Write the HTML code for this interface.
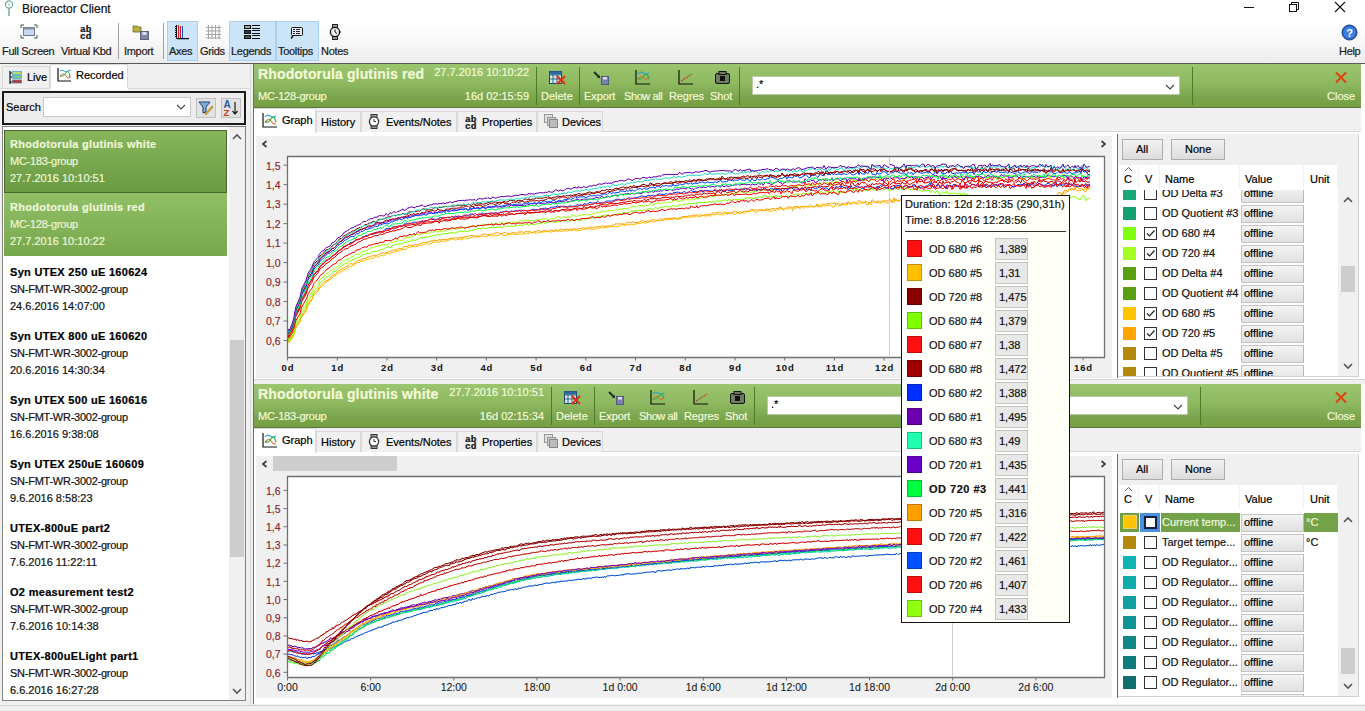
<!DOCTYPE html><html><head><meta charset="utf-8"><style>
*{box-sizing:border-box;margin:0;padding:0}
html,body{width:1365px;height:711px;overflow:hidden;background:#f0f0f0;font-family:"Liberation Sans",sans-serif;font-size:11px;color:#000}
.a{position:absolute}
.t{position:absolute;white-space:nowrap;line-height:1;-webkit-text-stroke:0.2px currentColor}
.ht{-webkit-text-stroke:0.2px currentColor}
.sep{position:absolute;width:1px;background:#a0a0a0}
.gsep{position:absolute;width:1px;background:#4f7a2c}
.hdr{position:absolute;background:linear-gradient(#9bc56f,#8eb95f 45%,#7ca650 75%,#75a142 96%);border-bottom:1px solid #5e7448}
.ht{position:absolute;white-space:nowrap;line-height:1;color:#f3f9d8}
.tab{position:absolute;background:#f0f0f0;border:1px solid #d9d9d9;border-bottom:none}
.tabs{position:absolute;background:#fff;border:1px solid #d9d9d9;border-bottom:none}
.btn{position:absolute;background:linear-gradient(#f2f2f2,#dcdcdc);border:1px solid #adadad}
.vbox{position:absolute;background:linear-gradient(#f4f4f4,#e0e0e0);border:1px solid #c4c4c4;border-right-color:#b8b8b8}
.sw{position:absolute;width:14px;height:14px}
.cb{position:absolute;width:13px;height:13px;border:1px solid #333;background:#fff}
</style></head><body>
<div class="a" style="left:0;top:0;width:1365px;height:63px;background:linear-gradient(#fff 0px,#fff 22px,#f6f6f6 45px,#ececec 62px)"></div>
<div class="a" style="left:0;top:63px;width:1365px;height:1px;background:#585858"></div>
<svg class="a" style="left:3px;top:0px" width="14" height="17"><circle cx="6" cy="4.5" r="3.6" fill="none" stroke="#6fae90" stroke-width="1.2"/><line x1="6" y1="8" x2="6" y2="16" stroke="#7ab59a" stroke-width="1.6"/><line x1="6" y1="3" x2="6" y2="6" stroke="#6fae90" stroke-width="0.8"/></svg>
<div class="t" style="left:22px;top:3px;font-size:12px;color:#111">Bioreactor Client</div>
<div class="a" style="left:1244px;top:7px;width:10px;height:1px;background:#111"></div>
<svg class="a" style="left:1288px;top:1px" width="12" height="12"><rect x="1.5" y="3.5" width="7" height="7" fill="none" stroke="#111"/><path d="M3.5 3.5V1.5H10.5V8.5H8.5" fill="none" stroke="#111"/></svg>
<svg class="a" style="left:1334px;top:1px" width="12" height="12"><path d="M1 1L11 11M11 1L1 11" stroke="#111" stroke-width="1.1"/></svg>
<div class="a" style="left:167px;top:21px;width:31px;height:40px;background:#cce4f7;border:1px solid #a8d0f0"></div>
<div class="a" style="left:229px;top:21px;width:47px;height:40px;background:#cce4f7;border:1px solid #a8d0f0"></div>
<div class="a" style="left:276px;top:21px;width:43px;height:40px;background:#cce4f7;border:1px solid #a8d0f0"></div>
<div class="sep" style="left:118px;top:23px;height:36px"></div>
<div class="sep" style="left:163px;top:23px;height:36px"></div>
<div class="t" style="left:2px;top:46px;font-size:11px;letter-spacing:-0.3px;color:#1a1a1a">Full Screen</div>
<div class="t" style="left:61px;top:46px;font-size:11px;letter-spacing:-0.3px;color:#1a1a1a">Virtual Kbd</div>
<div class="t" style="left:124px;top:46px;font-size:11px;letter-spacing:-0.3px;color:#1a1a1a">Import</div>
<div class="t" style="left:169px;top:46px;font-size:11px;letter-spacing:-0.3px;color:#1a1a1a">Axes</div>
<div class="t" style="left:200px;top:46px;font-size:11px;letter-spacing:-0.3px;color:#1a1a1a">Grids</div>
<div class="t" style="left:231px;top:46px;font-size:11px;letter-spacing:-0.3px;color:#1a1a1a">Legends</div>
<div class="t" style="left:278px;top:46px;font-size:11px;letter-spacing:-0.3px;color:#1a1a1a">Tooltips</div>
<div class="t" style="left:321px;top:46px;font-size:11px;letter-spacing:-0.3px;color:#1a1a1a">Notes</div>
<div class="t" style="left:1339px;top:46px;font-size:11px;letter-spacing:-0.3px;color:#1a1a1a">Help</div>
<svg class="a" style="left:20px;top:24px" width="18" height="15"><path d="M1 4V1H4M14 1H17V4M17 11V14H14M4 14H1V11" fill="none" stroke="#3a5a3a" stroke-width="1"/><rect x="3.5" y="3.5" width="11" height="8" fill="#c8d8f0" stroke="#6a7a90"/><rect x="3.5" y="3.5" width="11" height="2" fill="#8090a8"/></svg>
<div class="t" style="left:80px;top:26px;font-family:'Liberation Mono',monospace;font-size:9.5px;line-height:7px;font-weight:bold;color:#111">ab<br>cd</div>
<svg class="a" style="left:132px;top:24px" width="18" height="16"><path d="M1 2H5L6 3H9V8H1Z" fill="#b8b040" stroke="#706820" stroke-width="0.8"/><rect x="8.5" y="7.5" width="8" height="8" fill="#8088a8" stroke="#606080"/><rect x="10.5" y="8" width="4" height="3" fill="#dde"/></svg>
<svg class="a" style="left:172px;top:24px" width="20" height="17"><path d="M4.5 1V14.5H17" fill="none" stroke="#111" stroke-width="1"/><path d="M3 2.5H4M3 4.5H4M3 6.5H4M3 8.5H4M3 10.5H4M3 12.5H4M6 15.5V16M8 15.5V16M10 15.5V16M12 15.5V16M14 15.5V16M16 15.5V16" stroke="#111"/><path d="M6.5 1V14M8.5 2V14" stroke="#d01828" stroke-width="1"/><path d="M7.5 3H8M7.5 6H8M7.5 9H8M7.5 12H8" stroke="#f0a0a0"/><path d="M10.5 2V14" stroke="#1a60c8" stroke-width="1"/></svg>
<svg class="a" style="left:206px;top:25px" width="15" height="15"><path d="M2.5 0V14M6 0V14M9.5 0V14M13 0V14M0 2.5H15M0 6H15M0 9.5H15M0 13H15" stroke="#a4a4a4" stroke-width="1"/></svg>
<svg class="a" style="left:244px;top:24px" width="17" height="15"><rect x="0.5" y="1.5" width="6" height="3" fill="#9a9" stroke="#111"/><rect x="0.5" y="6.5" width="6" height="3" fill="#335" stroke="#111"/><rect x="0.5" y="11.5" width="6" height="3" fill="#555" stroke="#111"/><path d="M8 1.5H16M8 4.5H16M8 6.5H16M8 9.5H16M8 11.5H16M8 14.5H16" stroke="#111" stroke-width="1"/></svg>
<svg class="a" style="left:290px;top:26px" width="14" height="14"><rect x="1.5" y="1.5" width="11" height="8" rx="1" fill="#e8eef8" stroke="#111"/><path d="M3 10L1 12.5" stroke="#111" stroke-width="1.5"/><path d="M3 3.5H5M6 3.5H10M3 5.5H5M6 5.5H10M3 7.5H5M6 7.5H10" stroke="#223"/></svg>
<svg class="a" style="left:329px;top:24px" width="13" height="16"><rect x="3.5" y="0.5" width="5" height="3" fill="#999" stroke="#222"/><rect x="3.5" y="12.5" width="5" height="3" fill="#999" stroke="#222"/><circle cx="6" cy="8" r="4.6" fill="#e8ece8" stroke="#111" stroke-width="1.3"/><path d="M6 5.5V8L8 9.5" stroke="#111" fill="none"/><path d="M11 7V9" stroke="#111"/></svg>
<svg class="a" style="left:1341px;top:24px" width="17" height="17"><circle cx="8.5" cy="8.5" r="7.5" fill="#2a64c8" stroke="#1a3a80"/><circle cx="8.5" cy="8.5" r="6" fill="#3f7ee0"/><text x="8.5" y="13" font-family="Liberation Sans" font-weight="bold" font-size="11" fill="#fff" text-anchor="middle">?</text></svg>
<div class="a" style="left:2px;top:66px;width:48px;height:22px;background:#f0f0f0;border:1px solid #d9d9d9;border-bottom:none"></div>
<div class="a" style="left:50px;top:64px;width:78px;height:25px;background:#fff;border:1px solid #d9d9d9;border-bottom:none"></div>
<div class="a" style="left:0px;top:88px;width:250px;height:1px;background:#d9d9d9"></div>
<div class="a" style="left:50px;top:88px;width:78px;height:2px;background:#fff"></div>
<svg class="a" style="left:9px;top:70px" width="14" height="15"><path d="M1 1V14M1 3H3M1 7H3M1 12H3" stroke="#111" stroke-width="1.2"/><rect x="3.5" y="1.5" width="9" height="3" fill="#b8e060" stroke="#60a0d0" stroke-width="0.8"/><rect x="3.5" y="5.5" width="9" height="3" fill="#70d080" stroke="#60a0d0" stroke-width="0.8"/><rect x="3.5" y="10" width="9" height="3" fill="#c03030" stroke="#6080a0" stroke-width="0.8"/></svg>
<div class="t" style="left:27px;top:72px">Live</div>
<svg class="a" style="left:57px;top:68px" width="14" height="15"><path d="M1 0V13H14" fill="none" stroke="#111" stroke-width="1.2"/><path d="M3 3Q5 1 7 3T11 3T14 3" fill="none" stroke="#30a0c0"/><path d="M3 9Q6 3 9 8T13 7" fill="none" stroke="#e06030"/><path d="M3 7Q6 10 9 5T13 10" fill="none" stroke="#30b050"/></svg>
<div class="t" style="left:76px;top:70px">Recorded</div>
<div class="a" style="left:2px;top:91px;width:244px;height:34px;background:#ececec;border:2px solid #1a1a1a"></div>
<div class="t" style="left:6px;top:102px">Search</div>
<div class="a" style="left:43px;top:97px;width:148px;height:20px;background:#fff;border:1px solid #c8c8c8"></div>
<svg class="a" style="left:176px;top:104px" width="10" height="6"><path d="M1 1L5 5L9 1" fill="none" stroke="#444" stroke-width="1.1"/></svg>
<div class="a" style="left:196px;top:98px;width:20px;height:20px;background:#e2e2e2;border:1px solid #c0c0c0"></div>
<div class="a" style="left:221px;top:98px;width:20px;height:20px;background:#e2e2e2;border:1px solid #c0c0c0"></div>
<svg class="a" style="left:198px;top:100px" width="16" height="16"><path d="M1 2H12L8 7V12L5 13V7Z" fill="#7ab0e0" stroke="#204070" stroke-width="1"/><path d="M7 14L14 6L15 7L8 15Z" fill="#f0c020" stroke="#806010" stroke-width="0.6"/></svg>
<svg class="a" style="left:223px;top:100px" width="16" height="16"><text x="0.5" y="8" font-family="Liberation Sans" font-weight="bold" font-size="10" fill="#2a5aa8">A</text><text x="0.5" y="16" font-family="Liberation Sans" font-weight="bold" font-size="9.5" fill="#c83c10">Z</text><path d="M12 2V14M9.5 11L12 14L14.5 11" fill="none" stroke="#222" stroke-width="1.2"/></svg>
<div class="a" style="left:2px;top:126px;width:244px;height:575px;background:#fff;border:1px solid #828282"></div>
<div class="a" style="left:229px;top:127px;width:16px;height:573px;background:#f0f0f0"></div>
<div class="a" style="left:230px;top:340px;width:14px;height:217px;background:#cdcdcd"></div>
<svg class="a" style="left:232px;top:133px" width="10" height="7"><path d="M1 6L5 2L9 6" fill="none" stroke="#555" stroke-width="1.6"/></svg>
<svg class="a" style="left:232px;top:688px" width="10" height="7"><path d="M1 1L5 5L9 1" fill="none" stroke="#555" stroke-width="1.6"/></svg>
<div class="a" style="left:4px;top:130px;width:223px;height:63px;background:linear-gradient(#87b55c,#6a9a42);border:1px solid #46682e"></div>
<div class="t" style="left:10px;top:139px;font-weight:bold;font-size:11px;letter-spacing:0.3px;color:#eef6da">Rhodotorula glutinis white</div>
<div class="t" style="left:10px;top:156px;color:#eef6da;letter-spacing:-0.25px">MC-183-group</div>
<div class="t" style="left:10px;top:173px;color:#eef6da">27.7.2016 10:10:51</div>
<div class="a" style="left:4px;top:193px;width:223px;height:63px;background:linear-gradient(#91bf66,#77a74c)"></div>
<div class="t" style="left:10px;top:202px;font-weight:bold;font-size:11px;letter-spacing:0.3px;color:#eef6da">Rhodotorula glutinis red</div>
<div class="t" style="left:10px;top:219px;color:#eef6da;letter-spacing:-0.25px">MC-128-group</div>
<div class="t" style="left:10px;top:236px;color:#eef6da">27.7.2016 10:10:22</div>
<div class="t" style="left:10px;top:267px;font-weight:bold;font-size:11px;letter-spacing:0.3px;color:#000">Syn UTEX 250 uE 160624</div>
<div class="t" style="left:10px;top:284px;color:#111;letter-spacing:-0.25px">SN-FMT-WR-3002-group</div>
<div class="t" style="left:10px;top:301px;color:#111">24.6.2016 14:07:00</div>
<div class="t" style="left:10px;top:331px;font-weight:bold;font-size:11px;letter-spacing:0.3px;color:#000">Syn UTEX 800 uE 160620</div>
<div class="t" style="left:10px;top:348px;color:#111;letter-spacing:-0.25px">SN-FMT-WR-3002-group</div>
<div class="t" style="left:10px;top:365px;color:#111">20.6.2016 14:30:34</div>
<div class="t" style="left:10px;top:395px;font-weight:bold;font-size:11px;letter-spacing:0.3px;color:#000">Syn UTEX 500 uE 160616</div>
<div class="t" style="left:10px;top:412px;color:#111;letter-spacing:-0.25px">SN-FMT-WR-3002-group</div>
<div class="t" style="left:10px;top:429px;color:#111">16.6.2016 9:38:08</div>
<div class="t" style="left:10px;top:459px;font-weight:bold;font-size:11px;letter-spacing:0.3px;color:#000">Syn UTEX 250uE 160609</div>
<div class="t" style="left:10px;top:476px;color:#111;letter-spacing:-0.25px">SN-FMT-WR-3002-group</div>
<div class="t" style="left:10px;top:493px;color:#111">9.6.2016 8:58:23</div>
<div class="t" style="left:10px;top:523px;font-weight:bold;font-size:11px;letter-spacing:0.3px;color:#000">UTEX-800uE part2</div>
<div class="t" style="left:10px;top:540px;color:#111;letter-spacing:-0.25px">SN-FMT-WR-3002-group</div>
<div class="t" style="left:10px;top:557px;color:#111">7.6.2016 11:22:11</div>
<div class="t" style="left:10px;top:587px;font-weight:bold;font-size:11px;letter-spacing:0.3px;color:#000">O2 measurement test2</div>
<div class="t" style="left:10px;top:604px;color:#111;letter-spacing:-0.25px">SN-FMT-WR-3002-group</div>
<div class="t" style="left:10px;top:621px;color:#111">7.6.2016 10:14:38</div>
<div class="t" style="left:10px;top:651px;font-weight:bold;font-size:11px;letter-spacing:0.3px;color:#000">UTEX-800uELight part1</div>
<div class="t" style="left:10px;top:668px;color:#111;letter-spacing:-0.25px">SN-FMT-WR-3002-group</div>
<div class="t" style="left:10px;top:685px;color:#111">6.6.2016 16:27:28</div>
<div class="a" style="left:250px;top:64px;width:1px;height:641px;background:#d8d8d8"></div>
<div class="a" style="left:0px;top:705px;width:1365px;height:1px;background:#d0d0d0"></div>
<div class="a" style="left:253px;top:64px;width:1112px;height:316px;background:#fff;border-left:1px solid #6e6e6e"></div>
<div class="hdr" style="left:254px;top:64px;width:1107px;height:44px"></div>
<div class="a" style="left:254px;top:108px;width:1107px;height:1px;background:#e4eedc"></div>
<div class="ht" style="left:258px;top:67px;font-weight:bold;font-size:14px;letter-spacing:0.15px">Rhodotorula glutinis red</div>
<div class="ht" style="left:258px;top:91px;font-size:11px;letter-spacing:-0.2px">MC-128-group</div>
<div class="ht" style="left:433px;width:96px;text-align:right;top:67px;font-size:11px">27.7.2016 10:10:22</div>
<div class="ht" style="left:433px;width:96px;text-align:right;top:91px;font-size:11px">16d 02:15:59</div>
<div class="gsep" style="left:536px;top:67px;height:38px"></div>
<div class="ht" style="left:541px;top:91px">Delete</div>
<svg class="a" style="left:549px;top:71px" width="18" height="14"><rect x="0.5" y="0.5" width="12" height="12" fill="#d8e8f0" stroke="#1a4a6a"/><path d="M0.5 4H12M4 1V12M8 1V12M0.5 8H12" stroke="#1a4a6a" stroke-width="0.8"/><rect x="0.5" y="0.5" width="12" height="3" fill="#2a6aa0"/><path d="M8 5L16 13M16 5L8 13" stroke="#e03010" stroke-width="2"/></svg>
<div class="gsep" style="left:579px;top:67px;height:38px"></div>
<div class="ht" style="left:584px;top:91px;letter-spacing:-0.1px">Export</div>
<div class="ht" style="left:624px;top:91px;letter-spacing:-0.4px">Show all</div>
<div class="ht" style="left:669px;top:91px;letter-spacing:-0.1px">Regres</div>
<div class="ht" style="left:710px;top:91px;letter-spacing:-0.1px">Shot</div>
<svg class="a" style="left:592px;top:70px" width="18" height="15"><path d="M2 2L7 7" stroke="#203020" stroke-width="2"/><path d="M5 8H8V5Z" fill="#203020"/><rect x="9.5" y="6.5" width="7" height="8" fill="#7880b0" stroke="#505880"/><rect x="11" y="7" width="4" height="2.5" fill="#dde"/></svg>
<svg class="a" style="left:635px;top:70px" width="16" height="15"><path d="M1 0V14H15" fill="none" stroke="#111" stroke-width="1.2"/><path d="M3 4Q5 1 8 3T14 3" fill="none" stroke="#30a0d0" stroke-width="1.2"/><path d="M3 10Q6 4 9 8T14 6" fill="none" stroke="#e07030" stroke-width="1.2"/><path d="M3 8Q6 11 9 6T14 9" fill="none" stroke="#30b050" stroke-width="1.2"/></svg>
<svg class="a" style="left:678px;top:70px" width="16" height="15"><path d="M1 0V14H15" fill="none" stroke="#111" stroke-width="1.2"/><path d="M3 11L14 4" stroke="#c04020" stroke-width="1.2" stroke-dasharray="2 1"/></svg>
<svg class="a" style="left:715px;top:71px" width="15" height="13"><rect x="0.5" y="2.5" width="14" height="10" rx="1.5" fill="#707c60" stroke="#111"/><rect x="4" y="0.5" width="7" height="3" fill="#707c60" stroke="#111"/><rect x="5" y="5" width="5" height="5" fill="#111"/></svg>
<div class="gsep" style="left:739px;top:67px;height:38px"></div>
<div class="a" style="left:752px;top:76px;width:428px;height:19px;background:#fff;border:1px solid #b8c8a8"></div>
<div class="t" style="left:756px;top:79px;font-size:11px">.*</div>
<svg class="a" style="left:1165px;top:84px" width="10" height="6"><path d="M1 1L5 5L9 1" fill="none" stroke="#444" stroke-width="1.1"/></svg>
<div class="gsep" style="left:1192px;top:67px;height:38px"></div>
<svg class="a" style="left:1334px;top:71px" width="14" height="13"><path d="M2 1.5L12 11.5M12 1.5L2 11.5" stroke="#e04010" stroke-width="2"/></svg>
<div class="ht" style="left:1327px;top:91px">Close</div>
<div class="a" style="left:254px;top:108px;width:1107px;height:24px;background:#f0f0f0"></div>
<div class="a" style="left:254px;top:131px;width:1107px;height:1px;background:#d9d9d9"></div>
<div class="tab" style="left:316px;top:111px;width:45px;height:21px"></div>
<div class="tab" style="left:361px;top:111px;width:96px;height:21px"></div>
<div class="tab" style="left:457px;top:111px;width:80px;height:21px"></div>
<div class="tab" style="left:537px;top:111px;width:66px;height:21px"></div>
<div class="tabs" style="left:254px;top:108px;width:62px;height:25px;border-left:none"></div>
<div class="a" style="left:254px;top:131px;width:61px;height:2px;background:#fff"></div>
<svg class="a" style="left:262px;top:113px" width="16" height="15"><path d="M1 0V14H15" fill="none" stroke="#111" stroke-width="1.2"/><path d="M3 4Q5 1 8 3T14 3" fill="none" stroke="#30a0d0" stroke-width="1.2"/><path d="M3 10Q6 4 9 8T14 11" fill="none" stroke="#e07030" stroke-width="1.2"/><path d="M3 8Q6 11 9 6T14 9" fill="none" stroke="#30b050" stroke-width="1.2"/></svg>
<div class="t" style="left:282px;top:115px;font-size:11px">Graph</div>
<div class="t" style="left:321px;top:117px;font-size:11px">History</div>
<svg class="a" style="left:368px;top:114px" width="12" height="15"><rect x="3" y="0.5" width="6" height="3" fill="#999" stroke="#333"/><rect x="3" y="11.5" width="6" height="3" fill="#999" stroke="#333"/><circle cx="6" cy="7.5" r="4.6" fill="#fff" stroke="#333" stroke-width="1.3"/><path d="M6 5V7.5H8" stroke="#333" fill="none"/></svg>
<div class="t" style="left:386px;top:117px;font-size:11px">Events/Notes</div>
<div class="t" style="left:465px;top:116px;font-family:'Liberation Mono',monospace;font-size:9.5px;line-height:7px;font-weight:bold;color:#111">ab<br>cd</div>
<div class="t" style="left:482px;top:117px;font-size:11px">Properties</div>
<svg class="a" style="left:544px;top:114px" width="14" height="14"><rect x="0.5" y="0.5" width="8" height="8" fill="#ddd" stroke="#999"/><rect x="3.5" y="3.5" width="8" height="8" fill="#ccc" stroke="#999"/><rect x="5.5" y="5.5" width="8" height="8" fill="#bbb" stroke="#888"/></svg>
<div class="t" style="left:562px;top:117px;font-size:11px">Devices</div>
<div class="a" style="left:256px;top:136px;width:856px;height:242px;background:#f0f0f0"></div>
<svg class="a" style="left:261px;top:140px" width="7" height="8"><path d="M5.5 1L2 4L5.5 7" fill="none" stroke="#444" stroke-width="1.8"/></svg>
<svg class="a" style="left:1100px;top:140px" width="7" height="8"><path d="M1.5 1L5 4L1.5 7" fill="none" stroke="#444" stroke-width="1.8"/></svg>
<div class="a" style="left:1117px;top:134px;width:1px;height:244px;background:#6e6e6e"></div>
<div class="a" style="left:1118px;top:134px;width:241px;height:243px;background:#f0f0f0;border-right:1px solid #d0d0d0;border-bottom:1px solid #d0d0d0"></div>
<div class="btn" style="left:1122px;top:139px;width:41px;height:21px"></div>
<div class="t" style="left:1136px;top:144px">All</div>
<div class="btn" style="left:1171px;top:139px;width:54px;height:21px"></div>
<div class="t" style="left:1185px;top:144px">None</div>
<div class="a" style="left:1119px;top:165px;width:219px;height:211px;background:#fff"></div>
<div class="a" style="left:0;top:165px;width:1338px;height:211px;overflow:hidden">
<div class="sw" style="left:1123px;top:22px;width:13px;height:13px;background:#1aa878"></div>
<div class="cb" style="left:1144px;top:22px;"></div>
<div class="t" style="left:1162px;top:23px;color:#111;font-size:11px">OD Delta #3</div>
<div class="vbox" style="left:1241px;top:20px;width:63px;height:18px"></div>
<div class="t" style="left:1244px;top:23px;font-size:11px">offline</div>
<div class="sw" style="left:1123px;top:42px;width:13px;height:13px;background:#12a070"></div>
<div class="cb" style="left:1144px;top:42px;"></div>
<div class="t" style="left:1162px;top:43px;color:#111;font-size:11px">OD Quotient #3</div>
<div class="vbox" style="left:1241px;top:40px;width:63px;height:18px"></div>
<div class="t" style="left:1244px;top:43px;font-size:11px">offline</div>
<div class="sw" style="left:1123px;top:62px;width:13px;height:13px;background:#80ff10"></div>
<div class="cb" style="left:1144px;top:62px;"></div>
<svg class="a" style="left:1145px;top:63px" width="11" height="11"><path d="M2 5.5L4.5 8L9.5 2.5" fill="none" stroke="#222" stroke-width="1.2"/></svg>
<div class="t" style="left:1162px;top:63px;color:#111;font-size:11px">OD 680 #4</div>
<div class="vbox" style="left:1241px;top:60px;width:63px;height:18px"></div>
<div class="t" style="left:1244px;top:63px;font-size:11px">offline</div>
<div class="sw" style="left:1123px;top:82px;width:13px;height:13px;background:#a4ff20"></div>
<div class="cb" style="left:1144px;top:82px;"></div>
<svg class="a" style="left:1145px;top:83px" width="11" height="11"><path d="M2 5.5L4.5 8L9.5 2.5" fill="none" stroke="#222" stroke-width="1.2"/></svg>
<div class="t" style="left:1162px;top:83px;color:#111;font-size:11px">OD 720 #4</div>
<div class="vbox" style="left:1241px;top:80px;width:63px;height:18px"></div>
<div class="t" style="left:1244px;top:83px;font-size:11px">offline</div>
<div class="sw" style="left:1123px;top:102px;width:13px;height:13px;background:#5aa010"></div>
<div class="cb" style="left:1144px;top:102px;"></div>
<div class="t" style="left:1162px;top:103px;color:#111;font-size:11px">OD Delta #4</div>
<div class="vbox" style="left:1241px;top:100px;width:63px;height:18px"></div>
<div class="t" style="left:1244px;top:103px;font-size:11px">offline</div>
<div class="sw" style="left:1123px;top:122px;width:13px;height:13px;background:#5a9e12"></div>
<div class="cb" style="left:1144px;top:122px;"></div>
<div class="t" style="left:1162px;top:123px;color:#111;font-size:11px">OD Quotient #4</div>
<div class="vbox" style="left:1241px;top:120px;width:63px;height:18px"></div>
<div class="t" style="left:1244px;top:123px;font-size:11px">offline</div>
<div class="sw" style="left:1123px;top:142px;width:13px;height:13px;background:#ffc400"></div>
<div class="cb" style="left:1144px;top:142px;"></div>
<svg class="a" style="left:1145px;top:143px" width="11" height="11"><path d="M2 5.5L4.5 8L9.5 2.5" fill="none" stroke="#222" stroke-width="1.2"/></svg>
<div class="t" style="left:1162px;top:143px;color:#111;font-size:11px">OD 680 #5</div>
<div class="vbox" style="left:1241px;top:140px;width:63px;height:18px"></div>
<div class="t" style="left:1244px;top:143px;font-size:11px">offline</div>
<div class="sw" style="left:1123px;top:162px;width:13px;height:13px;background:#ffa400"></div>
<div class="cb" style="left:1144px;top:162px;"></div>
<svg class="a" style="left:1145px;top:163px" width="11" height="11"><path d="M2 5.5L4.5 8L9.5 2.5" fill="none" stroke="#222" stroke-width="1.2"/></svg>
<div class="t" style="left:1162px;top:163px;color:#111;font-size:11px">OD 720 #5</div>
<div class="vbox" style="left:1241px;top:160px;width:63px;height:18px"></div>
<div class="t" style="left:1244px;top:163px;font-size:11px">offline</div>
<div class="sw" style="left:1123px;top:182px;width:13px;height:13px;background:#b08a08"></div>
<div class="cb" style="left:1144px;top:182px;"></div>
<div class="t" style="left:1162px;top:183px;color:#111;font-size:11px">OD Delta #5</div>
<div class="vbox" style="left:1241px;top:180px;width:63px;height:18px"></div>
<div class="t" style="left:1244px;top:183px;font-size:11px">offline</div>
<div class="sw" style="left:1123px;top:202px;width:13px;height:13px;background:#b08a08"></div>
<div class="cb" style="left:1144px;top:202px;"></div>
<div class="t" style="left:1162px;top:203px;color:#111;font-size:11px">OD Quotient #5</div>
<div class="vbox" style="left:1241px;top:200px;width:63px;height:18px"></div>
<div class="t" style="left:1244px;top:203px;font-size:11px">offline</div>
</div>
<div class="a" style="left:1119px;top:165px;width:219px;height:25px;background:#fff"></div>
<div class="a" style="left:1138px;top:166px;width:1px;height:23px;background:#f0f0f0"></div>
<div class="a" style="left:1159px;top:166px;width:1px;height:23px;background:#f0f0f0"></div>
<div class="a" style="left:1239px;top:166px;width:1px;height:23px;background:#f0f0f0"></div>
<div class="a" style="left:1303px;top:166px;width:1px;height:23px;background:#f0f0f0"></div>
<div class="a" style="left:1337px;top:166px;width:1px;height:23px;background:#f0f0f0"></div>
<svg class="a" style="left:1124px;top:166px" width="9" height="6"><path d="M1 5L4.5 1.5L8 5" fill="none" stroke="#555" stroke-width="0.9"/></svg>
<div class="t" style="left:1124px;top:174px;font-size:11px">C</div>
<div class="t" style="left:1145px;top:174px;font-size:11px">V</div>
<div class="t" style="left:1165px;top:174px;font-size:11px">Name</div>
<div class="t" style="left:1245px;top:174px;font-size:11px">Value</div>
<div class="t" style="left:1310px;top:174px;font-size:11px">Unit</div>
<div class="a" style="left:1340px;top:190px;width:18px;height:186px;background:#f0f0f0"></div>
<div class="a" style="left:1341px;top:266px;width:14px;height:26px;background:#cdcdcd"></div>
<svg class="a" style="left:1343px;top:196px" width="10" height="7"><path d="M1 6L5 2L9 6" fill="none" stroke="#555" stroke-width="1.6"/></svg>
<svg class="a" style="left:1343px;top:363px" width="10" height="7"><path d="M1 1L5 5L9 1" fill="none" stroke="#555" stroke-width="1.6"/></svg>
<div class="a" style="left:253px;top:384px;width:1112px;height:320px;background:#fff;border-left:1px solid #6e6e6e"></div>
<div class="a" style="left:254px;top:379px;width:1111px;height:5px;background:#f0f0f0;border-top:1px solid #d4d4d4"></div>
<div class="hdr" style="left:254px;top:384px;width:1107px;height:44px"></div>
<div class="a" style="left:254px;top:428px;width:1107px;height:1px;background:#e4eedc"></div>
<div class="ht" style="left:258px;top:387px;font-weight:bold;font-size:14px;letter-spacing:0.15px">Rhodotorula glutinis white</div>
<div class="ht" style="left:258px;top:411px;font-size:11px;letter-spacing:-0.2px">MC-183-group</div>
<div class="ht" style="left:448px;width:96px;text-align:right;top:387px;font-size:11px">27.7.2016 10:10:51</div>
<div class="ht" style="left:448px;width:96px;text-align:right;top:411px;font-size:11px">16d 02:15:34</div>
<div class="gsep" style="left:551px;top:387px;height:38px"></div>
<div class="ht" style="left:556px;top:411px">Delete</div>
<svg class="a" style="left:564px;top:391px" width="18" height="14"><rect x="0.5" y="0.5" width="12" height="12" fill="#d8e8f0" stroke="#1a4a6a"/><path d="M0.5 4H12M4 1V12M8 1V12M0.5 8H12" stroke="#1a4a6a" stroke-width="0.8"/><rect x="0.5" y="0.5" width="12" height="3" fill="#2a6aa0"/><path d="M8 5L16 13M16 5L8 13" stroke="#e03010" stroke-width="2"/></svg>
<div class="gsep" style="left:594px;top:387px;height:38px"></div>
<div class="ht" style="left:599px;top:411px;letter-spacing:-0.1px">Export</div>
<div class="ht" style="left:639px;top:411px;letter-spacing:-0.4px">Show all</div>
<div class="ht" style="left:684px;top:411px;letter-spacing:-0.1px">Regres</div>
<div class="ht" style="left:725px;top:411px;letter-spacing:-0.1px">Shot</div>
<svg class="a" style="left:607px;top:390px" width="18" height="15"><path d="M2 2L7 7" stroke="#203020" stroke-width="2"/><path d="M5 8H8V5Z" fill="#203020"/><rect x="9.5" y="6.5" width="7" height="8" fill="#7880b0" stroke="#505880"/><rect x="11" y="7" width="4" height="2.5" fill="#dde"/></svg>
<svg class="a" style="left:650px;top:390px" width="16" height="15"><path d="M1 0V14H15" fill="none" stroke="#111" stroke-width="1.2"/><path d="M3 4Q5 1 8 3T14 3" fill="none" stroke="#30a0d0" stroke-width="1.2"/><path d="M3 10Q6 4 9 8T14 6" fill="none" stroke="#e07030" stroke-width="1.2"/><path d="M3 8Q6 11 9 6T14 9" fill="none" stroke="#30b050" stroke-width="1.2"/></svg>
<svg class="a" style="left:693px;top:390px" width="16" height="15"><path d="M1 0V14H15" fill="none" stroke="#111" stroke-width="1.2"/><path d="M3 11L14 4" stroke="#c04020" stroke-width="1.2" stroke-dasharray="2 1"/></svg>
<svg class="a" style="left:730px;top:391px" width="15" height="13"><rect x="0.5" y="2.5" width="14" height="10" rx="1.5" fill="#707c60" stroke="#111"/><rect x="4" y="0.5" width="7" height="3" fill="#707c60" stroke="#111"/><rect x="5" y="5" width="5" height="5" fill="#111"/></svg>
<div class="gsep" style="left:754px;top:387px;height:38px"></div>
<div class="a" style="left:767px;top:396px;width:421px;height:19px;background:#fff;border:1px solid #b8c8a8"></div>
<div class="t" style="left:771px;top:399px;font-size:11px">.*</div>
<svg class="a" style="left:1173px;top:404px" width="10" height="6"><path d="M1 1L5 5L9 1" fill="none" stroke="#444" stroke-width="1.1"/></svg>
<div class="gsep" style="left:1200px;top:387px;height:38px"></div>
<svg class="a" style="left:1334px;top:391px" width="14" height="13"><path d="M2 1.5L12 11.5M12 1.5L2 11.5" stroke="#e04010" stroke-width="2"/></svg>
<div class="ht" style="left:1327px;top:411px">Close</div>
<div class="a" style="left:254px;top:428px;width:1107px;height:24px;background:#f0f0f0"></div>
<div class="a" style="left:254px;top:451px;width:1107px;height:1px;background:#d9d9d9"></div>
<div class="tab" style="left:316px;top:431px;width:45px;height:21px"></div>
<div class="tab" style="left:361px;top:431px;width:96px;height:21px"></div>
<div class="tab" style="left:457px;top:431px;width:80px;height:21px"></div>
<div class="tab" style="left:537px;top:431px;width:66px;height:21px"></div>
<div class="tabs" style="left:254px;top:428px;width:62px;height:25px;border-left:none"></div>
<div class="a" style="left:254px;top:451px;width:61px;height:2px;background:#fff"></div>
<svg class="a" style="left:262px;top:433px" width="16" height="15"><path d="M1 0V14H15" fill="none" stroke="#111" stroke-width="1.2"/><path d="M3 4Q5 1 8 3T14 3" fill="none" stroke="#30a0d0" stroke-width="1.2"/><path d="M3 10Q6 4 9 8T14 11" fill="none" stroke="#e07030" stroke-width="1.2"/><path d="M3 8Q6 11 9 6T14 9" fill="none" stroke="#30b050" stroke-width="1.2"/></svg>
<div class="t" style="left:282px;top:435px;font-size:11px">Graph</div>
<div class="t" style="left:321px;top:437px;font-size:11px">History</div>
<svg class="a" style="left:368px;top:434px" width="12" height="15"><rect x="3" y="0.5" width="6" height="3" fill="#999" stroke="#333"/><rect x="3" y="11.5" width="6" height="3" fill="#999" stroke="#333"/><circle cx="6" cy="7.5" r="4.6" fill="#fff" stroke="#333" stroke-width="1.3"/><path d="M6 5V7.5H8" stroke="#333" fill="none"/></svg>
<div class="t" style="left:386px;top:437px;font-size:11px">Events/Notes</div>
<div class="t" style="left:465px;top:436px;font-family:'Liberation Mono',monospace;font-size:9.5px;line-height:7px;font-weight:bold;color:#111">ab<br>cd</div>
<div class="t" style="left:482px;top:437px;font-size:11px">Properties</div>
<svg class="a" style="left:544px;top:434px" width="14" height="14"><rect x="0.5" y="0.5" width="8" height="8" fill="#ddd" stroke="#999"/><rect x="3.5" y="3.5" width="8" height="8" fill="#ccc" stroke="#999"/><rect x="5.5" y="5.5" width="8" height="8" fill="#bbb" stroke="#888"/></svg>
<div class="t" style="left:562px;top:437px;font-size:11px">Devices</div>
<div class="a" style="left:256px;top:456px;width:856px;height:242px;background:#f0f0f0"></div>
<svg class="a" style="left:261px;top:460px" width="7" height="8"><path d="M5.5 1L2 4L5.5 7" fill="none" stroke="#444" stroke-width="1.8"/></svg>
<svg class="a" style="left:1100px;top:460px" width="7" height="8"><path d="M1.5 1L5 4L1.5 7" fill="none" stroke="#444" stroke-width="1.8"/></svg>
<div class="a" style="left:1117px;top:454px;width:1px;height:244px;background:#6e6e6e"></div>
<div class="a" style="left:1118px;top:454px;width:241px;height:243px;background:#f0f0f0;border-right:1px solid #d0d0d0;border-bottom:1px solid #d0d0d0"></div>
<div class="btn" style="left:1122px;top:459px;width:41px;height:21px"></div>
<div class="t" style="left:1136px;top:464px">All</div>
<div class="btn" style="left:1171px;top:459px;width:54px;height:21px"></div>
<div class="t" style="left:1185px;top:464px">None</div>
<div class="a" style="left:1119px;top:485px;width:219px;height:211px;background:#fff"></div>
<div class="a" style="left:0;top:485px;width:1338px;height:211px;overflow:hidden">
<div class="sw" style="left:1123px;top:31px;width:13px;height:13px;background:#ffc400"></div>
<div class="a" style="left:1120px;top:28px;width:19px;height:19px;background:#6f9e44"></div>
<div class="a" style="left:1123px;top:30px;width:14px;height:14px;background:#ffc400;border:1px solid #e8d080"></div>
<div class="a" style="left:1140px;top:28px;width:20px;height:19px;background:#4a8fdc"></div>
<div class="a" style="left:1161px;top:28px;width:79px;height:19px;background:#74a248"></div>
<div class="a" style="left:1304px;top:28px;width:34px;height:19px;background:#74a248"></div>
<div class="cb" style="left:1144px;top:31px;border-color:#10204a;border-width:2px"></div>
<div class="t" style="left:1162px;top:32px;color:#f0f8d8;font-size:11px">Current temp...</div>
<div class="vbox" style="left:1241px;top:29px;width:63px;height:18px"></div>
<div class="t" style="left:1244px;top:32px;font-size:11px">offline</div>
<div class="t" style="left:1306px;top:32px;font-size:11px;color:#f0f8d8">°C</div>
<div class="sw" style="left:1123px;top:51px;width:13px;height:13px;background:#b08a08"></div>
<div class="cb" style="left:1144px;top:51px;"></div>
<div class="t" style="left:1162px;top:52px;color:#111;font-size:11px">Target tempe...</div>
<div class="vbox" style="left:1241px;top:49px;width:63px;height:18px"></div>
<div class="t" style="left:1244px;top:52px;font-size:11px">offline</div>
<div class="t" style="left:1306px;top:52px;font-size:11px;color:#111">°C</div>
<div class="sw" style="left:1123px;top:71px;width:13px;height:13px;background:#10b4b4"></div>
<div class="cb" style="left:1144px;top:71px;"></div>
<div class="t" style="left:1162px;top:72px;color:#111;font-size:11px">OD Regulator...</div>
<div class="vbox" style="left:1241px;top:69px;width:63px;height:18px"></div>
<div class="t" style="left:1244px;top:72px;font-size:11px">offline</div>
<div class="sw" style="left:1123px;top:91px;width:13px;height:13px;background:#10acac"></div>
<div class="cb" style="left:1144px;top:91px;"></div>
<div class="t" style="left:1162px;top:92px;color:#111;font-size:11px">OD Regulator...</div>
<div class="vbox" style="left:1241px;top:89px;width:63px;height:18px"></div>
<div class="t" style="left:1244px;top:92px;font-size:11px">offline</div>
<div class="sw" style="left:1123px;top:111px;width:13px;height:13px;background:#10a0a0"></div>
<div class="cb" style="left:1144px;top:111px;"></div>
<div class="t" style="left:1162px;top:112px;color:#111;font-size:11px">OD Regulator...</div>
<div class="vbox" style="left:1241px;top:109px;width:63px;height:18px"></div>
<div class="t" style="left:1244px;top:112px;font-size:11px">offline</div>
<div class="sw" style="left:1123px;top:131px;width:13px;height:13px;background:#109494"></div>
<div class="cb" style="left:1144px;top:131px;"></div>
<div class="t" style="left:1162px;top:132px;color:#111;font-size:11px">OD Regulator...</div>
<div class="vbox" style="left:1241px;top:129px;width:63px;height:18px"></div>
<div class="t" style="left:1244px;top:132px;font-size:11px">offline</div>
<div class="sw" style="left:1123px;top:151px;width:13px;height:13px;background:#108888"></div>
<div class="cb" style="left:1144px;top:151px;"></div>
<div class="t" style="left:1162px;top:152px;color:#111;font-size:11px">OD Regulator...</div>
<div class="vbox" style="left:1241px;top:149px;width:63px;height:18px"></div>
<div class="t" style="left:1244px;top:152px;font-size:11px">offline</div>
<div class="sw" style="left:1123px;top:171px;width:13px;height:13px;background:#107c7c"></div>
<div class="cb" style="left:1144px;top:171px;"></div>
<div class="t" style="left:1162px;top:172px;color:#111;font-size:11px">OD Regulator...</div>
<div class="vbox" style="left:1241px;top:169px;width:63px;height:18px"></div>
<div class="t" style="left:1244px;top:172px;font-size:11px">offline</div>
<div class="sw" style="left:1123px;top:191px;width:13px;height:13px;background:#106e6e"></div>
<div class="cb" style="left:1144px;top:191px;"></div>
<div class="t" style="left:1162px;top:192px;color:#111;font-size:11px">OD Regulator...</div>
<div class="vbox" style="left:1241px;top:189px;width:63px;height:18px"></div>
<div class="t" style="left:1244px;top:192px;font-size:11px">offline</div>
<div class="sw" style="left:1123px;top:211px;width:13px;height:13px;background:#106666"></div>
<div class="cb" style="left:1144px;top:211px;"></div>
<div class="t" style="left:1162px;top:212px;color:#111;font-size:11px">OD Regulator...</div>
<div class="vbox" style="left:1241px;top:209px;width:63px;height:18px"></div>
<div class="t" style="left:1244px;top:212px;font-size:11px">offline</div>
</div>
<div class="a" style="left:1119px;top:485px;width:219px;height:25px;background:#fff"></div>
<div class="a" style="left:1138px;top:486px;width:1px;height:23px;background:#f0f0f0"></div>
<div class="a" style="left:1159px;top:486px;width:1px;height:23px;background:#f0f0f0"></div>
<div class="a" style="left:1239px;top:486px;width:1px;height:23px;background:#f0f0f0"></div>
<div class="a" style="left:1303px;top:486px;width:1px;height:23px;background:#f0f0f0"></div>
<div class="a" style="left:1337px;top:486px;width:1px;height:23px;background:#f0f0f0"></div>
<svg class="a" style="left:1124px;top:486px" width="9" height="6"><path d="M1 5L4.5 1.5L8 5" fill="none" stroke="#555" stroke-width="0.9"/></svg>
<div class="t" style="left:1124px;top:494px;font-size:11px">C</div>
<div class="t" style="left:1145px;top:494px;font-size:11px">V</div>
<div class="t" style="left:1165px;top:494px;font-size:11px">Name</div>
<div class="t" style="left:1245px;top:494px;font-size:11px">Value</div>
<div class="t" style="left:1310px;top:494px;font-size:11px">Unit</div>
<div class="a" style="left:1340px;top:510px;width:18px;height:186px;background:#f0f0f0"></div>
<div class="a" style="left:1341px;top:648px;width:14px;height:26px;background:#cdcdcd"></div>
<svg class="a" style="left:1343px;top:516px" width="10" height="7"><path d="M1 6L5 2L9 6" fill="none" stroke="#555" stroke-width="1.6"/></svg>
<svg class="a" style="left:1343px;top:683px" width="10" height="7"><path d="M1 1L5 5L9 1" fill="none" stroke="#555" stroke-width="1.6"/></svg>
<svg class="a" style="left:0;top:0" width="1365" height="711">
<defs><clipPath id="c1"><rect x="287.5" y="156.5" width="817.0" height="201.0"/></clipPath></defs>
<rect x="287.5" y="156.5" width="817.0" height="201.0" fill="#fff"/>
<g clip-path="url(#c1)"><path d="M288 338.2 289 342.9 290 341.2 292 338.4 294 334.5 295 330.6 296 327.9 298 324.8 300 322.2 301 318.5 302 316.5 304 314.0 306 311.2 307 308.4 308 305.7 310 302.7 312 299.9 313 297.7 314 295.1 316 293.4 318 291.3 319 289.0 320 287.6 322 286.3 324 284.7 325 283.1 326 281.4 328 280.9 330 279.8 331 278.3 332 277.9 334 276.6 336 275.0 337 274.0 338 273.1 340 271.8 342 272.1 343 269.7 344 269.6 346 269.2 348 267.6 349 266.7 350 266.5 352 266.1 354 265.0 355 264.3 356 263.0 358 262.6 360 262.2 361 261.1 362 261.2 364 261.0 366 259.8 367 259.3 368 259.2 370 259.0 372 258.1 373 259.0 374 257.0 376 256.7 378 257.4 379 256.1 380 256.3 382 254.9 384 256.1 385 255.1 386 253.7 388 253.1 390 254.6 391 253.2 392 252.3 394 252.4 396 250.7 397 252.0 398 250.6 400 251.0 402 249.2 403 249.6 404 249.4 406 249.8 408 247.4 409 247.5 410 247.1 412 246.5 414 246.6 415 246.8 416 246.5 418 246.2 420 244.6 421 245.9 422 245.0 424 244.6 426 243.9 427 243.4 428 244.2 430 244.2 432 243.0 433 242.0 434 242.1 436 242.1 438 242.2 439 241.6 440 241.7 442 240.9 444 241.6 445 240.8 446 240.8 448 240.2 450 240.2 451 238.6 452 239.0 454 238.8 456 240.7 457 239.5 458 239.5 460 238.7 462 240.1 463 238.0 464 237.8 466 239.1 468 238.7 469 238.4 470 237.8 472 237.3 474 236.3 475 237.5 476 236.8 478 237.0 480 235.9 481 236.4 482 235.8 484 237.1 486 236.5 487 236.7 488 235.2 490 235.6 492 236.0 493 236.0 494 235.3 496 235.9 498 235.9 499 235.0 500 233.7 502 235.2 504 235.3 505 235.6 506 235.5 508 234.4 510 234.1 511 234.5 512 234.2 514 234.2 516 234.1 517 235.0 518 234.3 520 233.8 522 234.3 523 234.0 524 234.1 526 233.7 528 232.9 529 233.6 530 233.4 532 232.7 534 232.7 535 232.0 536 234.1 538 232.3 540 233.0 541 232.5 542 232.0 544 231.8 546 231.7 547 232.1 548 231.2 550 232.2 552 232.0 553 231.3 554 232.0 556 230.4 558 230.9 559 230.1 560 231.3 562 231.4 564 231.0 565 230.6 566 231.3 568 230.6 570 230.7 571 229.7 572 230.9 574 229.8 576 230.7 577 230.8 578 230.5 580 230.7 582 229.8 583 229.1 584 229.5 586 229.1 588 228.4 589 229.0 590 228.9 592 229.1 594 229.7 595 228.1 596 229.5 598 227.9 600 228.1 601 227.3 602 227.8 604 228.0 606 227.2 607 227.5 608 227.1 610 226.8 612 226.7 613 226.6 614 226.7 616 226.2 618 227.1 619 225.8 620 226.2 622 224.6 624 224.4 625 226.1 626 224.6 628 224.6 630 225.0 631 223.9 632 224.3 634 224.9 636 223.8 637 223.6 638 223.2 640 223.8 642 222.6 643 222.3 644 223.3 646 222.8 648 222.3 649 222.4 650 220.9 652 221.6 654 222.1 655 221.8 656 221.2 658 219.7 660 221.0 661 220.6 662 220.2 664 220.4 666 218.8 667 220.3 668 219.4 670 219.5 672 219.1 673 220.0 674 218.1 676 219.0 678 218.8 679 219.2 680 218.9 682 218.0 684 217.6 685 217.5 686 217.1 688 217.2 690 217.5 691 216.8 692 216.8 694 217.1 696 216.4 697 215.9 698 216.4 700 216.6 702 215.8 703 214.9 704 216.1 706 215.9 708 215.8 709 214.7 710 216.6 712 215.0 714 214.3 715 215.5 716 213.8 718 214.3 720 214.9 721 214.3 722 215.3 724 214.5 726 212.7 727 214.5 728 212.4 730 213.6 732 212.7 733 213.3 734 214.8 736 213.5 738 212.8 739 213.6 740 213.7 742 212.2 744 212.9 745 213.5 746 212.6 748 211.3 750 212.2 751 211.0 752 210.4 754 211.5 756 212.3 757 212.3 758 211.1 760 210.3 762 210.7 763 210.3 764 211.0 766 210.3 768 210.8 769 210.5 770 211.2 772 211.3 774 210.3 775 210.7 776 210.5 778 209.0 780 209.5 781 206.8 782 208.4 784 209.6 786 208.3 787 208.5 788 209.3 790 207.6 792 209.2 793 211.1 794 207.5 796 208.7 798 206.7 799 208.5 800 208.9 802 206.2 804 208.6 805 207.3 806 206.0 808 207.1 810 207.2 811 206.9 812 206.0 814 207.5 815 206.0 817 205.9 818 204.1 820 206.6 822 207.1 823 205.3 824 206.3 826 205.5 828 205.6 829 204.4 830 206.1 832 205.4 833 207.8 835 206.0 836 203.4 838 205.6 840 205.5 841 206.0 842 204.0 844 204.3 846 205.6 847 203.6 848 203.9 850 203.3 851 204.7 853 202.0 854 203.3 856 203.8 858 204.2 859 203.8 860 202.5 862 203.6 864 202.0 865 202.5 866 201.6 868 202.1 869 203.0 871 205.0 872 202.4 874 201.8 876 202.4 877 201.9 878 203.0 880 202.8 881 203.4 883 200.7 884 202.0 886 202.7 888 203.6 889 202.2 890 200.3 892 201.4 894 202.7 895 200.1 896 200.1 898 200.5 899 200.7 901 200.2 902 200.9 904 200.6 906 202.3 907 199.6 908 201.0 910 198.9 912 203.6 913 200.3 914 200.0 916 201.5 917 200.5 919 200.1 920 200.2 922 201.5 924 201.0 925 199.6 926 199.2 928 200.6 930 200.6 931 200.4 932 199.3 934 201.7 935 202.0 937 200.3 938 201.7 940 201.0 942 200.2 943 199.7 944 201.5 946 199.2 947 202.2 949 199.5 950 201.9 952 201.5 953 199.2 955 200.4 956 200.9 958 200.4 960 199.3 961 199.9 962 199.8 964 198.5 965 200.5 967 200.2 968 200.2 970 198.2 972 198.4 973 198.0 974 199.5 976 199.6 978 198.4 979 199.9 980 198.4 982 198.5 983 200.1 985 199.4 986 199.4 988 197.2 990 196.1 991 199.2 992 199.1 994 201.7 996 198.8 997 199.0 998 200.2 1000 198.0 1001 200.7 1003 199.1 1004 198.7 1006 200.3 1008 197.8 1009 197.5 1010 200.4 1012 200.4 1014 198.0 1015 198.7 1016 200.0 1018 199.0 1019 198.7 1021 198.7 1022 197.6 1024 198.0 1026 196.4 1027 196.8 1028 197.6 1030 197.1 1032 196.8 1033 197.5 1034 199.8 1036 197.3 1038 198.2 1039 196.4 1040 198.1 1042 197.6 1044 197.8 1045 196.2 1046 197.9 1048 198.4 1050 197.7 1051 198.6 1052 197.8 1054 198.0 1056 197.7 1057 194.9 1058 196.7 1060 195.3 1062 194.7 1063 192.8 1064 194.0 1066 192.5 1068 190.9 1069 189.3 1070 189.1 1072 189.5 1074 189.9 1075 188.3 1076 187.2 1078 188.5 1080 188.6 1081 188.3 1082 189.9 1084 189.1 1086 189.0 1087 188.3 1088 188.7 1090 190.1" fill="none" stroke="#ffc000" stroke-width="1.0" stroke-linejoin="round"/><path d="M288 337.9 289 341.6 290 340.7 292 337.5 294 333.5 295 329.4 296 326.8 298 323.2 300 320.8 301 317.7 302 315.2 304 312.5 306 309.6 307 306.5 308 304.0 310 301.1 312 298.5 313 296.4 314 293.4 316 291.5 318 289.6 319 287.4 320 286.3 322 284.4 324 282.3 325 281.2 326 281.0 328 280.2 330 278.4 331 276.6 332 276.0 334 274.8 336 273.4 337 272.8 338 271.2 340 269.9 342 269.1 343 268.1 344 267.7 346 266.5 348 266.1 349 264.7 350 263.4 352 264.1 354 264.1 355 262.6 356 261.6 358 260.6 360 259.9 361 260.1 362 259.6 364 258.1 366 258.7 367 257.1 368 257.3 370 256.4 372 255.9 373 255.5 374 255.0 376 255.6 378 254.5 379 254.2 380 253.7 382 252.8 384 253.2 385 253.0 386 252.7 388 252.0 390 251.0 391 251.5 392 250.0 394 250.1 396 249.9 397 250.2 398 248.8 400 248.2 402 249.2 403 247.1 404 246.4 406 246.8 408 246.3 409 244.7 410 245.1 412 245.9 414 245.0 415 244.7 416 244.4 418 245.3 420 243.2 421 243.6 422 242.9 424 242.7 426 241.8 427 242.2 428 242.2 430 241.2 432 240.5 433 241.2 434 240.0 436 240.4 438 240.6 439 239.2 440 240.4 442 239.1 444 239.8 445 239.0 446 239.8 448 239.3 450 238.0 451 238.3 452 238.2 454 238.3 456 237.6 457 238.5 458 238.2 460 237.5 462 237.7 463 237.4 464 236.9 466 236.8 468 236.7 469 235.4 470 235.6 472 235.3 474 235.9 475 236.1 476 236.5 478 235.7 480 236.6 481 235.5 482 234.6 484 234.0 486 234.2 487 235.2 488 234.3 490 234.9 492 233.8 493 234.2 494 233.6 496 232.5 498 233.3 499 232.4 500 233.5 502 233.7 504 232.6 505 232.3 506 233.5 508 233.1 510 233.9 511 233.0 512 232.3 514 232.8 516 233.0 517 233.4 518 232.2 520 231.9 522 231.9 523 232.0 524 232.8 526 231.0 528 231.9 529 231.9 530 231.3 532 232.9 534 231.6 535 231.5 536 231.2 538 230.5 540 230.9 541 232.2 542 231.2 544 230.8 546 230.7 547 231.4 548 231.6 550 230.2 552 230.2 553 230.3 554 231.2 556 229.1 558 231.7 559 230.1 560 228.6 562 229.8 564 229.5 565 230.2 566 228.6 568 230.1 570 229.0 571 229.0 572 229.6 574 228.4 576 229.6 577 229.1 578 228.6 580 228.7 582 228.0 583 227.7 584 228.2 586 228.3 588 228.1 589 227.9 590 227.0 592 227.5 594 227.0 595 227.1 596 227.4 598 226.2 600 227.2 601 226.4 602 225.3 604 226.7 606 225.9 607 226.6 608 225.8 610 226.2 612 225.3 613 225.2 614 224.7 616 223.6 618 224.2 619 223.8 620 224.0 622 223.9 624 224.1 625 224.5 626 223.2 628 222.1 630 222.6 631 223.0 632 221.6 634 222.6 636 222.5 637 222.7 638 222.4 640 221.8 642 220.3 643 221.4 644 221.8 646 221.3 648 220.9 649 221.6 650 220.4 652 219.9 654 219.9 655 219.6 656 220.5 658 220.6 660 218.7 661 218.6 662 220.0 664 218.8 666 218.7 667 218.3 668 218.3 670 218.5 672 218.0 673 217.8 674 217.8 676 218.7 678 219.2 679 217.7 680 218.1 682 216.8 684 216.4 685 216.5 686 216.7 688 216.3 690 215.4 691 216.4 692 215.3 694 215.2 696 215.4 697 214.5 698 215.7 700 214.5 702 215.5 703 215.3 704 215.3 706 214.2 708 215.0 709 214.2 710 214.8 712 213.2 714 212.6 715 213.5 716 212.4 718 213.0 720 211.7 721 213.0 722 214.0 724 211.8 726 212.8 727 213.3 728 212.9 730 213.5 732 212.3 733 212.8 734 210.8 736 211.3 738 212.9 739 212.6 740 211.8 742 212.7 744 211.2 745 211.0 746 211.5 748 211.2 750 210.2 751 209.4 752 209.2 754 210.2 756 209.4 757 210.6 758 209.5 760 210.5 762 209.0 763 210.5 764 210.2 766 209.3 768 208.7 769 210.2 770 209.4 772 208.7 774 208.5 775 209.3 776 208.4 778 208.6 780 207.0 781 207.6 782 209.2 784 209.8 786 207.7 787 206.6 788 207.4 790 206.6 792 207.7 793 208.4 794 206.4 796 206.9 798 206.2 799 208.0 800 206.5 802 207.1 804 205.6 805 206.8 806 206.7 808 206.6 810 204.7 811 205.8 812 206.4 814 206.6 815 206.5 817 203.9 818 207.0 820 205.9 822 204.4 823 203.7 824 204.9 826 203.9 828 203.8 829 203.4 830 204.3 832 202.5 833 203.9 835 202.4 836 205.0 838 202.8 840 205.0 841 205.1 842 202.9 844 204.2 846 202.8 847 204.3 848 201.3 850 202.9 851 204.0 853 202.5 854 201.7 856 203.4 858 201.9 859 200.1 860 201.3 862 202.2 864 202.7 865 201.4 866 203.6 868 205.2 869 202.5 871 202.9 872 199.6 874 201.4 876 202.6 877 202.7 878 200.7 880 202.2 881 201.8 883 201.2 884 200.9 886 200.9 888 200.8 889 199.3 890 198.8 892 202.7 894 197.7 895 200.5 896 199.1 898 201.4 899 200.1 901 200.2 902 200.2 904 199.3 906 199.5 907 201.4 908 200.3 910 199.3 912 199.3 913 200.4 914 200.3 916 200.1 917 201.2 919 201.3 920 197.9 922 200.2 924 199.6 925 200.5 926 198.1 928 197.5 930 199.8 931 198.9 932 200.3 934 197.3 935 198.3 937 200.3 938 197.8 940 198.8 942 198.7 943 198.7 944 199.9 946 199.7 947 198.3 949 199.1 950 200.1 952 196.6 953 199.1 955 199.5 956 199.6 958 198.0 960 197.6 961 198.4 962 197.7 964 200.4 965 199.1 967 199.1 968 198.5 970 197.9 972 200.9 973 194.8 974 199.4 976 198.0 978 197.4 979 197.3 980 198.0 982 201.7 983 199.5 985 197.3 986 199.2 988 199.4 990 200.9 991 196.7 992 197.5 994 199.1 996 198.2 997 198.1 998 199.3 1000 198.2 1001 197.6 1003 197.2 1004 196.4 1006 197.8 1008 198.3 1009 197.3 1010 198.5 1012 199.2 1014 196.4 1015 198.1 1016 197.5 1018 196.9 1019 198.9 1021 196.8 1022 197.0 1024 197.6 1026 197.0 1027 198.3 1028 200.0 1030 197.7 1032 198.5 1033 196.4 1034 197.0 1036 197.9 1038 197.2 1039 195.7 1040 195.9 1042 196.8 1044 196.7 1045 197.5 1046 197.3 1048 196.4 1050 197.2 1051 196.7 1052 198.4 1054 198.6 1056 197.9 1057 195.8 1058 193.0 1060 192.4 1062 194.3 1063 194.2 1064 190.8 1066 190.5 1068 191.9 1069 188.8 1070 189.8 1072 188.4 1074 189.5 1075 188.9 1076 189.5 1078 191.0 1080 190.1 1081 190.6 1082 188.8 1084 190.9 1086 191.5 1087 188.9 1088 188.3 1090 188.0" fill="none" stroke="#ffa000" stroke-width="1.0" stroke-linejoin="round"/><path d="M288 337.1 289 341.2 290 339.7 292 336.4 294 332.1 295 328.4 296 324.7 298 321.5 300 318.8 301 315.6 302 312.5 304 309.9 306 306.7 307 303.8 308 301.0 310 298.1 312 295.7 313 292.7 314 291.0 316 288.9 318 286.5 319 285.1 320 283.0 322 281.1 324 279.9 325 278.6 326 277.1 328 275.9 330 275.6 331 274.5 332 272.4 334 271.6 336 271.4 337 269.9 338 268.3 340 267.5 342 265.9 343 265.1 344 264.0 346 263.8 348 262.3 349 261.0 350 261.4 352 259.8 354 259.2 355 258.6 356 258.2 358 257.9 360 257.1 361 255.7 362 255.0 364 254.3 366 253.8 367 253.3 368 253.5 370 253.3 372 252.1 373 251.5 374 251.3 376 251.6 378 250.7 379 250.7 380 249.4 382 249.6 384 248.7 385 248.0 386 247.7 388 246.6 390 247.5 391 247.7 392 245.5 394 244.8 396 244.3 397 244.6 398 244.0 400 243.8 402 244.2 403 243.3 404 242.3 406 242.5 408 240.6 409 242.2 410 241.1 412 239.8 414 240.4 415 240.4 416 240.1 418 239.4 420 237.7 421 238.0 422 237.6 424 237.9 426 236.7 427 236.9 428 237.2 430 236.6 432 236.0 433 235.1 434 235.6 436 235.0 438 233.8 439 235.2 440 235.3 442 233.7 444 233.8 445 233.9 446 233.4 448 233.5 450 232.8 451 233.1 452 232.2 454 233.2 456 232.7 457 232.0 458 232.1 460 231.2 462 231.5 463 231.6 464 230.9 466 231.2 468 231.6 469 231.1 470 230.8 472 230.4 474 229.9 475 229.2 476 229.3 478 228.4 480 228.5 481 229.2 482 227.9 484 228.0 486 228.8 487 228.2 488 227.6 490 227.9 492 227.3 493 227.5 494 227.2 496 227.6 498 227.1 499 227.4 500 226.6 502 227.9 504 226.5 505 225.9 506 226.1 508 226.3 510 225.9 511 226.5 512 226.4 514 226.0 516 225.7 517 224.9 518 225.9 520 224.7 522 226.0 523 225.4 524 224.9 526 224.0 528 224.9 529 225.7 530 224.1 532 224.2 534 224.7 535 224.5 536 224.2 538 223.6 540 223.1 541 224.2 542 221.9 544 223.1 546 223.1 547 222.4 548 222.6 550 221.1 552 221.7 553 222.4 554 222.3 556 222.2 558 221.9 559 221.2 560 221.8 562 220.3 564 221.2 565 221.0 566 220.2 568 221.8 570 221.0 571 220.0 572 220.2 574 220.0 576 219.6 577 220.0 578 219.6 580 220.1 582 220.2 583 218.2 584 219.3 586 219.0 588 217.6 589 217.6 590 218.3 592 218.1 594 217.7 595 218.0 596 216.9 598 216.9 600 216.7 601 216.1 602 215.9 604 215.0 606 215.0 607 216.6 608 214.8 610 215.8 612 215.7 613 214.3 614 214.8 616 214.4 618 213.3 619 214.1 620 214.0 622 213.1 624 212.3 625 212.5 626 213.5 628 212.7 630 212.2 631 210.8 632 211.1 634 211.0 636 210.5 637 211.2 638 210.5 640 210.3 642 211.0 643 210.2 644 209.6 646 210.4 648 209.1 649 208.9 650 208.5 652 209.4 654 208.6 655 207.6 656 207.8 658 208.5 660 207.7 661 206.8 662 207.5 664 207.0 666 205.5 667 206.8 668 206.7 670 207.0 672 206.6 673 205.1 674 205.9 676 206.3 678 206.0 679 205.2 680 204.6 682 205.3 684 204.2 685 204.8 686 204.1 688 203.8 690 203.6 691 204.0 692 203.7 694 203.1 696 204.1 697 203.0 698 202.6 700 202.1 702 202.7 703 202.6 704 202.3 706 202.7 708 202.2 709 201.7 710 201.6 712 202.3 714 201.7 715 202.8 716 200.7 718 201.4 720 200.8 721 201.6 722 200.7 724 200.2 726 199.7 727 201.2 728 199.5 730 200.1 732 200.4 733 199.4 734 199.8 736 199.7 738 199.9 739 199.1 740 199.1 742 199.1 744 199.6 745 199.1 746 198.3 748 197.5 750 198.4 751 197.1 752 198.1 754 198.9 756 197.4 757 198.5 758 197.3 760 196.7 762 197.6 763 197.4 764 195.1 766 196.9 768 196.7 769 196.2 770 196.8 772 196.7 774 196.1 775 198.4 776 195.0 778 197.0 780 196.9 781 195.4 782 195.8 784 196.8 786 195.4 787 196.4 788 195.9 790 196.5 792 195.8 793 194.6 794 194.7 796 194.5 798 193.8 799 194.5 800 195.0 802 194.5 804 192.6 805 194.0 806 193.6 808 193.9 810 193.4 811 193.1 812 193.4 814 193.5 815 193.9 817 193.9 818 192.6 820 192.1 822 191.8 823 192.6 824 193.3 826 191.7 828 191.6 829 193.7 830 191.2 832 191.3 833 190.1 835 192.8 836 192.9 838 190.7 840 193.2 841 192.0 842 192.3 844 192.1 846 193.0 847 191.1 848 189.7 850 190.2 851 190.1 853 190.8 854 188.8 856 189.7 858 189.0 859 191.8 860 189.6 862 191.1 864 189.4 865 189.5 866 190.9 868 189.3 869 188.2 871 188.8 872 188.6 874 190.2 876 189.9 877 190.4 878 188.9 880 187.6 881 188.4 883 188.8 884 190.1 886 188.2 888 189.0 889 190.9 890 190.6 892 189.0 894 189.6 895 186.6 896 188.4 898 189.6 899 189.0 901 186.7 902 189.8 904 188.0 906 188.5 907 187.5 908 188.7 910 189.9 912 189.0 913 189.7 914 188.8 916 190.1 917 187.9 919 190.4 920 190.0 922 191.4 924 190.6 925 190.9 926 190.9 928 190.2 930 192.0 931 192.5 932 190.4 934 192.1 935 192.7 937 190.8 938 191.3 940 195.5 942 193.0 943 191.8 944 191.9 946 193.6 947 191.3 949 194.2 950 193.7 952 193.5 953 193.8 955 193.0 956 192.9 958 194.3 960 192.7 961 195.3 962 194.9 964 192.8 965 194.9 967 193.9 968 195.8 970 195.7 972 195.7 973 195.5 974 196.3 976 196.0 978 195.4 979 195.0 980 196.4 982 195.9 983 195.8 985 198.2 986 199.0 988 195.4 990 195.9 991 197.5 992 197.4 994 199.0 996 199.7 997 197.9 998 200.1 1000 197.3 1001 199.2 1003 198.0 1004 196.1 1006 196.1 1008 198.6 1009 197.1 1010 199.5 1012 199.0 1014 197.8 1015 196.6 1016 198.9 1018 197.6 1019 198.1 1021 199.7 1022 198.3 1024 196.4 1026 198.3 1027 197.6 1028 197.2 1030 199.0 1032 196.7 1033 196.4 1034 196.2 1036 196.6 1038 198.6 1039 198.8 1040 199.0 1042 199.1 1044 199.0 1045 196.9 1046 196.3 1048 198.8 1050 197.1 1051 199.5 1052 198.4 1054 199.2 1056 199.9 1057 197.9 1058 197.9 1060 198.4 1062 198.6 1063 199.1 1064 198.1 1066 198.6 1068 197.6 1069 199.3 1070 197.6 1072 197.3 1074 196.4 1075 196.7 1076 197.6 1078 198.7 1080 200.0 1081 197.9 1082 196.2 1084 195.9 1086 200.8 1087 198.7 1088 198.2 1090 199.0" fill="none" stroke="#80ff00" stroke-width="1.0" stroke-linejoin="round"/><path d="M288 336.3 289 339.8 290 338.5 292 335.0 294 330.8 295 326.3 296 322.8 298 319.2 300 316.6 301 313.2 302 309.9 304 307.1 306 303.9 307 301.2 308 297.9 310 294.9 312 291.8 313 289.7 314 287.3 316 285.5 318 283.5 319 281.1 320 279.6 322 277.7 324 276.5 325 274.6 326 273.3 328 273.2 330 271.2 331 270.6 332 269.5 334 268.5 336 267.0 337 266.5 338 265.2 340 264.0 342 262.5 343 261.3 344 260.4 346 259.7 348 259.3 349 259.0 350 257.4 352 256.7 354 255.9 355 254.7 356 254.6 358 253.9 360 254.1 361 252.1 362 251.8 364 251.5 366 250.4 367 250.6 368 249.8 370 248.0 372 248.1 373 247.5 374 247.1 376 246.7 378 246.5 379 244.9 380 245.7 382 244.8 384 244.9 385 244.6 386 245.3 388 244.6 390 242.2 391 241.8 392 242.5 394 241.8 396 241.0 397 241.5 398 239.4 400 240.6 402 240.0 403 240.8 404 237.9 406 238.3 408 237.0 409 238.1 410 236.9 412 236.7 414 236.2 415 234.8 416 234.3 418 234.4 420 235.1 421 234.0 422 233.4 424 233.5 426 233.2 427 233.0 428 233.5 430 232.5 432 231.5 433 232.7 434 231.8 436 231.1 438 232.1 439 231.2 440 231.8 442 231.0 444 231.2 445 230.7 446 230.2 448 229.8 450 229.6 451 230.7 452 228.1 454 229.0 456 229.2 457 228.8 458 228.0 460 228.6 462 228.0 463 227.9 464 227.1 466 227.7 468 226.8 469 226.6 470 226.7 472 225.7 474 226.3 475 226.8 476 225.8 478 225.7 480 225.6 481 225.3 482 223.9 484 224.9 486 224.6 487 224.9 488 223.8 490 224.4 492 224.7 493 224.8 494 223.6 496 223.3 498 224.5 499 223.9 500 222.9 502 222.6 504 223.8 505 223.1 506 222.2 508 222.9 510 222.7 511 222.6 512 222.9 514 222.0 516 221.7 517 222.6 518 221.5 520 220.8 522 221.2 523 220.6 524 221.4 526 220.1 528 221.2 529 219.5 530 220.7 532 220.8 534 220.7 535 220.3 536 220.2 538 220.2 540 219.8 541 219.1 542 218.8 544 219.4 546 218.3 547 219.5 548 219.3 550 219.2 552 218.0 553 219.1 554 218.9 556 217.2 558 216.7 559 216.8 560 218.3 562 217.3 564 216.6 565 216.9 566 217.7 568 216.8 570 217.4 571 217.0 572 214.8 574 215.5 576 216.6 577 216.4 578 215.1 580 215.5 582 214.6 583 215.2 584 214.7 586 214.3 588 214.8 589 215.1 590 214.5 592 214.0 594 213.5 595 213.2 596 213.0 598 212.4 600 213.0 601 211.4 602 210.8 604 211.6 606 211.4 607 210.6 608 210.7 610 210.7 612 210.7 613 210.8 614 210.8 616 209.4 618 208.9 619 210.0 620 209.2 622 208.7 624 208.9 625 208.8 626 208.4 628 209.1 630 207.7 631 207.6 632 206.0 634 206.5 636 207.0 637 206.6 638 205.4 640 205.2 642 205.9 643 205.8 644 206.4 646 205.5 648 205.2 649 205.3 650 203.7 652 205.6 654 204.3 655 203.8 656 203.6 658 202.6 660 204.2 661 203.6 662 202.9 664 202.7 666 202.8 667 202.8 668 201.5 670 202.6 672 202.1 673 200.7 674 200.3 676 200.6 678 201.5 679 201.3 680 201.1 682 201.0 684 200.4 685 199.3 686 199.6 688 200.0 690 199.8 691 199.8 692 198.1 694 199.8 696 198.2 697 199.1 698 198.6 700 198.7 702 196.9 703 197.4 704 195.4 706 197.6 708 197.4 709 196.1 710 196.0 712 196.3 714 197.3 715 194.8 716 195.2 718 195.1 720 195.6 721 194.5 722 195.2 724 194.6 726 194.6 727 193.4 728 194.4 730 194.1 732 192.9 733 193.4 734 193.4 736 193.3 738 192.3 739 193.3 740 192.3 742 190.9 744 192.0 745 192.7 746 192.9 748 191.7 750 192.6 751 192.7 752 191.9 754 192.0 756 190.3 757 191.9 758 189.4 760 191.1 762 190.2 763 189.6 764 189.8 766 189.2 768 190.5 769 191.4 770 189.5 772 190.6 774 189.5 775 188.1 776 188.9 778 189.0 780 189.4 781 188.5 782 188.2 784 189.3 786 187.5 787 188.5 788 187.2 790 187.7 792 186.2 793 186.2 794 186.8 796 186.7 798 186.1 799 185.0 800 185.2 802 185.8 804 185.5 805 184.2 806 187.0 808 184.8 810 186.0 811 183.7 812 185.3 814 184.8 815 185.5 817 184.3 818 183.4 820 182.4 822 185.1 823 184.1 824 179.6 826 182.4 828 183.2 829 182.5 830 185.6 832 181.1 833 182.4 835 183.9 836 181.1 838 182.8 840 183.0 841 181.3 842 181.2 844 182.0 846 181.5 847 182.7 848 182.6 850 180.0 851 179.4 853 180.2 854 180.1 856 180.8 858 180.4 859 181.2 860 178.1 862 180.5 864 179.3 865 179.6 866 181.1 868 177.2 869 179.7 871 180.0 872 178.9 874 180.0 876 178.8 877 179.8 878 178.0 880 178.4 881 180.0 883 177.1 884 178.0 886 179.5 888 177.8 889 177.7 890 176.0 892 179.1 894 177.1 895 178.2 896 177.4 898 178.4 899 178.1 901 177.4 902 179.4 904 180.4 906 178.0 907 178.5 908 177.8 910 177.2 912 178.1 913 176.5 914 177.9 916 177.7 917 176.8 919 177.1 920 177.9 922 177.6 924 178.6 925 178.5 926 177.6 928 176.7 930 178.2 931 176.7 932 175.4 934 175.1 935 177.6 937 176.4 938 176.9 940 176.7 942 176.6 943 176.9 944 176.6 946 177.3 947 177.8 949 177.2 950 176.9 952 176.0 953 177.0 955 176.6 956 175.7 958 178.5 960 177.7 961 176.7 962 177.3 964 178.5 965 176.2 967 177.4 968 178.5 970 175.1 972 178.8 973 177.3 974 178.1 976 177.1 978 176.6 979 178.2 980 177.4 982 177.4 983 178.4 985 175.8 986 177.0 988 177.5 990 178.0 991 177.6 992 177.0 994 177.7 996 175.7 997 180.1 998 179.6 1000 177.4 1001 179.3 1003 177.2 1004 177.9 1006 176.4 1008 176.6 1009 175.6 1010 176.0 1012 175.6 1014 176.5 1015 175.8 1016 176.5 1018 177.8 1019 178.6 1021 178.5 1022 176.5 1024 179.9 1026 176.9 1027 178.0 1028 176.2 1030 176.9 1032 178.0 1033 177.1 1034 179.8 1036 176.8 1038 176.6 1039 179.3 1040 176.1 1042 177.3 1044 176.9 1045 178.8 1046 176.4 1048 176.4 1050 177.1 1051 178.3 1052 176.2 1054 175.7 1056 176.7 1057 176.0 1058 177.8 1060 177.0 1062 176.7 1063 177.0 1064 173.8 1066 176.7 1068 177.8 1069 176.2 1070 178.4 1072 176.7 1074 176.3 1075 177.7 1076 177.5 1078 178.3 1080 177.0 1081 177.9 1082 175.1 1084 176.4 1086 177.4 1087 178.8 1088 174.8 1090 175.6" fill="none" stroke="#a0ff10" stroke-width="1.0" stroke-linejoin="round"/><path d="M288 335.1 289 338.3 290 336.8 292 333.3 294 328.1 295 323.8 296 320.4 298 316.8 300 313.8 301 309.7 302 306.5 304 303.1 306 299.8 307 297.4 308 294.0 310 290.9 312 288.2 313 286.0 314 283.4 316 281.3 318 279.0 319 277.5 320 275.7 322 274.2 324 272.6 325 271.4 326 270.0 328 268.6 330 267.5 331 266.1 332 265.1 334 264.1 336 263.5 337 261.7 338 260.2 340 260.0 342 258.8 343 257.8 344 256.9 346 255.8 348 255.3 349 254.0 350 254.0 352 252.8 354 252.3 355 251.8 356 250.1 358 249.9 360 249.0 361 248.7 362 247.6 364 247.1 366 247.0 367 247.2 368 245.5 370 245.1 372 244.8 373 244.4 374 244.0 376 243.5 378 243.7 379 242.8 380 242.2 382 242.3 384 242.1 385 240.2 386 240.5 388 240.6 390 240.3 391 241.2 392 240.1 394 239.0 396 237.8 397 239.3 398 238.2 400 236.3 402 236.6 403 236.4 404 235.6 406 236.0 408 235.7 409 234.8 410 234.4 412 235.2 414 233.3 415 234.9 416 234.0 418 231.4 420 233.2 421 232.3 422 233.0 424 232.3 426 232.2 427 231.8 428 230.9 430 230.1 432 230.4 433 229.7 434 230.7 436 229.4 438 229.7 439 229.0 440 229.9 442 229.6 444 228.5 445 228.7 446 228.8 448 229.1 450 228.6 451 228.1 452 227.8 454 228.4 456 228.1 457 227.5 458 228.2 460 226.9 462 227.3 463 227.2 464 228.4 466 227.8 468 227.3 469 226.9 470 227.1 472 226.1 474 226.1 475 226.2 476 227.1 478 225.0 480 225.8 481 225.2 482 225.8 484 225.3 486 224.8 487 224.9 488 224.4 490 224.9 492 223.6 493 225.7 494 224.8 496 223.8 498 224.5 499 224.5 500 225.1 502 223.3 504 225.0 505 223.5 506 223.6 508 223.1 510 222.7 511 223.9 512 223.8 514 223.5 516 224.2 517 222.6 518 223.3 520 222.8 522 223.5 523 222.8 524 223.0 526 222.6 528 223.1 529 221.8 530 222.7 532 223.7 534 221.8 535 222.3 536 222.5 538 220.4 540 221.8 541 222.5 542 222.0 544 221.3 546 221.6 547 220.6 548 220.6 550 221.6 552 221.0 553 220.6 554 221.1 556 221.0 558 220.1 559 220.3 560 221.2 562 220.6 564 220.4 565 220.2 566 220.4 568 219.1 570 220.3 571 220.3 572 219.4 574 220.8 576 219.9 577 218.8 578 219.9 580 219.5 582 218.2 583 218.5 584 218.6 586 218.3 588 218.7 589 218.0 590 218.2 592 216.4 594 217.4 595 217.8 596 217.5 598 217.2 600 217.9 601 217.4 602 215.9 604 217.4 606 216.8 607 215.6 608 215.2 610 216.5 612 214.9 613 215.7 614 214.4 616 214.9 618 215.2 619 214.4 620 214.3 622 214.9 624 213.0 625 214.3 626 213.3 628 214.0 630 214.7 631 214.1 632 213.3 634 212.7 636 211.9 637 212.8 638 212.8 640 213.2 642 212.4 643 212.0 644 213.3 646 211.1 648 211.1 649 210.3 650 212.0 652 211.3 654 211.1 655 211.7 656 211.3 658 211.2 660 210.2 661 210.1 662 209.4 664 210.3 666 210.7 667 209.5 668 209.4 670 209.1 672 208.6 673 209.5 674 208.6 676 209.5 678 208.7 679 208.2 680 208.6 682 208.2 684 209.0 685 208.5 686 207.8 688 208.4 690 208.0 691 205.8 692 206.9 694 207.4 696 207.3 697 205.6 698 208.1 700 206.3 702 205.6 703 206.1 704 205.3 706 206.1 708 205.3 709 205.0 710 204.9 712 204.6 714 204.5 715 203.6 716 204.4 718 204.4 720 204.1 721 203.9 722 204.6 724 204.7 726 204.1 727 202.8 728 203.3 730 203.0 732 200.5 733 201.6 734 202.4 736 202.5 738 200.9 739 202.3 740 200.7 742 201.0 744 200.2 745 201.7 746 200.3 748 202.2 750 200.8 751 199.7 752 199.8 754 201.6 756 199.5 757 199.5 758 199.8 760 200.2 762 199.7 763 199.8 764 198.4 766 198.6 768 198.0 769 198.1 770 199.6 772 198.3 774 196.5 775 199.1 776 197.8 778 198.5 780 198.5 781 197.4 782 196.6 784 196.6 786 196.7 787 196.2 788 198.3 790 196.0 792 196.2 793 196.6 794 196.3 796 196.9 798 194.9 799 196.5 800 197.1 802 195.6 804 196.0 805 195.3 806 193.7 808 195.1 810 194.7 811 192.5 812 195.9 814 194.0 815 193.1 817 192.6 818 191.8 820 194.5 822 193.1 823 193.6 824 193.8 826 194.0 828 194.6 829 192.6 830 192.1 832 193.8 833 191.8 835 193.0 836 193.3 838 194.9 840 190.9 841 191.1 842 192.1 844 192.0 846 192.9 847 190.8 848 191.3 850 190.5 851 190.8 853 192.4 854 192.4 856 190.2 858 192.4 859 190.1 860 189.3 862 191.6 864 189.3 865 189.9 866 189.2 868 190.4 869 189.6 871 189.0 872 187.3 874 188.4 876 188.6 877 190.6 878 188.6 880 189.7 881 188.9 883 188.4 884 187.5 886 187.9 888 188.3 889 188.6 890 186.9 892 189.5 894 188.4 895 186.8 896 188.6 898 187.3 899 187.2 901 185.9 902 186.9 904 190.1 906 188.1 907 187.8 908 187.1 910 187.6 912 185.8 913 186.7 914 189.4 916 188.7 917 190.3 919 185.9 920 188.0 922 188.0 924 189.7 925 188.3 926 187.3 928 188.3 930 188.2 931 188.5 932 185.4 934 188.3 935 189.4 937 188.3 938 188.1 940 187.7 942 187.9 943 188.9 944 187.8 946 187.1 947 189.2 949 185.2 950 185.5 952 189.6 953 187.9 955 186.2 956 185.8 958 185.2 960 189.5 961 188.6 962 187.9 964 186.6 965 188.5 967 186.7 968 186.7 970 186.3 972 188.7 973 186.9 974 187.0 976 187.6 978 185.5 979 187.4 980 185.3 982 187.7 983 184.9 985 185.0 986 187.9 988 186.5 990 186.5 991 188.0 992 185.9 994 186.1 996 187.8 997 186.6 998 185.7 1000 186.9 1001 187.5 1003 184.7 1004 187.8 1006 186.2 1008 185.3 1009 185.6 1010 188.7 1012 186.9 1014 186.7 1015 186.8 1016 185.8 1018 185.8 1019 186.3 1021 186.1 1022 185.2 1024 184.9 1026 188.6 1027 183.8 1028 187.0 1030 185.4 1032 188.3 1033 186.9 1034 187.8 1036 185.0 1038 185.2 1039 186.3 1040 186.5 1042 185.8 1044 187.4 1045 187.0 1046 187.1 1048 185.3 1050 186.2 1051 187.7 1052 185.8 1054 185.6 1056 184.5 1057 186.8 1058 185.7 1060 183.7 1062 186.5 1063 186.6 1064 185.5 1066 186.7 1068 186.1 1069 186.7 1070 187.0 1072 185.0 1074 186.5 1075 187.3 1076 186.4 1078 186.2 1080 185.7 1081 184.9 1082 183.9 1084 187.5 1086 186.3 1087 188.2 1088 185.7 1090 185.4" fill="none" stroke="#f00000" stroke-width="1.0" stroke-linejoin="round"/><path d="M288 332.7 289 335.4 290 333.7 292 329.7 294 323.9 295 318.3 296 314.7 298 310.1 300 306.5 301 303.0 302 298.9 304 295.3 306 292.0 307 288.9 308 285.1 310 282.5 312 279.4 313 276.7 314 274.8 316 272.9 318 270.7 319 268.4 320 266.3 322 265.3 324 263.5 325 261.4 326 261.3 328 259.4 330 258.3 331 257.1 332 256.8 334 254.9 336 254.3 337 252.0 338 251.5 340 249.7 342 249.0 343 247.6 344 247.3 346 245.7 348 244.7 349 244.2 350 242.7 352 242.5 354 241.5 355 240.9 356 239.5 358 239.8 360 238.9 361 238.2 362 237.1 364 236.7 366 235.9 367 235.5 368 235.4 370 234.6 372 233.9 373 234.8 374 232.4 376 232.9 378 232.3 379 231.5 380 231.4 382 231.6 384 230.5 385 229.2 386 228.9 388 228.4 390 229.1 391 228.5 392 227.3 394 226.7 396 227.2 397 227.4 398 227.6 400 225.2 402 226.6 403 225.1 404 224.4 406 222.7 408 224.2 409 224.0 410 223.3 412 223.0 414 222.1 415 222.2 416 222.8 418 223.3 420 221.5 421 221.8 422 220.3 424 221.7 426 220.5 427 220.8 428 220.6 430 218.9 432 219.5 433 219.5 434 218.8 436 219.5 438 219.0 439 219.0 440 217.2 442 218.0 444 217.6 445 217.1 446 217.7 448 217.5 450 218.2 451 216.8 452 216.7 454 217.0 456 215.8 457 217.5 458 216.0 460 216.9 462 216.6 463 215.9 464 214.8 466 216.1 468 215.9 469 215.9 470 213.8 472 214.5 474 214.4 475 213.3 476 214.2 478 215.5 480 214.4 481 214.7 482 212.6 484 214.5 486 213.3 487 213.7 488 213.5 490 213.1 492 213.0 493 213.2 494 213.4 496 213.0 498 213.1 499 212.8 500 212.1 502 212.1 504 211.6 505 211.9 506 210.5 508 212.0 510 212.0 511 210.7 512 211.6 514 211.0 516 210.4 517 210.9 518 210.9 520 210.0 522 210.3 523 210.7 524 211.0 526 210.4 528 211.0 529 210.4 530 210.4 532 209.5 534 209.1 535 209.8 536 209.5 538 209.8 540 209.9 541 209.1 542 208.4 544 208.3 546 208.1 547 208.5 548 209.9 550 207.5 552 207.1 553 207.2 554 207.1 556 206.8 558 205.7 559 207.0 560 206.1 562 206.4 564 206.3 565 206.6 566 206.6 568 206.9 570 205.7 571 206.1 572 206.5 574 206.0 576 206.1 577 204.3 578 205.2 580 204.8 582 205.4 583 205.2 584 203.7 586 204.3 588 203.9 589 202.7 590 202.4 592 203.0 594 202.9 595 202.9 596 203.0 598 201.4 600 203.2 601 202.3 602 203.2 604 202.6 606 201.3 607 201.1 608 200.9 610 201.1 612 201.1 613 200.8 614 200.5 616 199.4 618 199.0 619 199.4 620 199.8 622 199.8 624 198.8 625 198.9 626 199.7 628 197.6 630 198.2 631 198.2 632 198.4 634 198.2 636 196.9 637 197.9 638 197.1 640 196.6 642 195.7 643 196.2 644 196.4 646 196.5 648 195.5 649 195.3 650 196.0 652 195.2 654 195.4 655 196.2 656 195.6 658 194.3 660 193.8 661 194.1 662 194.4 664 194.6 666 193.7 667 193.6 668 194.6 670 193.1 672 193.8 673 192.8 674 192.7 676 192.4 678 192.1 679 192.1 680 193.0 682 192.9 684 191.5 685 191.7 686 192.8 688 193.0 690 191.2 691 190.2 692 191.0 694 191.6 696 191.2 697 193.1 698 191.9 700 190.5 702 190.6 703 192.5 704 190.3 706 190.6 708 190.3 709 191.0 710 190.8 712 191.5 714 190.5 715 190.1 716 191.3 718 190.4 720 190.9 721 189.8 722 189.8 724 192.2 726 190.1 727 189.6 728 190.7 730 190.5 732 190.4 733 191.1 734 190.3 736 189.0 738 189.7 739 188.9 740 189.3 742 189.1 744 189.9 745 189.3 746 188.3 748 188.7 750 189.6 751 190.4 752 190.5 754 189.6 756 189.4 757 191.2 758 189.5 760 189.3 762 189.3 763 190.0 764 187.6 766 188.8 768 190.6 769 190.1 770 188.7 772 188.9 774 189.2 775 189.3 776 189.5 778 189.7 780 190.1 781 188.7 782 191.7 784 189.8 786 188.0 787 189.8 788 190.1 790 187.2 792 188.0 793 189.1 794 189.4 796 189.1 798 189.1 799 189.0 800 189.4 802 188.2 804 189.2 805 190.4 806 189.8 808 188.5 810 189.5 811 190.9 812 186.9 814 187.9 815 188.8 817 188.8 818 187.7 820 186.8 822 188.8 823 187.7 824 188.7 826 187.7 828 189.2 829 189.9 830 187.8 832 188.0 833 187.1 835 188.5 836 186.3 838 187.6 840 186.0 841 188.0 842 186.0 844 187.7 846 187.4 847 186.5 848 189.4 850 188.6 851 185.4 853 189.1 854 187.9 856 186.7 858 185.7 859 187.9 860 187.1 862 188.6 864 187.7 865 186.0 866 186.8 868 187.2 869 186.7 871 187.0 872 187.0 874 187.6 876 188.3 877 186.3 878 188.5 880 185.9 881 184.6 883 185.3 884 184.3 886 188.4 888 186.8 889 188.0 890 187.9 892 189.0 894 188.4 895 185.8 896 186.0 898 185.4 899 185.4 901 185.8 902 187.7 904 186.8 906 185.8 907 185.1 908 187.0 910 187.1 912 187.0 913 184.6 914 185.8 916 186.8 917 187.3 919 185.8 920 188.4 922 186.6 924 187.0 925 187.0 926 186.0 928 185.7 930 182.5 931 186.0 932 185.3 934 187.1 935 188.1 937 184.7 938 183.6 940 187.2 942 186.0 943 184.6 944 185.8 946 188.8 947 184.6 949 186.0 950 184.9 952 187.0 953 184.7 955 184.5 956 186.6 958 185.1 960 186.5 961 186.3 962 186.7 964 186.1 965 186.4 967 184.2 968 185.8 970 186.9 972 183.9 973 184.8 974 184.3 976 185.5 978 184.6 979 185.5 980 186.5 982 185.2 983 185.2 985 185.2 986 184.3 988 187.4 990 184.9 991 186.2 992 185.6 994 184.7 996 185.1 997 186.0 998 184.3 1000 185.2 1001 184.0 1003 183.6 1004 185.5 1006 186.4 1008 185.0 1009 184.1 1010 184.7 1012 186.4 1014 187.1 1015 186.1 1016 186.1 1018 184.2 1019 184.9 1021 183.9 1022 185.1 1024 182.9 1026 184.9 1027 184.3 1028 185.4 1030 184.4 1032 183.6 1033 184.0 1034 183.4 1036 185.6 1038 184.3 1039 182.8 1040 184.5 1042 185.0 1044 185.1 1045 185.4 1046 184.6 1048 183.1 1050 184.3 1051 184.8 1052 185.7 1054 186.1 1056 181.9 1057 185.3 1058 184.6 1060 185.3 1062 184.5 1063 185.3 1064 184.6 1066 183.0 1068 185.6 1069 184.1 1070 184.8 1072 183.9 1074 185.5 1075 184.2 1076 185.9 1078 186.9 1080 186.3 1081 185.8 1082 186.0 1084 185.1 1086 183.4 1087 186.0 1088 184.1 1090 184.5" fill="none" stroke="#0040ff" stroke-width="1.0" stroke-linejoin="round"/><path d="M288 332.7 289 335.4 290 333.5 292 329.3 294 324.1 295 318.7 296 314.4 298 310.7 300 306.5 301 302.6 302 298.6 304 295.8 306 292.3 307 288.8 308 285.7 310 282.5 312 279.5 313 277.0 314 274.5 316 272.2 318 270.7 319 268.1 320 267.1 322 264.2 324 262.9 325 262.1 326 260.3 328 259.6 330 258.3 331 257.1 332 256.1 334 255.0 336 253.5 337 252.5 338 251.3 340 250.2 342 249.4 343 247.0 344 246.4 346 246.4 348 244.9 349 244.2 350 244.5 352 243.2 354 242.1 355 240.5 356 240.0 358 239.2 360 238.9 361 237.9 362 238.3 364 236.9 366 236.3 367 236.7 368 235.4 370 234.3 372 233.6 373 233.3 374 234.0 376 233.2 378 233.0 379 231.6 380 232.3 382 232.0 384 231.9 385 230.5 386 230.0 388 230.2 390 230.0 391 229.3 392 228.0 394 229.2 396 228.1 397 227.6 398 227.1 400 226.3 402 226.2 403 226.2 404 225.1 406 225.0 408 225.2 409 224.9 410 225.4 412 224.3 414 224.5 415 224.5 416 223.7 418 224.2 420 223.5 421 223.0 422 222.2 424 222.4 426 221.7 427 220.8 428 221.0 430 221.9 432 222.1 433 221.4 434 221.2 436 221.6 438 221.3 439 221.1 440 220.3 442 218.9 444 218.6 445 220.0 446 219.5 448 219.9 450 219.9 451 218.8 452 218.6 454 218.9 456 218.0 457 218.4 458 217.4 460 218.2 462 217.3 463 217.8 464 217.5 466 217.0 468 218.1 469 217.6 470 217.1 472 217.1 474 216.6 475 217.1 476 217.3 478 216.5 480 216.1 481 216.6 482 215.3 484 215.5 486 215.3 487 215.2 488 216.1 490 214.2 492 215.7 493 215.0 494 214.7 496 214.8 498 214.8 499 215.2 500 214.9 502 214.5 504 213.7 505 214.7 506 213.8 508 213.9 510 214.0 511 214.3 512 213.9 514 214.8 516 213.6 517 213.4 518 213.8 520 213.1 522 213.1 523 213.6 524 212.6 526 213.3 528 211.5 529 213.4 530 213.2 532 213.0 534 212.4 535 211.8 536 212.3 538 212.5 540 211.0 541 211.4 542 212.1 544 211.9 546 212.6 547 211.6 548 210.5 550 212.1 552 212.1 553 211.1 554 212.5 556 210.1 558 211.7 559 211.1 560 210.7 562 209.8 564 210.1 565 211.4 566 211.1 568 209.9 570 211.1 571 209.9 572 210.1 574 209.0 576 208.7 577 210.7 578 208.9 580 208.6 582 209.3 583 209.0 584 209.3 586 208.6 588 208.0 589 207.3 590 207.1 592 208.0 594 208.1 595 206.9 596 208.9 598 208.0 600 206.6 601 205.5 602 207.1 604 206.4 606 206.9 607 206.1 608 205.9 610 206.2 612 205.3 613 205.5 614 204.9 616 205.1 618 205.5 619 204.5 620 203.9 622 204.7 624 203.3 625 203.6 626 204.0 628 203.6 630 203.7 631 203.8 632 202.6 634 202.4 636 203.0 637 202.7 638 202.6 640 201.9 642 201.3 643 202.4 644 201.7 646 201.8 648 201.3 649 200.6 650 201.8 652 202.4 654 201.1 655 201.8 656 199.7 658 201.0 660 200.6 661 200.1 662 200.0 664 200.2 666 199.8 667 199.2 668 199.8 670 198.4 672 199.1 673 200.5 674 198.5 676 199.9 678 198.6 679 197.3 680 197.9 682 199.1 684 198.8 685 198.2 686 197.2 688 198.3 690 197.1 691 197.4 692 197.5 694 197.4 696 196.2 697 198.0 698 197.7 700 196.3 702 196.1 703 197.5 704 197.1 706 197.2 708 195.9 709 196.6 710 195.1 712 195.5 714 195.7 715 195.6 716 195.3 718 195.0 720 195.5 721 195.2 722 194.7 724 195.2 726 194.4 727 195.1 728 195.4 730 194.7 732 193.5 733 193.5 734 195.7 736 194.2 738 194.7 739 194.5 740 194.4 742 194.3 744 194.4 745 194.1 746 193.7 748 194.7 750 194.6 751 194.4 752 194.4 754 192.9 756 194.2 757 193.3 758 193.1 760 192.5 762 193.0 763 192.0 764 192.9 766 192.5 768 192.0 769 193.8 770 192.2 772 191.1 774 192.2 775 192.5 776 190.5 778 192.0 780 190.9 781 194.0 782 191.7 784 192.2 786 191.3 787 190.5 788 191.6 790 191.6 792 193.9 793 190.5 794 190.0 796 190.9 798 191.4 799 190.6 800 189.9 802 190.1 804 188.7 805 191.1 806 191.7 808 189.9 810 189.1 811 190.6 812 190.1 814 190.6 815 191.2 817 190.6 818 191.8 820 189.4 822 189.1 823 188.6 824 190.2 826 190.0 828 190.9 829 190.6 830 188.2 832 186.1 833 190.0 835 189.2 836 187.8 838 189.4 840 188.0 841 188.8 842 188.7 844 187.4 846 188.5 847 189.5 848 187.3 850 188.0 851 188.6 853 188.8 854 187.2 856 188.6 858 187.6 859 186.6 860 187.7 862 186.3 864 189.0 865 186.7 866 186.8 868 185.2 869 187.2 871 186.2 872 187.3 874 188.3 876 188.1 877 187.8 878 186.1 880 187.8 881 186.8 883 185.8 884 185.4 886 185.7 888 185.0 889 188.0 890 187.2 892 186.3 894 185.3 895 186.0 896 187.4 898 186.7 899 188.4 901 185.5 902 188.5 904 186.1 906 185.1 907 185.3 908 188.2 910 186.0 912 186.7 913 186.6 914 184.3 916 185.8 917 187.8 919 187.4 920 185.2 922 185.8 924 187.4 925 188.0 926 186.6 928 186.5 930 185.0 931 186.6 932 185.1 934 184.4 935 187.7 937 186.5 938 184.0 940 186.3 942 185.8 943 184.6 944 186.6 946 186.2 947 187.6 949 185.0 950 186.2 952 186.0 953 188.6 955 184.4 956 184.7 958 186.5 960 184.1 961 188.4 962 185.6 964 187.4 965 182.3 967 188.5 968 186.8 970 186.3 972 184.4 973 184.4 974 184.9 976 185.6 978 182.8 979 186.1 980 184.9 982 183.2 983 186.7 985 186.2 986 183.9 988 184.6 990 186.7 991 185.1 992 182.9 994 185.4 996 184.2 997 184.9 998 185.9 1000 183.2 1001 183.9 1003 183.6 1004 185.2 1006 184.9 1008 184.7 1009 184.5 1010 185.4 1012 185.6 1014 183.4 1015 186.2 1016 185.5 1018 185.4 1019 185.5 1021 186.3 1022 185.8 1024 183.9 1026 185.3 1027 185.7 1028 182.9 1030 186.4 1032 183.6 1033 184.4 1034 186.4 1036 185.3 1038 185.3 1039 183.3 1040 183.7 1042 185.1 1044 186.2 1045 186.8 1046 185.0 1048 186.4 1050 185.0 1051 185.0 1052 184.3 1054 183.6 1056 184.6 1057 184.2 1058 184.9 1060 183.5 1062 183.8 1063 182.8 1064 183.1 1066 185.6 1068 186.4 1069 183.9 1070 183.3 1072 185.5 1074 182.9 1075 184.5 1076 184.8 1078 184.2 1080 186.3 1081 186.6 1082 185.0 1084 186.0 1086 184.6 1087 184.6 1088 187.6 1090 185.5" fill="none" stroke="#ff0000" stroke-width="1.0" stroke-linejoin="round"/><path d="M288 333.2 289 336.6 290 334.6 292 330.8 294 325.7 295 320.0 296 315.9 298 312.4 300 308.6 301 304.5 302 301.0 304 297.9 306 294.4 307 291.3 308 288.2 310 284.9 312 282.3 313 279.4 314 277.3 316 275.2 318 273.1 319 270.9 320 268.9 322 267.4 324 266.3 325 264.5 326 263.7 328 262.7 330 261.3 331 259.9 332 258.8 334 257.6 336 256.1 337 255.0 338 254.1 340 252.5 342 251.7 343 250.4 344 249.4 346 248.7 348 248.5 349 247.2 350 246.5 352 245.7 354 245.0 355 244.6 356 244.0 358 242.3 360 241.5 361 241.0 362 240.5 364 239.0 366 239.0 367 238.8 368 237.8 370 237.7 372 236.9 373 236.6 374 235.9 376 235.7 378 235.5 379 234.6 380 233.8 382 234.5 384 233.8 385 233.7 386 232.2 388 232.5 390 231.4 391 232.0 392 230.7 394 231.1 396 230.6 397 229.7 398 229.8 400 229.6 402 228.3 403 228.5 404 227.4 406 226.3 408 227.7 409 227.3 410 227.6 412 227.1 414 225.7 415 225.6 416 225.3 418 224.8 420 225.3 421 225.5 422 223.6 424 223.8 426 223.0 427 223.4 428 222.7 430 223.2 432 222.7 433 222.6 434 222.0 436 221.2 438 221.5 439 223.3 440 221.5 442 221.2 444 220.6 445 220.7 446 221.0 448 220.9 450 220.5 451 220.5 452 219.1 454 219.4 456 219.5 457 218.8 458 218.0 460 219.2 462 218.9 463 218.9 464 219.3 466 218.8 468 218.8 469 217.9 470 217.7 472 217.3 474 218.1 475 217.0 476 218.0 478 217.4 480 216.4 481 216.2 482 216.2 484 215.5 486 215.9 487 216.5 488 216.4 490 216.6 492 215.8 493 216.3 494 216.1 496 216.1 498 216.4 499 213.9 500 214.7 502 216.3 504 214.7 505 215.2 506 216.0 508 214.7 510 214.4 511 214.0 512 213.6 514 214.6 516 214.0 517 213.5 518 213.5 520 213.4 522 213.5 523 212.7 524 214.1 526 214.1 528 212.1 529 212.7 530 212.2 532 212.6 534 212.8 535 212.8 536 212.3 538 212.5 540 212.2 541 212.1 542 211.4 544 211.3 546 210.7 547 211.9 548 211.4 550 210.7 552 210.9 553 212.3 554 210.6 556 210.6 558 210.8 559 210.6 560 210.6 562 209.4 564 209.5 565 209.6 566 209.0 568 208.9 570 209.8 571 209.7 572 209.6 574 208.4 576 208.7 577 207.8 578 208.0 580 208.3 582 208.7 583 208.0 584 206.4 586 207.9 588 207.8 589 207.3 590 206.2 592 206.8 594 207.2 595 206.7 596 206.3 598 205.9 600 205.2 601 204.1 602 204.6 604 204.8 606 205.0 607 205.2 608 204.2 610 203.6 612 203.6 613 204.0 614 203.3 616 203.6 618 203.4 619 203.2 620 202.8 622 202.7 624 201.9 625 202.2 626 202.1 628 201.3 630 201.3 631 200.8 632 201.7 634 200.4 636 200.9 637 201.4 638 200.7 640 201.1 642 200.8 643 200.3 644 199.3 646 200.5 648 199.4 649 199.5 650 198.3 652 198.9 654 198.5 655 197.9 656 199.1 658 198.5 660 199.0 661 198.5 662 197.6 664 197.7 666 197.3 667 197.5 668 197.5 670 197.1 672 197.3 673 197.3 674 197.4 676 196.4 678 196.0 679 196.8 680 196.2 682 197.1 684 196.3 685 195.5 686 196.1 688 195.0 690 195.3 691 194.7 692 195.1 694 195.5 696 194.5 697 193.9 698 194.6 700 193.9 702 194.4 703 194.1 704 193.0 706 193.7 708 194.1 709 193.1 710 193.3 712 193.5 714 192.6 715 194.9 716 192.5 718 191.5 720 192.4 721 193.8 722 191.5 724 190.6 726 191.8 727 192.8 728 192.5 730 192.0 732 191.7 733 190.9 734 191.2 736 193.1 738 191.6 739 191.4 740 189.9 742 191.6 744 192.1 745 191.2 746 190.7 748 192.1 750 189.9 751 190.7 752 189.9 754 189.9 756 189.9 757 189.1 758 188.8 760 190.4 762 190.0 763 189.1 764 189.7 766 190.2 768 189.5 769 190.2 770 189.8 772 192.1 774 189.1 775 187.7 776 188.5 778 188.4 780 188.8 781 189.5 782 188.3 784 188.6 786 188.7 787 188.3 788 188.9 790 188.2 792 187.6 793 187.2 794 187.9 796 187.2 798 187.7 799 189.8 800 189.4 802 187.7 804 188.5 805 186.8 806 188.5 808 187.5 810 187.6 811 187.7 812 187.4 814 186.8 815 186.6 817 187.1 818 186.3 820 185.9 822 186.5 823 186.9 824 186.8 826 186.5 828 186.5 829 185.8 830 183.1 832 184.6 833 185.5 835 184.9 836 184.8 838 184.0 840 183.8 841 186.1 842 182.8 844 185.8 846 184.8 847 185.7 848 186.5 850 186.5 851 182.5 853 182.9 854 185.4 856 185.5 858 182.7 859 185.2 860 183.6 862 181.9 864 183.2 865 182.3 866 183.6 868 185.7 869 184.6 871 185.7 872 183.3 874 185.0 876 183.4 877 184.1 878 184.2 880 182.8 881 183.9 883 184.3 884 182.2 886 183.3 888 184.9 889 181.9 890 184.8 892 182.9 894 182.5 895 183.4 896 184.0 898 183.4 899 183.4 901 184.3 902 182.0 904 183.7 906 183.8 907 181.3 908 183.7 910 184.6 912 182.9 913 182.8 914 182.8 916 180.4 917 183.4 919 181.2 920 181.7 922 181.0 924 182.8 925 183.0 926 182.8 928 182.2 930 181.5 931 180.6 932 184.6 934 181.3 935 182.0 937 182.4 938 183.6 940 182.0 942 184.5 943 180.9 944 183.4 946 182.5 947 182.5 949 181.6 950 183.8 952 181.3 953 181.8 955 180.4 956 181.9 958 182.3 960 184.3 961 182.6 962 180.2 964 182.6 965 182.7 967 182.2 968 181.1 970 184.1 972 179.9 973 181.3 974 181.2 976 182.0 978 179.7 979 182.5 980 181.0 982 181.8 983 183.4 985 182.0 986 181.0 988 182.2 990 182.3 991 181.8 992 182.8 994 183.1 996 181.7 997 182.9 998 181.1 1000 180.9 1001 180.3 1003 180.6 1004 182.0 1006 181.2 1008 183.0 1009 181.2 1010 182.3 1012 180.1 1014 182.5 1015 181.5 1016 182.5 1018 180.9 1019 180.9 1021 182.8 1022 179.4 1024 181.1 1026 183.3 1027 182.7 1028 183.7 1030 183.9 1032 181.8 1033 184.0 1034 181.2 1036 183.5 1038 182.1 1039 179.6 1040 182.0 1042 181.6 1044 180.2 1045 182.0 1046 181.0 1048 182.5 1050 182.0 1051 181.4 1052 181.6 1054 182.5 1056 181.3 1057 180.9 1058 180.8 1060 181.5 1062 182.7 1063 180.8 1064 180.6 1066 182.7 1068 184.2 1069 181.8 1070 180.4 1072 180.6 1074 182.9 1075 180.0 1076 182.6 1078 180.5 1080 182.1 1081 180.4 1082 181.0 1084 181.8 1086 180.7 1087 182.3 1088 182.0 1090 181.9" fill="none" stroke="#d00000" stroke-width="1.0" stroke-linejoin="round"/><path d="M288 332.7 289 335.1 290 333.4 292 329.4 294 324.2 295 318.6 296 314.4 298 310.3 300 306.5 301 302.7 302 298.7 304 295.7 306 292.2 307 289.2 308 285.6 310 282.6 312 279.6 313 276.7 314 274.7 316 272.2 318 270.3 319 268.4 320 267.0 322 264.6 324 263.1 325 262.2 326 260.9 328 260.1 330 258.6 331 257.7 332 256.1 334 255.1 336 253.6 337 252.8 338 251.8 340 249.9 342 248.9 343 246.9 344 246.6 346 245.2 348 244.8 349 244.3 350 244.1 352 242.8 354 241.7 355 241.1 356 240.2 358 239.5 360 239.5 361 238.0 362 237.9 364 236.9 366 235.7 367 236.7 368 235.4 370 234.5 372 233.7 373 233.7 374 233.6 376 232.3 378 232.0 379 232.7 380 231.3 382 231.9 384 232.0 385 230.7 386 230.2 388 230.5 390 227.9 391 229.3 392 227.9 394 227.4 396 226.1 397 227.2 398 225.7 400 226.9 402 225.9 403 225.8 404 225.8 406 224.6 408 223.4 409 222.9 410 223.4 412 224.2 414 223.6 415 222.5 416 222.2 418 221.9 420 222.1 421 222.2 422 221.2 424 221.2 426 220.1 427 221.0 428 219.9 430 219.4 432 218.8 433 218.6 434 220.1 436 220.0 438 219.0 439 219.4 440 220.1 442 217.6 444 218.0 445 217.5 446 217.8 448 217.1 450 217.4 451 217.3 452 216.1 454 217.7 456 216.6 457 217.7 458 215.7 460 216.6 462 217.0 463 217.2 464 216.1 466 214.7 468 215.4 469 216.4 470 216.6 472 213.6 474 215.4 475 215.8 476 214.7 478 214.3 480 213.6 481 214.5 482 214.7 484 213.7 486 214.5 487 213.6 488 213.6 490 213.0 492 213.9 493 213.7 494 213.0 496 212.8 498 213.8 499 213.3 500 212.6 502 212.8 504 211.1 505 211.9 506 211.5 508 212.1 510 211.9 511 211.8 512 211.1 514 211.8 516 210.6 517 211.8 518 210.7 520 211.0 522 211.3 523 210.0 524 210.3 526 210.8 528 211.1 529 210.0 530 210.9 532 209.9 534 210.7 535 210.0 536 210.4 538 209.9 540 208.7 541 208.5 542 209.7 544 209.4 546 210.1 547 208.8 548 208.2 550 209.3 552 209.2 553 208.3 554 208.7 556 208.1 558 207.1 559 207.6 560 207.4 562 206.5 564 207.3 565 206.9 566 207.1 568 207.4 570 205.9 571 207.5 572 206.5 574 207.0 576 206.7 577 206.8 578 206.0 580 205.4 582 204.8 583 206.5 584 205.1 586 205.3 588 205.2 589 204.8 590 204.4 592 204.4 594 204.1 595 202.7 596 203.7 598 203.3 600 204.0 601 202.5 602 203.2 604 202.8 606 203.0 607 202.4 608 202.7 610 202.7 612 202.5 613 201.7 614 201.3 616 200.6 618 199.9 619 199.6 620 200.8 622 200.7 624 199.6 625 200.4 626 199.0 628 198.8 630 199.8 631 198.6 632 198.0 634 198.4 636 198.7 637 198.5 638 197.9 640 198.5 642 197.7 643 197.8 644 197.9 646 197.9 648 196.8 649 197.5 650 196.7 652 197.7 654 196.6 655 196.2 656 195.9 658 195.4 660 195.5 661 195.3 662 195.6 664 195.9 666 195.8 667 195.4 668 194.7 670 194.1 672 194.3 673 194.2 674 193.8 676 194.2 678 193.8 679 193.8 680 193.5 682 193.6 684 194.1 685 193.4 686 193.5 688 191.9 690 191.9 691 193.0 692 192.9 694 192.3 696 193.1 697 191.2 698 191.9 700 192.0 702 190.9 703 190.7 704 191.3 706 190.6 708 192.2 709 191.5 710 191.4 712 191.8 714 190.1 715 188.9 716 191.3 718 190.7 720 189.5 721 190.3 722 190.0 724 190.4 726 189.5 727 190.3 728 189.0 730 189.1 732 189.1 733 189.8 734 189.3 736 188.7 738 189.6 739 189.5 740 190.4 742 189.0 744 188.6 745 187.7 746 189.2 748 189.3 750 187.2 751 187.2 752 188.8 754 188.2 756 189.2 757 187.7 758 186.6 760 186.9 762 188.2 763 187.1 764 187.8 766 186.9 768 187.5 769 186.4 770 185.8 772 186.5 774 186.4 775 186.2 776 185.7 778 186.7 780 186.4 781 186.3 782 185.0 784 185.9 786 185.4 787 186.1 788 186.9 790 185.9 792 185.1 793 185.7 794 185.9 796 185.6 798 184.7 799 184.7 800 185.0 802 185.7 804 185.4 805 181.3 806 184.7 808 183.9 810 184.1 811 185.6 812 182.9 814 184.0 815 184.8 817 183.1 818 184.3 820 183.4 822 184.9 823 183.6 824 182.7 826 183.8 828 184.6 829 183.9 830 182.3 832 184.5 833 184.2 835 181.9 836 182.5 838 182.6 840 182.9 841 182.0 842 181.4 844 181.7 846 183.9 847 181.4 848 183.7 850 180.0 851 182.2 853 181.0 854 181.3 856 182.2 858 180.2 859 181.1 860 179.0 862 180.5 864 180.8 865 178.3 866 179.5 868 180.9 869 181.8 871 178.7 872 179.4 874 179.3 876 181.0 877 181.3 878 181.5 880 179.2 881 180.6 883 179.6 884 182.9 886 179.1 888 181.1 889 183.4 890 181.8 892 179.8 894 178.5 895 183.4 896 181.8 898 180.0 899 182.0 901 180.7 902 181.3 904 180.0 906 181.8 907 180.5 908 181.1 910 179.9 912 180.1 913 178.9 914 179.7 916 177.9 917 181.8 919 180.2 920 179.0 922 179.8 924 183.0 925 179.5 926 180.4 928 177.0 930 179.9 931 179.0 932 180.9 934 178.9 935 183.0 937 180.9 938 180.1 940 181.6 942 178.5 943 179.6 944 177.7 946 181.3 947 180.6 949 178.8 950 180.2 952 178.6 953 178.8 955 180.4 956 179.4 958 178.9 960 179.2 961 179.7 962 180.0 964 179.7 965 178.3 967 177.0 968 181.0 970 180.6 972 179.5 973 177.6 974 180.3 976 176.6 978 176.6 979 182.1 980 178.5 982 178.5 983 179.7 985 181.4 986 178.9 988 179.7 990 177.8 991 178.5 992 180.3 994 176.8 996 177.0 997 177.3 998 179.0 1000 178.0 1001 178.9 1003 179.7 1004 181.3 1006 178.7 1008 181.4 1009 178.2 1010 180.6 1012 178.8 1014 179.4 1015 180.4 1016 180.2 1018 179.7 1019 177.2 1021 178.6 1022 179.3 1024 178.0 1026 180.4 1027 180.8 1028 180.1 1030 177.8 1032 179.4 1033 178.9 1034 178.9 1036 179.5 1038 177.6 1039 178.2 1040 180.1 1042 180.3 1044 179.1 1045 180.1 1046 179.1 1048 178.2 1050 179.0 1051 178.8 1052 179.7 1054 180.0 1056 180.3 1057 177.5 1058 180.0 1060 179.0 1062 179.0 1063 178.6 1064 179.5 1066 181.0 1068 176.6 1069 180.4 1070 178.4 1072 180.4 1074 178.3 1075 180.4 1076 177.1 1078 178.5 1080 181.0 1081 177.1 1082 181.3 1084 179.5 1086 177.8 1087 179.6 1088 177.6 1090 179.0" fill="none" stroke="#ff1010" stroke-width="1.0" stroke-linejoin="round"/><path d="M288 330.5 289 332.4 290 330.8 292 326.3 294 320.1 295 314.5 296 310.1 298 305.5 300 300.4 301 296.2 302 293.1 304 288.8 306 285.1 307 281.9 308 278.3 310 275.5 312 272.4 313 269.3 314 267.1 316 264.9 318 262.8 319 261.1 320 259.2 322 257.4 324 255.7 325 254.6 326 252.4 328 252.6 330 251.3 331 250.0 332 248.5 334 248.0 336 246.0 337 245.0 338 243.6 340 241.8 342 240.4 343 239.2 344 239.2 346 237.4 348 236.5 349 236.0 350 235.2 352 234.6 354 233.9 355 232.7 356 231.5 358 231.6 360 230.6 361 229.6 362 230.0 364 228.0 366 228.0 367 226.9 368 227.2 370 227.0 372 226.1 373 225.3 374 225.5 376 224.0 378 223.9 379 224.1 380 222.9 382 222.8 384 222.3 385 222.1 386 221.9 388 221.8 390 220.7 391 220.4 392 219.7 394 220.1 396 219.1 397 218.5 398 219.4 400 218.2 402 216.7 403 218.0 404 217.5 406 217.1 408 217.1 409 215.9 410 216.2 412 215.9 414 216.1 415 215.0 416 215.1 418 215.0 420 214.7 421 213.3 422 214.0 424 213.6 426 212.8 427 213.4 428 212.6 430 213.5 432 212.3 433 213.8 434 212.3 436 212.4 438 212.4 439 211.2 440 211.2 442 211.0 444 210.4 445 210.8 446 210.6 448 210.9 450 209.6 451 210.0 452 210.8 454 210.8 456 210.5 457 210.4 458 209.1 460 209.5 462 208.9 463 209.9 464 209.8 466 208.4 468 210.2 469 209.6 470 210.1 472 209.1 474 207.0 475 208.9 476 207.7 478 207.2 480 208.5 481 208.4 482 207.6 484 207.3 486 208.5 487 207.9 488 206.3 490 207.7 492 206.9 493 206.3 494 207.0 496 206.8 498 207.0 499 206.9 500 206.8 502 207.3 504 206.5 505 206.2 506 205.6 508 206.1 510 206.2 511 204.5 512 205.6 514 205.6 516 205.7 517 205.3 518 205.7 520 205.4 522 205.5 523 205.6 524 205.0 526 205.5 528 203.5 529 205.1 530 203.3 532 204.0 534 203.6 535 203.1 536 204.9 538 202.8 540 203.4 541 203.8 542 203.9 544 203.1 546 204.1 547 202.0 548 203.0 550 202.4 552 202.6 553 202.8 554 202.6 556 202.8 558 201.4 559 202.0 560 201.6 562 201.4 564 201.2 565 201.2 566 200.5 568 201.5 570 201.6 571 200.9 572 200.9 574 200.5 576 199.7 577 199.6 578 199.7 580 200.3 582 199.4 583 199.4 584 199.0 586 199.2 588 199.3 589 198.8 590 199.2 592 199.1 594 198.2 595 198.2 596 197.4 598 197.7 600 198.3 601 196.7 602 196.3 604 197.7 606 197.2 607 196.1 608 196.4 610 197.2 612 195.4 613 195.9 614 195.5 616 194.8 618 195.7 619 195.6 620 194.6 622 194.2 624 194.5 625 193.7 626 194.0 628 193.4 630 194.4 631 193.9 632 193.0 634 193.9 636 193.7 637 193.1 638 193.1 640 193.4 642 193.6 643 191.7 644 192.4 646 191.4 648 192.6 649 191.9 650 191.9 652 191.6 654 192.4 655 190.6 656 191.4 658 190.9 660 191.5 661 189.9 662 191.5 664 189.4 666 190.6 667 190.4 668 190.5 670 189.1 672 190.3 673 190.2 674 190.1 676 189.2 678 189.0 679 189.6 680 188.8 682 188.1 684 188.4 685 188.5 686 189.2 688 187.5 690 187.9 691 189.0 692 188.5 694 189.6 696 187.5 697 188.4 698 187.7 700 186.5 702 188.2 703 186.7 704 187.3 706 187.7 708 186.1 709 186.5 710 187.1 712 186.2 714 186.9 715 187.0 716 186.5 718 185.5 720 187.2 721 186.9 722 185.3 724 186.8 726 185.9 727 185.9 728 186.5 730 186.0 732 185.5 733 185.4 734 184.8 736 185.0 738 184.4 739 184.8 740 185.2 742 184.3 744 184.4 745 184.0 746 184.7 748 184.6 750 184.5 751 185.5 752 183.9 754 184.7 756 184.7 757 184.3 758 182.3 760 184.5 762 182.6 763 185.4 764 183.9 766 182.0 768 183.3 769 183.1 770 183.8 772 184.9 774 182.7 775 182.3 776 182.1 778 181.3 780 182.9 781 182.3 782 184.5 784 182.9 786 182.4 787 181.3 788 180.7 790 180.9 792 181.8 793 182.2 794 182.1 796 182.0 798 181.7 799 180.7 800 181.9 802 183.1 804 182.6 805 178.7 806 180.1 808 181.7 810 181.4 811 180.4 812 180.7 814 180.6 815 182.7 817 182.1 818 180.5 820 179.9 822 180.2 823 178.9 824 180.3 826 180.0 828 180.1 829 179.1 830 180.6 832 177.8 833 180.9 835 178.9 836 178.9 838 178.0 840 180.7 841 180.4 842 179.7 844 178.5 846 178.3 847 181.9 848 179.4 850 178.7 851 178.6 853 178.5 854 179.0 856 178.6 858 180.7 859 177.7 860 181.2 862 178.7 864 179.5 865 178.0 866 179.5 868 177.3 869 177.9 871 177.5 872 176.9 874 176.8 876 178.3 877 177.1 878 177.5 880 177.1 881 177.8 883 180.9 884 178.2 886 177.9 888 178.4 889 178.7 890 177.7 892 178.6 894 177.0 895 176.3 896 177.7 898 176.8 899 179.1 901 178.9 902 178.1 904 178.8 906 177.6 907 177.5 908 175.8 910 178.2 912 176.1 913 178.7 914 177.8 916 176.6 917 177.1 919 180.3 920 177.5 922 176.9 924 179.2 925 178.0 926 177.8 928 176.9 930 175.9 931 178.9 932 178.4 934 175.5 935 175.9 937 175.3 938 177.3 940 176.1 942 180.0 943 176.7 944 178.3 946 178.8 947 178.5 949 176.0 950 175.5 952 177.7 953 177.6 955 175.8 956 177.9 958 176.8 960 176.4 961 175.7 962 177.4 964 180.3 965 177.3 967 176.2 968 177.6 970 177.7 972 178.1 973 176.5 974 176.8 976 176.7 978 177.0 979 175.5 980 176.6 982 177.0 983 178.2 985 177.4 986 176.9 988 175.2 990 176.3 991 177.3 992 176.0 994 176.1 996 177.4 997 176.3 998 178.1 1000 176.7 1001 174.5 1003 175.7 1004 176.1 1006 175.8 1008 176.0 1009 178.1 1010 177.3 1012 177.6 1014 176.3 1015 175.7 1016 174.4 1018 177.0 1019 178.1 1021 176.4 1022 176.8 1024 176.5 1026 176.8 1027 176.2 1028 177.4 1030 176.4 1032 175.7 1033 176.6 1034 176.2 1036 177.5 1038 175.8 1039 176.9 1040 177.6 1042 177.1 1044 177.2 1045 177.0 1046 177.4 1048 174.9 1050 175.8 1051 176.3 1052 176.3 1054 176.9 1056 175.9 1057 177.1 1058 176.9 1060 177.7 1062 175.5 1063 175.5 1064 175.6 1066 175.6 1068 179.6 1069 176.8 1070 175.7 1072 176.3 1074 178.7 1075 176.6 1076 176.1 1078 177.5 1080 178.2 1081 177.6 1082 180.3 1084 176.7 1086 177.9 1087 177.3 1088 177.2 1090 177.1" fill="none" stroke="#7000d0" stroke-width="1.0" stroke-linejoin="round"/><path d="M288 331.5 289 334.4 290 332.6 292 328.6 294 322.8 295 317.5 296 312.6 298 308.6 300 304.7 301 300.4 302 297.0 304 293.2 306 289.9 307 286.5 308 283.0 310 280.0 312 277.0 313 274.5 314 272.3 316 269.2 318 267.4 319 265.6 320 263.6 322 262.3 324 260.4 325 259.6 326 257.8 328 256.7 330 255.7 331 254.4 332 253.5 334 251.7 336 250.7 337 250.2 338 248.7 340 246.4 342 246.0 343 244.5 344 243.9 346 242.2 348 241.5 349 240.8 350 240.5 352 239.7 354 238.2 355 238.2 356 238.1 358 235.7 360 235.2 361 235.5 362 234.1 364 233.4 366 232.9 367 231.7 368 231.3 370 231.7 372 230.9 373 229.8 374 229.3 376 229.5 378 228.2 379 228.8 380 227.4 382 228.4 384 226.7 385 225.4 386 225.3 388 226.2 390 227.0 391 224.8 392 224.0 394 224.1 396 223.7 397 224.2 398 223.4 400 223.4 402 223.1 403 222.3 404 220.8 406 221.1 408 221.4 409 220.7 410 220.8 412 220.3 414 219.5 415 220.2 416 218.9 418 219.1 420 217.8 421 218.7 422 217.7 424 218.1 426 217.0 427 218.1 428 217.1 430 217.1 432 217.3 433 216.4 434 216.0 436 216.1 438 216.1 439 215.7 440 215.5 442 214.3 444 214.4 445 213.7 446 213.8 448 213.1 450 213.9 451 213.6 452 213.5 454 213.6 456 212.8 457 212.8 458 212.6 460 212.5 462 211.9 463 213.2 464 211.9 466 212.1 468 212.3 469 211.9 470 211.3 472 211.0 474 211.4 475 210.7 476 210.8 478 210.2 480 210.1 481 210.1 482 210.6 484 210.9 486 209.3 487 210.4 488 209.3 490 209.6 492 208.5 493 209.4 494 209.4 496 210.2 498 208.6 499 208.8 500 209.0 502 208.7 504 207.7 505 208.0 506 207.6 508 208.1 510 207.7 511 207.2 512 207.8 514 206.7 516 207.5 517 206.1 518 207.4 520 207.2 522 206.8 523 206.9 524 206.6 526 206.4 528 205.6 529 206.4 530 205.4 532 205.4 534 205.7 535 205.8 536 204.4 538 206.8 540 205.5 541 205.2 542 204.6 544 204.8 546 204.1 547 204.2 548 203.7 550 204.5 552 203.8 553 202.9 554 204.1 556 203.4 558 204.2 559 203.0 560 203.5 562 202.5 564 203.4 565 202.5 566 203.0 568 202.2 570 201.8 571 200.5 572 201.4 574 201.2 576 200.3 577 200.5 578 201.5 580 200.5 582 200.5 583 199.9 584 199.9 586 201.0 588 200.1 589 198.6 590 198.9 592 199.7 594 199.3 595 199.0 596 199.4 598 200.3 600 197.9 601 198.6 602 198.2 604 198.0 606 197.6 607 197.4 608 196.0 610 196.8 612 196.1 613 196.2 614 195.2 616 195.7 618 196.7 619 194.3 620 194.1 622 194.5 624 195.6 625 193.7 626 194.0 628 194.5 630 194.2 631 193.0 632 193.8 634 193.4 636 193.5 637 192.6 638 193.2 640 192.2 642 192.5 643 191.0 644 192.3 646 191.7 648 191.0 649 190.9 650 192.1 652 191.0 654 190.6 655 190.3 656 190.6 658 189.5 660 189.3 661 190.2 662 190.4 664 189.7 666 189.1 667 188.6 668 189.8 670 189.3 672 189.9 673 189.1 674 187.8 676 187.0 678 187.6 679 188.0 680 187.9 682 186.5 684 186.8 685 187.2 686 187.5 688 187.5 690 186.9 691 185.6 692 186.7 694 186.7 696 186.2 697 186.4 698 185.5 700 186.6 702 185.8 703 186.2 704 185.1 706 185.5 708 186.0 709 185.7 710 185.3 712 184.2 714 184.7 715 184.8 716 185.6 718 185.9 720 185.8 721 185.1 722 184.3 724 184.4 726 183.6 727 185.1 728 184.4 730 184.3 732 184.8 733 185.6 734 184.5 736 183.1 738 185.0 739 183.0 740 182.9 742 183.6 744 183.2 745 183.4 746 183.2 748 182.1 750 182.2 751 182.2 752 182.7 754 183.0 756 182.6 757 183.7 758 183.3 760 182.5 762 183.9 763 182.4 764 182.5 766 182.4 768 182.3 769 182.7 770 180.3 772 183.6 774 182.5 775 183.4 776 181.5 778 180.9 780 180.1 781 182.2 782 180.9 784 182.2 786 181.4 787 180.7 788 182.5 790 181.3 792 181.6 793 180.6 794 180.2 796 182.2 798 180.8 799 181.9 800 182.7 802 181.5 804 181.0 805 181.5 806 181.3 808 178.9 810 180.0 811 178.9 812 178.5 814 179.6 815 177.2 817 179.2 818 179.4 820 180.2 822 179.7 823 178.9 824 179.1 826 178.8 828 178.7 829 180.3 830 179.7 832 179.2 833 179.2 835 180.0 836 178.6 838 179.4 840 177.4 841 179.2 842 178.0 844 180.3 846 178.3 847 177.0 848 177.9 850 177.2 851 177.6 853 178.1 854 177.2 856 177.2 858 177.2 859 178.2 860 178.0 862 180.5 864 177.3 865 178.5 866 178.1 868 176.3 869 177.0 871 176.7 872 177.9 874 176.5 876 177.0 877 176.7 878 177.1 880 175.0 881 178.2 883 176.5 884 176.5 886 175.7 888 176.2 889 177.3 890 176.5 892 174.9 894 175.4 895 177.1 896 176.4 898 176.8 899 175.0 901 177.1 902 175.0 904 174.6 906 176.7 907 173.9 908 176.7 910 176.7 912 175.6 913 177.0 914 176.3 916 177.8 917 176.8 919 176.3 920 177.9 922 175.5 924 175.4 925 176.4 926 175.5 928 175.5 930 177.2 931 175.6 932 176.0 934 177.0 935 175.8 937 177.4 938 179.5 940 175.7 942 175.9 943 174.0 944 176.5 946 175.1 947 177.1 949 177.4 950 176.4 952 175.8 953 176.1 955 174.7 956 174.6 958 177.4 960 176.5 961 173.8 962 174.3 964 177.2 965 176.7 967 173.5 968 176.9 970 174.3 972 178.1 973 176.0 974 176.9 976 175.3 978 174.2 979 175.1 980 174.5 982 174.3 983 173.7 985 175.3 986 177.9 988 177.5 990 174.6 991 174.9 992 174.4 994 176.0 996 176.2 997 177.8 998 177.0 1000 175.9 1001 176.5 1003 177.7 1004 174.0 1006 175.7 1008 175.4 1009 175.6 1010 175.8 1012 177.0 1014 174.8 1015 176.4 1016 177.0 1018 174.3 1019 175.7 1021 175.1 1022 178.0 1024 173.7 1026 176.8 1027 177.1 1028 176.3 1030 176.9 1032 176.8 1033 175.2 1034 174.1 1036 176.1 1038 175.8 1039 175.7 1040 175.6 1042 177.3 1044 173.8 1045 177.5 1046 176.6 1048 173.4 1050 176.0 1051 177.0 1052 175.7 1054 173.1 1056 175.8 1057 177.2 1058 175.6 1060 175.5 1062 176.8 1063 175.6 1064 178.5 1066 175.3 1068 175.6 1069 175.8 1070 176.6 1072 174.3 1074 175.1 1075 174.3 1076 176.6 1078 175.0 1080 173.8 1081 174.2 1082 177.0 1084 175.9 1086 176.7 1087 176.2 1088 175.9 1090 173.8" fill="none" stroke="#00ff50" stroke-width="1.0" stroke-linejoin="round"/><path d="M288 330.7 289 333.4 290 331.4 292 327.2 294 321.6 295 316.0 296 311.2 298 306.3 300 302.5 301 298.3 302 294.2 304 291.2 306 287.3 307 283.7 308 280.1 310 277.1 312 274.7 313 272.0 314 269.0 316 266.8 318 265.2 319 263.2 320 260.9 322 259.7 324 257.6 325 256.4 326 255.2 328 253.4 330 253.2 331 252.2 332 250.9 334 250.4 336 247.9 337 246.6 338 245.4 340 244.1 342 242.9 343 242.4 344 240.8 346 239.9 348 238.7 349 238.1 350 237.0 352 236.3 354 236.7 355 235.4 356 233.9 358 233.6 360 232.6 361 231.5 362 231.7 364 230.5 366 229.2 367 229.4 368 229.2 370 228.3 372 227.9 373 227.8 374 226.3 376 226.2 378 226.7 379 224.6 380 225.3 382 224.3 384 223.6 385 223.5 386 223.7 388 224.0 390 222.6 391 221.7 392 222.2 394 221.3 396 219.9 397 220.9 398 217.6 400 219.4 402 219.9 403 218.6 404 218.7 406 217.4 408 218.6 409 217.1 410 217.9 412 216.7 414 215.7 415 216.2 416 215.2 418 215.9 420 214.8 421 215.5 422 215.0 424 214.6 426 215.2 427 214.6 428 214.2 430 212.6 432 213.3 433 213.8 434 213.7 436 212.8 438 213.2 439 212.2 440 212.8 442 212.6 444 211.2 445 212.7 446 210.0 448 211.6 450 211.9 451 210.5 452 210.0 454 209.7 456 210.0 457 210.6 458 210.1 460 209.7 462 209.2 463 208.9 464 208.9 466 208.7 468 210.4 469 209.2 470 208.1 472 208.9 474 208.5 475 208.7 476 208.2 478 208.4 480 209.1 481 207.5 482 207.3 484 207.9 486 208.5 487 207.3 488 207.7 490 206.2 492 206.8 493 207.5 494 206.8 496 205.2 498 206.3 499 206.5 500 206.0 502 206.4 504 205.1 505 206.3 506 205.0 508 204.6 510 204.5 511 205.0 512 205.0 514 204.6 516 204.4 517 204.1 518 204.3 520 204.0 522 204.3 523 204.4 524 203.1 526 203.4 528 203.0 529 202.3 530 203.6 532 203.4 534 203.2 535 202.3 536 203.5 538 202.9 540 201.9 541 203.2 542 201.7 544 201.0 546 201.5 547 202.1 548 201.7 550 201.9 552 201.2 553 200.4 554 200.2 556 202.0 558 200.9 559 200.1 560 200.3 562 201.4 564 199.7 565 199.3 566 199.4 568 199.3 570 198.5 571 199.7 572 198.9 574 198.3 576 196.3 577 198.5 578 197.5 580 196.7 582 197.1 583 196.8 584 196.4 586 198.0 588 196.4 589 196.8 590 195.4 592 195.9 594 195.8 595 195.6 596 196.2 598 194.7 600 196.0 601 194.9 602 194.8 604 193.8 606 194.1 607 194.4 608 193.3 610 192.4 612 193.8 613 192.2 614 193.2 616 192.7 618 192.4 619 192.7 620 190.9 622 191.2 624 191.1 625 192.0 626 190.6 628 191.3 630 189.8 631 191.5 632 189.8 634 191.0 636 190.7 637 189.5 638 189.0 640 188.6 642 189.3 643 189.3 644 188.2 646 189.3 648 189.1 649 187.9 650 187.7 652 187.8 654 186.9 655 188.5 656 187.0 658 185.8 660 187.2 661 187.5 662 185.8 664 186.1 666 185.5 667 185.6 668 186.2 670 185.9 672 186.3 673 183.8 674 185.8 676 185.3 678 185.3 679 184.5 680 183.8 682 184.8 684 184.1 685 183.8 686 182.7 688 184.0 690 183.6 691 182.6 692 184.4 694 183.3 696 183.1 697 183.8 698 183.0 700 182.6 702 181.9 703 181.9 704 182.8 706 182.9 708 181.6 709 183.1 710 182.4 712 182.7 714 182.9 715 181.5 716 182.6 718 181.9 720 180.5 721 180.2 722 182.2 724 181.8 726 181.6 727 181.9 728 179.9 730 180.1 732 180.3 733 181.3 734 179.9 736 180.2 738 180.3 739 179.8 740 179.1 742 180.1 744 180.3 745 180.7 746 178.7 748 179.3 750 181.5 751 179.4 752 178.8 754 180.7 756 180.5 757 178.4 758 179.4 760 180.3 762 179.0 763 178.6 764 179.6 766 179.4 768 178.6 769 178.7 770 177.0 772 177.3 774 177.9 775 178.9 776 178.7 778 180.1 780 178.1 781 178.3 782 178.5 784 177.2 786 176.6 787 179.3 788 177.2 790 177.1 792 178.0 793 178.0 794 175.6 796 176.5 798 175.1 799 177.7 800 177.9 802 177.0 804 175.9 805 175.3 806 174.6 808 177.0 810 177.7 811 175.3 812 175.3 814 175.5 815 174.5 817 176.7 818 177.4 820 173.6 822 175.3 823 175.8 824 174.6 826 173.1 828 175.1 829 173.4 830 175.0 832 173.0 833 174.7 835 173.6 836 174.7 838 174.0 840 174.3 841 174.9 842 174.3 844 173.6 846 174.4 847 174.7 848 173.6 850 172.4 851 174.0 853 175.0 854 174.8 856 173.7 858 171.8 859 174.8 860 172.3 862 173.7 864 174.2 865 174.0 866 172.0 868 173.8 869 171.6 871 170.8 872 174.1 874 174.6 876 175.1 877 172.4 878 174.0 880 173.6 881 173.8 883 171.2 884 172.0 886 172.1 888 174.9 889 173.8 890 172.8 892 172.9 894 172.4 895 170.8 896 171.9 898 171.8 899 172.9 901 173.2 902 173.3 904 172.8 906 174.7 907 173.4 908 172.6 910 173.2 912 172.7 913 174.8 914 173.3 916 172.6 917 171.2 919 172.5 920 172.9 922 173.3 924 172.5 925 173.2 926 171.7 928 173.2 930 171.8 931 173.3 932 174.3 934 174.3 935 171.5 937 173.2 938 173.1 940 169.5 942 173.9 943 172.6 944 174.1 946 173.3 947 171.9 949 172.9 950 170.2 952 173.6 953 173.3 955 174.1 956 172.4 958 173.4 960 172.6 961 173.4 962 171.9 964 173.2 965 172.3 967 172.6 968 173.3 970 172.4 972 172.4 973 171.8 974 174.7 976 170.6 978 172.2 979 171.8 980 171.7 982 173.9 983 171.4 985 172.0 986 172.9 988 171.3 990 172.6 991 173.5 992 171.2 994 171.4 996 171.9 997 172.4 998 170.4 1000 172.9 1001 172.0 1003 172.5 1004 172.5 1006 171.7 1008 173.4 1009 171.7 1010 171.9 1012 172.7 1014 173.1 1015 173.9 1016 172.2 1018 170.3 1019 173.0 1021 173.4 1022 173.1 1024 172.0 1026 171.7 1027 171.9 1028 172.4 1030 173.8 1032 171.1 1033 172.7 1034 171.9 1036 172.3 1038 172.4 1039 171.4 1040 172.2 1042 169.9 1044 170.7 1045 171.3 1046 172.7 1048 171.5 1050 172.0 1051 171.6 1052 172.3 1054 173.6 1056 173.6 1057 172.5 1058 171.5 1060 172.6 1062 173.2 1063 172.7 1064 171.7 1066 173.1 1068 173.1 1069 172.4 1070 171.8 1072 174.0 1074 173.0 1075 172.6 1076 173.1 1078 172.0 1080 171.6 1081 173.5 1082 169.8 1084 172.2 1086 170.8 1087 171.8 1088 174.8 1090 174.1" fill="none" stroke="#0050ff" stroke-width="1.0" stroke-linejoin="round"/><path d="M288 330.3 289 332.6 290 330.7 292 326.6 294 320.4 295 314.3 296 309.5 298 305.2 300 301.3 301 296.9 302 292.8 304 289.1 306 285.1 307 281.6 308 278.1 310 275.5 312 272.6 313 270.0 314 267.2 316 264.8 318 263.1 319 260.6 320 258.8 322 257.2 324 255.5 325 254.6 326 253.4 328 251.5 330 251.0 331 249.4 332 248.9 334 248.2 336 245.9 337 245.1 338 243.6 340 241.6 342 241.3 343 239.7 344 238.1 346 236.8 348 237.2 349 235.9 350 235.5 352 233.9 354 233.8 355 232.2 356 232.5 358 230.8 360 229.7 361 229.3 362 228.9 364 228.6 366 228.3 367 226.6 368 226.1 370 225.8 372 226.0 373 225.3 374 224.4 376 222.9 378 222.4 379 222.3 380 223.2 382 223.1 384 221.5 385 220.8 386 219.8 388 220.8 390 219.3 391 219.7 392 218.8 394 219.1 396 218.7 397 218.4 398 217.8 400 217.9 402 217.5 403 216.5 404 217.0 406 216.2 408 216.0 409 215.4 410 214.3 412 215.1 414 213.4 415 215.1 416 214.3 418 213.1 420 214.6 421 213.1 422 212.4 424 213.2 426 211.3 427 210.8 428 211.6 430 211.4 432 210.7 433 210.4 434 211.0 436 210.8 438 209.1 439 210.0 440 210.0 442 210.3 444 211.3 445 209.5 446 209.2 448 209.1 450 209.0 451 208.2 452 208.3 454 208.2 456 208.3 457 208.2 458 207.8 460 208.1 462 206.9 463 207.2 464 207.2 466 205.9 468 206.4 469 207.4 470 207.1 472 206.5 474 206.6 475 205.4 476 205.6 478 205.3 480 205.1 481 205.0 482 206.5 484 206.1 486 205.7 487 204.7 488 204.7 490 203.6 492 203.8 493 203.6 494 204.6 496 204.1 498 203.4 499 204.5 500 204.1 502 202.5 504 202.2 505 204.3 506 203.2 508 203.7 510 204.1 511 203.3 512 202.3 514 202.1 516 202.2 517 201.5 518 202.6 520 202.1 522 201.0 523 201.3 524 202.1 526 202.2 528 201.3 529 201.1 530 200.9 532 201.0 534 200.7 535 201.0 536 200.6 538 200.8 540 201.0 541 200.0 542 200.4 544 200.3 546 199.3 547 199.3 548 198.2 550 198.1 552 199.2 553 199.0 554 199.1 556 199.3 558 197.4 559 197.7 560 198.3 562 196.7 564 197.2 565 197.0 566 197.5 568 198.5 570 196.5 571 197.1 572 197.3 574 195.9 576 195.7 577 196.4 578 195.7 580 195.2 582 195.3 583 195.4 584 194.0 586 194.9 588 193.8 589 194.3 590 194.3 592 193.1 594 194.0 595 193.2 596 192.9 598 192.3 600 192.8 601 193.5 602 193.3 604 193.2 606 192.6 607 191.7 608 191.6 610 191.5 612 191.0 613 191.2 614 190.5 616 190.2 618 188.8 619 190.0 620 189.7 622 189.6 624 189.7 625 188.5 626 189.5 628 187.3 630 189.3 631 188.2 632 187.3 634 187.4 636 187.1 637 188.3 638 186.7 640 186.7 642 185.9 643 186.7 644 186.4 646 187.2 648 185.8 649 186.6 650 185.5 652 184.5 654 185.9 655 185.1 656 185.3 658 185.2 660 185.8 661 184.7 662 184.1 664 183.4 666 183.0 667 183.9 668 183.1 670 183.5 672 183.9 673 183.4 674 182.5 676 182.4 678 183.7 679 182.2 680 182.6 682 181.9 684 182.0 685 182.8 686 182.7 688 181.7 690 181.5 691 181.3 692 182.0 694 180.2 696 182.4 697 180.0 698 180.8 700 180.9 702 179.4 703 180.4 704 180.2 706 180.5 708 179.6 709 179.5 710 178.8 712 178.9 714 179.6 715 179.9 716 179.7 718 179.8 720 179.5 721 179.5 722 178.7 724 178.8 726 179.3 727 178.5 728 180.2 730 178.6 732 180.1 733 178.6 734 177.8 736 178.0 738 178.9 739 178.2 740 178.1 742 178.3 744 177.7 745 178.2 746 178.3 748 178.3 750 177.1 751 178.1 752 178.5 754 176.6 756 177.8 757 178.3 758 176.5 760 177.4 762 177.3 763 177.5 764 176.2 766 176.1 768 175.7 769 177.1 770 174.4 772 176.8 774 177.2 775 176.5 776 177.6 778 176.7 780 176.3 781 175.7 782 174.6 784 175.3 786 175.8 787 175.4 788 176.5 790 174.0 792 175.0 793 174.7 794 175.5 796 175.7 798 175.8 799 175.6 800 175.3 802 173.8 804 175.2 805 173.9 806 173.6 808 173.9 810 173.3 811 176.3 812 173.7 814 174.3 815 172.5 817 173.4 818 173.9 820 173.5 822 173.2 823 171.6 824 173.6 826 172.9 828 173.6 829 172.7 830 172.5 832 172.6 833 172.9 835 171.0 836 171.4 838 171.9 840 173.0 841 171.8 842 172.0 844 171.1 846 171.4 847 172.6 848 171.2 850 169.8 851 171.1 853 172.8 854 172.0 856 170.4 858 170.0 859 173.0 860 170.1 862 169.3 864 169.5 865 172.5 866 171.0 868 169.4 869 170.0 871 171.3 872 171.9 874 170.8 876 170.1 877 171.8 878 170.8 880 169.1 881 169.0 883 170.3 884 168.9 886 170.6 888 171.2 889 171.3 890 171.7 892 171.0 894 170.9 895 168.0 896 169.3 898 167.8 899 171.6 901 169.6 902 171.0 904 172.1 906 169.7 907 171.2 908 169.5 910 167.4 912 170.3 913 170.5 914 171.2 916 172.2 917 170.7 919 171.4 920 170.2 922 170.8 924 170.0 925 169.8 926 169.0 928 171.7 930 171.3 931 168.7 932 169.3 934 171.2 935 167.4 937 173.7 938 170.8 940 170.7 942 169.8 943 171.9 944 170.4 946 170.1 947 169.0 949 172.6 950 171.2 952 171.1 953 169.2 955 168.1 956 168.3 958 171.2 960 170.1 961 170.6 962 170.4 964 171.2 965 170.1 967 170.4 968 169.7 970 170.5 972 167.3 973 172.3 974 171.0 976 171.0 978 170.1 979 169.2 980 170.3 982 166.7 983 169.8 985 168.5 986 170.3 988 171.1 990 167.3 991 171.2 992 172.0 994 171.1 996 170.0 997 168.6 998 170.6 1000 170.5 1001 169.9 1003 169.3 1004 171.2 1006 169.9 1008 170.9 1009 169.7 1010 169.7 1012 169.1 1014 168.1 1015 170.9 1016 171.3 1018 170.1 1019 170.2 1021 170.2 1022 169.3 1024 170.1 1026 169.2 1027 170.2 1028 170.4 1030 171.3 1032 169.5 1033 170.3 1034 168.9 1036 169.6 1038 171.0 1039 170.1 1040 170.5 1042 170.6 1044 172.0 1045 170.2 1046 170.4 1048 171.9 1050 170.1 1051 170.1 1052 171.8 1054 171.8 1056 170.2 1057 169.7 1058 170.2 1060 172.7 1062 171.9 1063 170.0 1064 171.8 1066 169.4 1068 169.4 1069 171.6 1070 170.4 1072 169.9 1074 170.2 1075 171.3 1076 171.0 1078 170.9 1080 168.9 1081 170.0 1082 169.4 1084 170.5 1086 170.2 1087 169.8 1088 171.0 1090 171.7" fill="none" stroke="#a00000" stroke-width="1.0" stroke-linejoin="round"/><path d="M288 329.5 289 331.8 290 329.9 292 325.2 294 319.2 295 312.9 296 308.3 298 303.7 300 299.1 301 294.9 302 290.4 304 286.4 306 283.2 307 279.4 308 276.0 310 272.7 312 269.6 313 266.8 314 264.6 316 261.9 318 260.5 319 258.3 320 255.8 322 254.5 324 252.8 325 251.2 326 249.8 328 249.6 330 248.4 331 247.3 332 246.1 334 244.5 336 244.0 337 241.7 338 240.5 340 238.6 342 238.4 343 236.4 344 235.8 346 235.0 348 233.6 349 232.7 350 232.9 352 231.2 354 230.8 355 230.0 356 229.3 358 228.3 360 227.7 361 226.7 362 227.2 364 225.0 366 224.7 367 224.5 368 223.4 370 223.2 372 222.2 373 221.4 374 221.2 376 222.5 378 219.8 379 219.9 380 219.1 382 219.5 384 218.7 385 218.3 386 217.5 388 217.0 390 216.8 391 216.5 392 215.8 394 215.3 396 215.2 397 215.4 398 214.4 400 214.9 402 214.0 403 213.0 404 214.4 406 213.9 408 214.2 409 211.5 410 212.2 412 211.8 414 211.6 415 211.5 416 211.7 418 210.8 420 211.2 421 210.0 422 209.3 424 208.6 426 210.2 427 209.7 428 209.7 430 210.0 432 209.5 433 208.7 434 207.8 436 207.5 438 208.5 439 207.4 440 207.7 442 207.3 444 206.7 445 206.5 446 206.4 448 206.6 450 206.4 451 206.3 452 205.9 454 206.1 456 205.7 457 205.7 458 204.9 460 206.0 462 205.6 463 205.1 464 205.1 466 206.2 468 204.2 469 203.8 470 205.4 472 205.1 474 203.5 475 204.9 476 203.9 478 203.9 480 203.9 481 203.3 482 204.0 484 204.2 486 203.4 487 203.1 488 202.7 490 202.2 492 201.7 493 202.1 494 202.3 496 201.9 498 202.7 499 202.3 500 202.2 502 202.5 504 201.1 505 202.0 506 202.1 508 201.7 510 200.2 511 200.2 512 200.6 514 200.3 516 201.6 517 200.9 518 200.1 520 200.7 522 200.8 523 200.3 524 199.3 526 198.8 528 200.1 529 198.6 530 200.0 532 199.1 534 199.0 535 199.1 536 197.8 538 198.2 540 198.4 541 197.7 542 198.6 544 197.8 546 197.1 547 197.5 548 196.5 550 198.0 552 198.0 553 197.3 554 197.1 556 197.1 558 195.8 559 196.2 560 196.8 562 196.5 564 195.7 565 196.5 566 195.4 568 196.0 570 195.2 571 194.9 572 195.7 574 194.9 576 194.7 577 194.2 578 193.7 580 193.9 582 194.5 583 193.8 584 193.9 586 193.3 588 192.4 589 192.2 590 191.9 592 192.8 594 193.1 595 192.5 596 191.7 598 191.8 600 192.0 601 191.1 602 190.2 604 190.8 606 190.2 607 189.0 608 190.3 610 189.3 612 190.4 613 189.8 614 189.2 616 188.2 618 188.6 619 188.7 620 187.8 622 187.1 624 187.0 625 188.1 626 187.0 628 187.5 630 186.6 631 186.2 632 187.3 634 185.2 636 187.4 637 186.0 638 186.9 640 186.1 642 184.7 643 184.7 644 184.2 646 185.3 648 185.5 649 185.3 650 182.9 652 183.8 654 184.8 655 184.1 656 183.9 658 183.2 660 183.9 661 184.4 662 183.7 664 182.8 666 182.9 667 183.1 668 183.4 670 181.8 672 182.0 673 182.7 674 182.4 676 180.8 678 181.9 679 180.8 680 181.6 682 181.4 684 181.5 685 180.8 686 180.7 688 181.3 690 179.6 691 180.7 692 180.7 694 179.5 696 180.5 697 180.1 698 179.6 700 179.1 702 180.6 703 180.1 704 180.9 706 178.9 708 179.0 709 178.7 710 178.7 712 179.3 714 178.4 715 179.4 716 179.2 718 178.7 720 177.7 721 179.2 722 176.1 724 178.6 726 179.1 727 177.8 728 178.4 730 177.3 732 177.0 733 178.3 734 177.1 736 177.8 738 177.1 739 177.6 740 177.3 742 176.8 744 175.9 745 177.3 746 176.3 748 175.6 750 177.3 751 175.8 752 176.8 754 176.2 756 176.0 757 176.5 758 175.1 760 175.2 762 176.0 763 176.1 764 175.9 766 175.4 768 175.3 769 176.9 770 175.1 772 175.2 774 175.8 775 176.1 776 176.8 778 175.0 780 175.8 781 175.5 782 172.8 784 176.2 786 176.6 787 174.2 788 176.3 790 175.2 792 174.6 793 175.4 794 173.4 796 174.4 798 174.2 799 174.9 800 175.1 802 174.3 804 172.2 805 174.0 806 173.3 808 173.3 810 174.5 811 172.8 812 174.0 814 175.0 815 175.1 817 172.6 818 171.3 820 172.4 822 171.9 823 174.0 824 175.6 826 170.9 828 171.6 829 174.1 830 172.2 832 172.4 833 172.4 835 173.2 836 171.7 838 171.3 840 173.3 841 171.5 842 173.3 844 171.0 846 171.8 847 170.6 848 171.0 850 173.1 851 172.5 853 171.2 854 170.6 856 169.8 858 172.3 859 171.1 860 168.3 862 170.8 864 171.8 865 172.7 866 170.2 868 169.6 869 171.5 871 169.6 872 169.2 874 168.8 876 169.6 877 170.7 878 171.2 880 169.2 881 171.8 883 168.4 884 169.5 886 170.5 888 172.3 889 171.2 890 171.9 892 171.4 894 169.6 895 167.6 896 171.4 898 171.1 899 167.7 901 170.0 902 169.7 904 171.0 906 168.3 907 170.0 908 169.2 910 169.1 912 168.3 913 169.6 914 170.8 916 169.4 917 170.2 919 172.1 920 170.8 922 171.8 924 170.3 925 170.6 926 170.5 928 172.0 930 169.4 931 169.8 932 168.8 934 171.4 935 170.6 937 170.8 938 169.5 940 170.9 942 169.4 943 171.3 944 169.5 946 169.9 947 170.1 949 170.2 950 170.1 952 168.9 953 168.8 955 168.9 956 169.8 958 170.6 960 170.7 961 170.3 962 170.1 964 170.6 965 171.4 967 171.2 968 169.1 970 170.8 972 170.0 973 170.5 974 169.6 976 170.3 978 168.7 979 169.7 980 171.3 982 169.9 983 171.2 985 170.4 986 168.9 988 171.6 990 169.3 991 170.0 992 168.8 994 169.9 996 168.9 997 169.8 998 168.6 1000 169.7 1001 170.8 1003 169.8 1004 169.9 1006 167.9 1008 170.9 1009 171.8 1010 168.5 1012 170.7 1014 171.9 1015 171.1 1016 170.9 1018 170.5 1019 167.5 1021 170.3 1022 169.3 1024 169.5 1026 170.7 1027 172.1 1028 168.0 1030 170.7 1032 171.1 1033 169.5 1034 171.1 1036 170.8 1038 169.1 1039 170.7 1040 170.0 1042 170.6 1044 168.5 1045 172.1 1046 173.5 1048 170.1 1050 170.7 1051 167.0 1052 170.2 1054 170.2 1056 169.4 1057 170.0 1058 169.6 1060 171.4 1062 170.7 1063 168.7 1064 171.8 1066 170.8 1068 170.0 1069 169.6 1070 170.4 1072 169.7 1074 169.5 1075 170.3 1076 171.3 1078 169.9 1080 171.1 1081 171.1 1082 169.1 1084 170.0 1086 171.8 1087 172.6 1088 171.5 1090 170.3" fill="none" stroke="#800000" stroke-width="1.0" stroke-linejoin="round"/><path d="M288 329.8 289 332.1 290 329.8 292 325.5 294 319.7 295 313.5 296 308.5 298 304.1 300 299.7 301 295.2 302 291.1 304 287.2 306 284.0 307 280.2 308 276.8 310 273.6 312 270.1 313 267.7 314 265.3 316 263.5 318 261.1 319 258.8 320 257.1 322 255.7 324 253.7 325 252.6 326 251.0 328 250.0 330 248.8 331 248.3 332 247.1 334 245.3 336 243.3 337 242.6 338 241.2 340 240.2 342 238.0 343 237.5 344 236.6 346 235.5 348 235.0 349 233.7 350 233.1 352 232.4 354 232.1 355 231.1 356 230.0 358 230.0 360 228.6 361 227.5 362 226.8 364 225.1 366 226.4 367 225.0 368 224.5 370 223.5 372 223.2 373 222.9 374 221.9 376 221.6 378 219.8 379 220.6 380 219.7 382 219.0 384 218.8 385 218.7 386 218.2 388 217.9 390 217.8 391 216.9 392 215.6 394 215.3 396 216.3 397 214.9 398 215.0 400 214.7 402 214.5 403 213.5 404 214.1 406 213.8 408 212.2 409 213.6 410 212.6 412 211.7 414 211.7 415 211.5 416 210.0 418 210.0 420 210.2 421 209.6 422 209.9 424 209.8 426 208.7 427 208.3 428 209.5 430 207.7 432 207.2 433 207.6 434 208.6 436 207.3 438 207.8 439 206.5 440 207.1 442 206.9 444 207.2 445 206.5 446 206.2 448 206.9 450 206.2 451 206.3 452 204.9 454 205.3 456 205.5 457 204.4 458 204.8 460 204.8 462 204.7 463 203.7 464 204.1 466 205.0 468 204.2 469 203.9 470 204.9 472 202.8 474 202.5 475 203.6 476 202.3 478 202.4 480 202.4 481 202.9 482 201.2 484 201.9 486 202.3 487 201.3 488 201.5 490 201.9 492 200.8 493 200.9 494 202.0 496 200.8 498 200.4 499 199.9 500 199.6 502 200.1 504 199.8 505 200.5 506 199.8 508 200.0 510 198.9 511 198.6 512 199.4 514 200.2 516 198.6 517 198.1 518 198.7 520 199.2 522 197.8 523 198.5 524 197.9 526 197.9 528 197.2 529 198.2 530 196.6 532 197.0 534 195.7 535 197.4 536 197.9 538 196.6 540 197.2 541 196.2 542 197.2 544 195.4 546 195.6 547 195.1 548 195.4 550 195.9 552 194.3 553 194.0 554 193.7 556 194.7 558 194.1 559 193.6 560 194.1 562 193.5 564 193.3 565 192.6 566 194.0 568 191.8 570 192.5 571 192.2 572 192.4 574 191.2 576 191.2 577 191.3 578 190.6 580 191.3 582 190.2 583 191.0 584 190.5 586 189.0 588 190.2 589 190.0 590 189.5 592 189.0 594 188.6 595 188.6 596 188.4 598 188.1 600 186.4 601 188.5 602 187.2 604 186.6 606 187.4 607 186.2 608 186.0 610 187.6 612 184.7 613 185.0 614 185.0 616 185.6 618 184.9 619 185.0 620 184.8 622 183.5 624 185.1 625 185.0 626 183.8 628 182.8 630 183.6 631 182.3 632 182.9 634 182.4 636 182.2 637 181.7 638 181.4 640 181.7 642 181.9 643 182.0 644 180.2 646 180.5 648 179.9 649 180.7 650 179.8 652 179.4 654 179.0 655 179.6 656 178.6 658 179.9 660 179.1 661 179.4 662 179.4 664 178.3 666 177.7 667 178.5 668 178.2 670 178.0 672 177.8 673 176.9 674 176.6 676 177.9 678 176.6 679 176.4 680 176.8 682 177.4 684 176.3 685 176.8 686 175.7 688 175.6 690 174.8 691 175.8 692 175.3 694 175.5 696 174.9 697 175.4 698 175.2 700 175.5 702 174.7 703 174.5 704 173.4 706 174.2 708 174.5 709 173.6 710 173.5 712 174.4 714 173.9 715 174.1 716 174.0 718 173.7 720 173.8 721 174.1 722 173.3 724 173.8 726 174.7 727 173.8 728 172.5 730 173.0 732 172.7 733 172.9 734 173.6 736 174.0 738 173.9 739 172.8 740 173.0 742 172.6 744 173.1 745 170.9 746 173.1 748 171.4 750 172.7 751 171.3 752 170.8 754 170.8 756 171.0 757 171.6 758 173.2 760 173.3 762 171.7 763 171.1 764 172.9 766 170.7 768 171.6 769 172.5 770 171.4 772 169.5 774 171.9 775 171.1 776 171.0 778 171.6 780 170.2 781 169.8 782 170.5 784 169.6 786 170.8 787 170.2 788 171.7 790 169.7 792 170.8 793 172.2 794 170.6 796 171.8 798 171.5 799 169.7 800 169.6 802 171.2 804 172.4 805 169.6 806 171.3 808 169.3 810 169.2 811 169.5 812 167.8 814 169.0 815 169.8 817 170.0 818 169.5 820 169.1 822 170.7 823 169.6 824 169.2 826 170.7 828 170.5 829 168.7 830 170.5 832 167.6 833 168.3 835 168.4 836 169.4 838 169.7 840 168.3 841 168.1 842 167.3 844 171.2 846 167.8 847 167.4 848 168.9 850 167.7 851 168.7 853 168.5 854 169.5 856 167.1 858 167.7 859 168.2 860 168.1 862 167.3 864 166.0 865 165.9 866 167.4 868 168.4 869 166.8 871 169.4 872 165.6 874 166.5 876 167.9 877 167.5 878 168.1 880 166.8 881 168.3 883 167.2 884 168.0 886 169.4 888 167.2 889 167.7 890 168.3 892 168.8 894 167.9 895 167.8 896 168.2 898 168.0 899 167.6 901 168.3 902 166.3 904 166.9 906 166.5 907 168.3 908 167.8 910 167.0 912 167.3 913 168.0 914 167.9 916 166.5 917 166.1 919 165.3 920 167.5 922 166.3 924 166.2 925 166.8 926 167.0 928 167.1 930 166.1 931 166.1 932 168.1 934 167.5 935 168.1 937 166.9 938 167.7 940 166.7 942 165.5 943 167.7 944 165.9 946 166.8 947 167.3 949 167.3 950 167.2 952 166.3 953 164.9 955 167.0 956 167.4 958 165.7 960 166.3 961 167.9 962 166.1 964 167.4 965 166.8 967 166.2 968 167.7 970 167.3 972 166.5 973 168.8 974 167.5 976 169.2 978 166.8 979 167.3 980 168.3 982 167.9 983 169.1 985 167.3 986 168.2 988 167.1 990 166.1 991 167.7 992 168.4 994 165.7 996 167.9 997 165.8 998 166.6 1000 165.8 1001 167.7 1003 169.1 1004 167.8 1006 167.0 1008 165.1 1009 168.2 1010 166.6 1012 168.7 1014 167.6 1015 166.0 1016 166.1 1018 166.7 1019 167.2 1021 166.7 1022 166.2 1024 167.5 1026 167.5 1027 167.1 1028 167.0 1030 169.4 1032 167.7 1033 167.8 1034 167.5 1036 168.2 1038 166.2 1039 166.6 1040 167.4 1042 164.0 1044 166.5 1045 166.0 1046 167.1 1048 166.8 1050 166.3 1051 168.3 1052 169.3 1054 165.2 1056 169.5 1057 169.2 1058 167.9 1060 168.4 1062 167.5 1063 165.8 1064 166.7 1066 170.1 1068 168.4 1069 167.5 1070 167.9 1072 170.1 1074 168.5 1075 166.6 1076 167.8 1078 168.5 1080 169.4 1081 166.7 1082 165.0 1084 168.8 1086 166.8 1087 167.8 1088 169.2 1090 169.6" fill="none" stroke="#20e0c0" stroke-width="1.0" stroke-linejoin="round"/><path d="M288 328.8 289 330.8 290 328.9 292 323.9 294 317.5 295 310.9 296 306.4 298 301.8 300 297.2 301 292.4 302 288.0 304 284.3 306 280.2 307 276.8 308 273.4 310 270.2 312 267.0 313 264.1 314 261.8 316 259.7 318 257.5 319 254.9 320 253.5 322 251.1 324 250.6 325 248.8 326 247.7 328 246.9 330 246.0 331 244.6 332 242.7 334 242.2 336 240.4 337 238.9 338 237.4 340 237.1 342 235.2 343 234.5 344 232.5 346 231.5 348 230.4 349 229.7 350 228.7 352 227.9 354 227.4 355 226.3 356 226.2 358 224.9 360 224.6 361 223.7 362 222.6 364 221.4 366 221.5 367 220.5 368 220.1 370 218.9 372 218.6 373 218.7 374 217.3 376 217.2 378 216.9 379 215.4 380 215.8 382 215.7 384 216.1 385 215.3 386 213.5 388 215.5 390 212.7 391 213.5 392 213.1 394 211.5 396 212.7 397 211.7 398 211.5 400 210.8 402 209.6 403 208.9 404 210.6 406 209.9 408 207.5 409 208.2 410 207.1 412 206.9 414 207.7 415 207.9 416 206.6 418 206.6 420 205.7 421 206.0 422 204.6 424 206.7 426 206.5 427 205.6 428 205.7 430 204.8 432 205.0 433 203.6 434 204.1 436 203.7 438 204.1 439 203.6 440 203.6 442 203.7 444 202.8 445 204.0 446 202.9 448 202.8 450 201.6 451 202.3 452 203.0 454 201.8 456 201.4 457 201.1 458 200.7 460 200.6 462 200.6 463 200.0 464 200.8 466 200.1 468 200.2 469 199.9 470 199.7 472 200.0 474 199.8 475 199.5 476 200.7 478 199.0 480 198.5 481 199.0 482 199.0 484 198.7 486 197.8 487 198.6 488 197.5 490 198.8 492 198.1 493 196.7 494 197.8 496 198.2 498 197.0 499 197.3 500 196.9 502 196.4 504 196.8 505 196.1 506 196.4 508 196.1 510 196.1 511 196.6 512 196.2 514 195.9 516 194.9 517 195.7 518 195.7 520 194.8 522 194.4 523 194.6 524 194.7 526 195.2 528 193.9 529 193.4 530 194.0 532 193.6 534 194.1 535 193.8 536 193.2 538 193.2 540 192.6 541 192.6 542 192.9 544 192.8 546 191.9 547 192.8 548 191.6 550 191.9 552 192.3 553 191.9 554 191.4 556 189.5 558 190.8 559 191.3 560 189.8 562 190.8 564 190.7 565 189.5 566 188.9 568 188.1 570 188.9 571 189.3 572 188.6 574 187.6 576 187.2 577 188.4 578 186.7 580 187.6 582 188.0 583 186.7 584 186.7 586 187.5 588 187.0 589 186.1 590 185.7 592 186.3 594 184.8 595 185.7 596 185.5 598 184.3 600 183.8 601 184.4 602 184.1 604 183.5 606 182.8 607 183.5 608 183.1 610 183.1 612 183.5 613 181.8 614 182.2 616 181.2 618 181.8 619 180.5 620 180.9 622 180.2 624 181.3 625 180.7 626 180.4 628 178.8 630 179.4 631 179.7 632 180.6 634 179.6 636 178.1 637 179.0 638 178.1 640 179.3 642 177.9 643 177.3 644 177.4 646 178.1 648 177.9 649 176.8 650 177.6 652 177.6 654 176.5 655 177.0 656 176.9 658 176.1 660 175.9 661 176.4 662 175.4 664 174.5 666 174.7 667 174.3 668 174.2 670 174.5 672 174.3 673 174.8 674 174.6 676 174.4 678 174.4 679 172.5 680 172.7 682 174.2 684 172.8 685 173.0 686 172.7 688 172.5 690 172.1 691 173.2 692 173.0 694 172.6 696 171.6 697 172.1 698 172.1 700 172.1 702 171.4 703 171.5 704 170.8 706 170.4 708 171.1 709 172.0 710 172.2 712 171.4 714 171.1 715 171.2 716 170.9 718 171.1 720 170.1 721 171.0 722 170.0 724 170.7 726 171.0 727 170.7 728 171.1 730 170.6 732 172.2 733 170.5 734 169.8 736 169.6 738 170.9 739 171.2 740 169.4 742 171.3 744 170.3 745 170.4 746 170.0 748 169.4 750 169.0 751 171.6 752 170.3 754 171.6 756 170.5 757 171.1 758 170.1 760 170.3 762 169.6 763 169.3 764 169.6 766 169.1 768 168.7 769 169.7 770 169.6 772 170.2 774 170.3 775 168.9 776 168.1 778 169.2 780 170.6 781 169.9 782 169.0 784 169.1 786 170.0 787 169.0 788 169.0 790 170.3 792 169.8 793 168.4 794 169.7 796 169.0 798 167.6 799 167.9 800 168.0 802 169.7 804 169.2 805 168.5 806 168.4 808 167.6 810 167.6 811 167.2 812 166.8 814 168.2 815 169.0 817 167.1 818 167.7 820 167.7 822 168.2 823 167.9 824 165.3 826 169.4 828 166.8 829 167.2 830 166.7 832 167.8 833 167.3 835 167.7 836 167.5 838 167.6 840 165.4 841 165.9 842 166.4 844 166.5 846 167.5 847 168.4 848 166.4 850 167.7 851 167.3 853 167.7 854 167.1 856 167.2 858 165.1 859 164.9 860 166.5 862 165.8 864 166.5 865 166.1 866 166.8 868 165.9 869 168.1 871 169.1 872 164.2 874 166.1 876 166.2 877 165.6 878 166.0 880 165.3 881 167.5 883 167.0 884 164.7 886 165.9 888 167.1 889 167.8 890 164.1 892 165.0 894 165.5 895 167.9 896 166.9 898 167.6 899 168.5 901 166.9 902 166.7 904 163.8 906 167.8 907 165.1 908 165.8 910 165.4 912 166.1 913 165.1 914 166.3 916 164.8 917 165.4 919 167.3 920 166.4 922 164.1 924 164.2 925 167.2 926 165.8 928 164.2 930 165.6 931 166.9 932 165.4 934 166.0 935 168.1 937 165.6 938 165.9 940 165.4 942 164.0 943 164.0 944 164.3 946 164.2 947 167.3 949 167.4 950 165.7 952 166.2 953 165.6 955 166.7 956 165.5 958 164.3 960 166.3 961 166.3 962 166.8 964 168.6 965 166.4 967 166.4 968 165.9 970 167.0 972 164.5 973 164.9 974 163.9 976 169.3 978 166.8 979 165.3 980 165.6 982 165.6 983 166.1 985 164.9 986 166.5 988 166.3 990 163.2 991 166.4 992 164.9 994 165.9 996 165.2 997 166.0 998 165.0 1000 164.7 1001 166.3 1003 166.7 1004 166.8 1006 167.2 1008 164.4 1009 164.0 1010 168.3 1012 167.1 1014 166.0 1015 165.1 1016 167.6 1018 166.9 1019 166.1 1021 165.2 1022 167.3 1024 165.1 1026 167.3 1027 165.2 1028 167.1 1030 166.8 1032 165.5 1033 165.9 1034 165.5 1036 166.6 1038 166.8 1039 165.0 1040 164.3 1042 166.0 1044 166.0 1045 167.4 1046 164.4 1048 167.0 1050 166.1 1051 165.0 1052 169.9 1054 167.0 1056 168.3 1057 167.2 1058 166.7 1060 168.5 1062 165.4 1063 164.0 1064 167.2 1066 166.8 1068 164.8 1069 166.4 1070 168.2 1072 166.2 1074 167.6 1075 165.4 1076 167.7 1078 165.3 1080 168.5 1081 167.2 1082 169.5 1084 164.0 1086 167.0 1087 167.4 1088 166.6 1090 166.9" fill="none" stroke="#6000b0" stroke-width="1.0" stroke-linejoin="round"/></g>
<path d="M287.5 357.5V156.5H1104.5V357.5H287.5" fill="none" stroke="#707070" stroke-width="1.3"/>
<line x1="283.5" y1="165.2" x2="287.5" y2="165.2" stroke="#707070"/>
<text x="280.5" y="169.5" font-family="Liberation Sans" font-size="10.5" fill="#8a1c28" stroke="#8a1c28" stroke-width="0.15" text-anchor="end">1,5</text>
<line x1="283.5" y1="184.67999999999998" x2="287.5" y2="184.67999999999998" stroke="#707070"/>
<text x="280.5" y="188.98" font-family="Liberation Sans" font-size="10.5" fill="#8a1c28" stroke="#8a1c28" stroke-width="0.15" text-anchor="end">1,4</text>
<line x1="283.5" y1="204.16" x2="287.5" y2="204.16" stroke="#707070"/>
<text x="280.5" y="208.46" font-family="Liberation Sans" font-size="10.5" fill="#8a1c28" stroke="#8a1c28" stroke-width="0.15" text-anchor="end">1,3</text>
<line x1="283.5" y1="223.64" x2="287.5" y2="223.64" stroke="#707070"/>
<text x="280.5" y="227.94" font-family="Liberation Sans" font-size="10.5" fill="#8a1c28" stroke="#8a1c28" stroke-width="0.15" text-anchor="end">1,2</text>
<line x1="283.5" y1="243.12" x2="287.5" y2="243.12" stroke="#707070"/>
<text x="280.5" y="247.42000000000002" font-family="Liberation Sans" font-size="10.5" fill="#8a1c28" stroke="#8a1c28" stroke-width="0.15" text-anchor="end">1,1</text>
<line x1="283.5" y1="262.6" x2="287.5" y2="262.6" stroke="#707070"/>
<text x="280.5" y="266.90000000000003" font-family="Liberation Sans" font-size="10.5" fill="#8a1c28" stroke="#8a1c28" stroke-width="0.15" text-anchor="end">1,0</text>
<line x1="283.5" y1="282.08" x2="287.5" y2="282.08" stroke="#707070"/>
<text x="280.5" y="286.38" font-family="Liberation Sans" font-size="10.5" fill="#8a1c28" stroke="#8a1c28" stroke-width="0.15" text-anchor="end">0,9</text>
<line x1="283.5" y1="301.56" x2="287.5" y2="301.56" stroke="#707070"/>
<text x="280.5" y="305.86" font-family="Liberation Sans" font-size="10.5" fill="#8a1c28" stroke="#8a1c28" stroke-width="0.15" text-anchor="end">0,8</text>
<line x1="283.5" y1="321.03999999999996" x2="287.5" y2="321.03999999999996" stroke="#707070"/>
<text x="280.5" y="325.34" font-family="Liberation Sans" font-size="10.5" fill="#8a1c28" stroke="#8a1c28" stroke-width="0.15" text-anchor="end">0,7</text>
<line x1="283.5" y1="340.52" x2="287.5" y2="340.52" stroke="#707070"/>
<text x="280.5" y="344.82" font-family="Liberation Sans" font-size="10.5" fill="#8a1c28" stroke="#8a1c28" stroke-width="0.15" text-anchor="end">0,6</text>
<line x1="287.5" y1="357.5" x2="287.5" y2="360.5" stroke="#707070"/>
<text x="288.0" y="371.0" font-family="Liberation Sans" font-weight="bold" font-size="9.5" letter-spacing="0.9" fill="#111" text-anchor="middle">0d</text>
<line x1="337.22" y1="357.5" x2="337.22" y2="360.5" stroke="#707070"/>
<text x="337.72" y="371.0" font-family="Liberation Sans" font-weight="bold" font-size="9.5" letter-spacing="0.9" fill="#111" text-anchor="middle">1d</text>
<line x1="386.94" y1="357.5" x2="386.94" y2="360.5" stroke="#707070"/>
<text x="387.44" y="371.0" font-family="Liberation Sans" font-weight="bold" font-size="9.5" letter-spacing="0.9" fill="#111" text-anchor="middle">2d</text>
<line x1="436.65999999999997" y1="357.5" x2="436.65999999999997" y2="360.5" stroke="#707070"/>
<text x="437.15999999999997" y="371.0" font-family="Liberation Sans" font-weight="bold" font-size="9.5" letter-spacing="0.9" fill="#111" text-anchor="middle">3d</text>
<line x1="486.38" y1="357.5" x2="486.38" y2="360.5" stroke="#707070"/>
<text x="486.88" y="371.0" font-family="Liberation Sans" font-weight="bold" font-size="9.5" letter-spacing="0.9" fill="#111" text-anchor="middle">4d</text>
<line x1="536.1" y1="357.5" x2="536.1" y2="360.5" stroke="#707070"/>
<text x="536.6" y="371.0" font-family="Liberation Sans" font-weight="bold" font-size="9.5" letter-spacing="0.9" fill="#111" text-anchor="middle">5d</text>
<line x1="585.8199999999999" y1="357.5" x2="585.8199999999999" y2="360.5" stroke="#707070"/>
<text x="586.3199999999999" y="371.0" font-family="Liberation Sans" font-weight="bold" font-size="9.5" letter-spacing="0.9" fill="#111" text-anchor="middle">6d</text>
<line x1="635.54" y1="357.5" x2="635.54" y2="360.5" stroke="#707070"/>
<text x="636.04" y="371.0" font-family="Liberation Sans" font-weight="bold" font-size="9.5" letter-spacing="0.9" fill="#111" text-anchor="middle">7d</text>
<line x1="685.26" y1="357.5" x2="685.26" y2="360.5" stroke="#707070"/>
<text x="685.76" y="371.0" font-family="Liberation Sans" font-weight="bold" font-size="9.5" letter-spacing="0.9" fill="#111" text-anchor="middle">8d</text>
<line x1="734.98" y1="357.5" x2="734.98" y2="360.5" stroke="#707070"/>
<text x="735.48" y="371.0" font-family="Liberation Sans" font-weight="bold" font-size="9.5" letter-spacing="0.9" fill="#111" text-anchor="middle">9d</text>
<line x1="784.7" y1="357.5" x2="784.7" y2="360.5" stroke="#707070"/>
<text x="785.2" y="371.0" font-family="Liberation Sans" font-weight="bold" font-size="9.5" letter-spacing="0.9" fill="#111" text-anchor="middle">10d</text>
<line x1="834.42" y1="357.5" x2="834.42" y2="360.5" stroke="#707070"/>
<text x="834.92" y="371.0" font-family="Liberation Sans" font-weight="bold" font-size="9.5" letter-spacing="0.9" fill="#111" text-anchor="middle">11d</text>
<line x1="884.14" y1="357.5" x2="884.14" y2="360.5" stroke="#707070"/>
<text x="884.64" y="371.0" font-family="Liberation Sans" font-weight="bold" font-size="9.5" letter-spacing="0.9" fill="#111" text-anchor="middle">12d</text>
<line x1="933.86" y1="357.5" x2="933.86" y2="360.5" stroke="#707070"/>
<text x="934.36" y="371.0" font-family="Liberation Sans" font-weight="bold" font-size="9.5" letter-spacing="0.9" fill="#111" text-anchor="middle">13d</text>
<line x1="983.5799999999999" y1="357.5" x2="983.5799999999999" y2="360.5" stroke="#707070"/>
<text x="984.0799999999999" y="371.0" font-family="Liberation Sans" font-weight="bold" font-size="9.5" letter-spacing="0.9" fill="#111" text-anchor="middle">14d</text>
<line x1="1033.3" y1="357.5" x2="1033.3" y2="360.5" stroke="#707070"/>
<text x="1033.8" y="371.0" font-family="Liberation Sans" font-weight="bold" font-size="9.5" letter-spacing="0.9" fill="#111" text-anchor="middle">15d</text>
<line x1="1083.02" y1="357.5" x2="1083.02" y2="360.5" stroke="#707070"/>
<text x="1083.52" y="371.0" font-family="Liberation Sans" font-weight="bold" font-size="9.5" letter-spacing="0.9" fill="#111" text-anchor="middle">16d</text>
</svg>
<div class="a" style="left:273px;top:456px;width:124px;height:15px;background:#cdcdcd"></div>
<svg class="a" style="left:0;top:0" width="1365" height="711">
<defs><clipPath id="c2"><rect x="287.5" y="476.5" width="817.0" height="201.0"/></clipPath></defs>
<rect x="287.5" y="476.5" width="817.0" height="201.0" fill="#fff"/>
<g clip-path="url(#c2)"><path d="M288 650.8 288 651.1 290 650.9 290 650.9 292 650.9 292 651.5 294 651.9 294 652.3 296 651.9 296 651.8 298 652.6 298 653.3 300 653.4 300 652.7 302 653.4 302 654.3 304 653.8 304 654.3 306 654.2 306 654.2 308 654.4 308 653.9 310 654.1 310 654.2 312 653.7 312 653.4 314 654.2 314 653.4 316 653.5 316 652.9 318 653.0 318 652.3 320 652.0 320 651.7 322 651.7 322 651.1 324 651.0 324 650.7 326 649.8 326 649.9 328 648.7 328 648.6 330 649.2 330 648.1 332 648.2 332 647.5 334 647.1 334 647.4 336 646.4 336 646.0 338 645.2 338 645.5 340 644.4 340 644.6 342 643.9 342 643.6 344 642.3 344 642.2 346 641.0 346 641.2 348 640.7 348 640.2 350 640.2 350 639.5 352 638.5 352 638.7 354 638.0 354 637.6 356 636.9 356 636.8 358 636.2 358 635.6 360 635.2 360 635.1 362 634.0 362 634.3 364 633.8 364 633.4 366 632.2 366 632.2 368 632.0 368 631.7 370 630.7 370 630.9 372 630.6 372 629.6 374 629.8 374 629.2 376 628.7 376 628.5 378 628.0 378 627.1 380 627.4 380 627.3 382 627.2 382 626.3 384 626.0 384 625.4 386 625.3 386 625.0 388 624.7 388 624.3 390 623.7 390 623.6 392 623.0 392 622.0 394 622.2 394 622.6 396 621.1 396 621.3 398 621.4 398 620.4 400 620.4 400 620.3 402 620.0 402 619.8 404 619.1 404 618.4 406 618.6 406 618.0 408 617.2 408 618.0 410 617.1 410 617.0 412 617.0 412 616.7 414 616.0 414 615.5 416 615.6 416 615.0 418 614.5 418 614.4 420 613.8 420 613.7 422 613.4 422 612.6 424 612.7 424 612.6 426 612.1 426 612.4 428 611.9 428 611.2 430 611.0 430 610.4 432 610.6 432 610.9 434 609.4 434 609.4 436 609.9 436 608.7 438 608.9 438 609.3 440 608.5 440 608.3 442 607.2 442 607.8 444 607.3 444 607.1 446 606.8 446 606.8 448 606.1 448 605.5 450 605.4 450 605.7 452 605.5 452 604.8 454 604.8 454 604.5 456 604.6 456 603.0 458 603.1 458 603.5 460 602.6 460 602.2 462 603.3 462 602.3 464 602.0 464 601.3 466 601.4 466 601.1 468 600.8 468 599.8 470 599.5 470 600.2 472 600.1 472 598.5 474 599.5 474 599.1 476 598.6 476 598.2 478 597.8 478 597.7 480 597.9 480 597.2 482 597.0 482 596.1 484 596.6 484 596.8 486 596.4 486 595.3 488 595.7 488 596.1 490 595.3 490 594.8 492 594.1 492 594.7 494 593.8 494 593.5 496 593.8 496 593.4 498 592.4 498 592.2 500 592.3 500 592.2 502 591.7 502 591.9 504 591.7 504 591.7 506 591.2 506 591.0 508 589.7 508 590.6 510 589.8 510 589.6 512 589.9 512 589.2 514 590.2 514 589.2 516 588.7 516 589.6 518 589.0 518 588.0 520 588.3 520 588.4 522 587.9 522 587.8 524 587.1 524 587.0 526 587.1 526 587.0 528 586.6 528 585.9 530 586.1 530 585.8 532 585.9 532 586.2 534 585.8 534 585.1 536 585.2 536 585.4 538 585.5 538 584.7 540 584.7 540 584.6 542 584.4 542 584.0 544 583.9 544 583.5 546 583.3 546 583.0 548 583.1 548 583.4 550 583.1 550 582.8 552 582.9 552 582.5 554 582.1 554 582.7 556 582.9 556 581.7 558 582.0 558 581.6 560 582.2 560 581.0 562 581.2 562 581.4 564 581.3 564 581.1 566 581.0 566 580.9 568 581.1 568 580.1 570 580.5 570 580.3 572 580.2 572 581.0 574 579.8 574 580.0 576 579.9 576 579.6 578 579.9 578 579.1 580 579.5 580 579.5 582 579.4 582 578.9 584 578.6 584 578.9 586 579.2 586 578.1 588 578.8 588 577.9 590 578.2 590 578.3 592 578.2 592 577.7 594 577.4 594 577.7 596 577.2 596 576.7 598 577.4 598 577.6 600 577.5 600 577.5 602 577.1 602 577.1 604 577.2 604 576.4 606 577.4 606 576.9 608 575.5 608 575.8 610 575.9 610 575.8 612 575.2 612 575.6 614 575.6 614 576.0 616 575.5 616 575.6 618 575.5 618 575.4 620 575.1 620 575.1 622 574.5 622 575.2 624 574.7 624 573.9 626 574.4 626 573.9 628 573.8 628 573.6 630 573.8 630 574.4 632 573.9 632 573.9 634 574.2 634 573.7 636 573.9 636 573.9 638 573.1 638 573.1 640 573.3 640 573.3 642 573.0 642 572.9 644 572.8 644 572.5 646 572.6 646 572.2 648 572.0 648 572.0 650 572.3 650 572.1 652 571.7 652 571.8 654 571.6 654 572.4 656 572.4 656 571.2 658 571.1 658 570.6 660 570.8 660 570.9 662 570.8 662 571.3 664 570.3 664 570.8 666 570.3 666 570.3 668 570.2 668 569.8 670 570.2 670 570.1 672 570.2 672 569.9 674 569.1 674 569.7 676 569.1 676 569.1 678 569.0 678 568.9 680 569.5 680 568.9 682 568.4 682 569.1 684 568.8 684 568.9 686 568.5 686 568.9 688 567.8 688 568.4 690 568.8 690 567.5 692 567.7 692 567.7 694 567.6 694 567.9 696 567.7 696 567.3 698 567.1 698 567.0 700 567.2 700 567.4 702 567.2 702 566.6 704 566.4 704 567.0 706 566.9 706 566.2 708 566.3 708 566.2 710 566.9 710 566.5 712 566.4 712 566.1 714 566.7 714 565.5 716 565.8 716 565.6 718 566.2 718 565.6 720 565.1 720 566.0 722 565.3 722 565.0 724 565.5 724 564.8 726 565.2 726 564.5 728 564.7 728 564.7 730 564.0 730 564.3 732 564.1 732 564.9 734 564.6 734 564.0 736 563.9 736 564.2 738 563.8 738 564.4 740 563.8 740 564.2 742 563.6 742 563.8 744 563.8 744 563.5 746 562.8 746 563.7 748 563.5 748 562.8 750 563.3 750 562.4 752 562.9 752 562.8 754 562.7 754 562.1 756 562.4 756 562.4 758 562.4 758 563.0 760 562.7 760 561.7 762 561.9 762 561.9 764 561.8 764 562.2 766 561.8 766 562.2 768 561.6 768 561.9 770 561.7 770 561.4 772 561.6 772 561.2 774 561.2 774 561.1 776 560.7 776 561.6 778 561.6 778 560.7 780 560.6 780 560.1 782 560.5 782 560.4 784 560.9 784 560.3 786 560.2 786 560.8 788 560.7 788 560.3 790 560.1 790 561.2 792 560.1 792 559.9 794 560.0 794 559.8 796 559.7 796 560.1 798 559.5 798 559.7 800 559.9 800 559.4 801 558.9 802 559.9 804 559.9 804 559.8 806 558.5 806 559.2 807 559.1 808 559.3 810 559.3 810 559.6 812 558.7 812 558.6 813 559.4 814 559.0 816 558.8 816 558.5 817 558.3 818 558.0 820 557.8 820 557.9 822 557.7 822 558.6 823 558.3 824 557.6 826 557.8 826 557.9 828 558.6 828 558.4 829 557.4 830 557.5 832 557.7 832 557.7 834 558.1 834 557.3 835 557.0 836 556.7 838 557.2 838 557.3 840 557.5 840 556.6 841 556.4 842 557.2 844 556.8 844 556.8 845 557.0 846 557.6 848 556.8 848 556.4 850 557.1 850 556.8 851 557.6 852 555.9 854 556.2 854 556.3 856 556.3 856 556.4 857 556.1 858 556.2 860 556.1 860 556.0 862 555.9 862 555.3 863 556.3 864 555.6 866 555.9 866 556.0 868 556.4 868 555.3 869 555.8 870 555.7 872 555.2 872 555.7 873 555.3 874 555.2 876 554.9 876 554.7 878 555.4 878 554.7 879 555.0 880 554.8 882 554.9 882 554.5 884 555.2 884 554.6 885 554.2 886 554.7 888 553.8 888 554.7 890 554.4 890 554.6 891 554.6 892 554.7 894 554.4 894 554.2 896 554.4 896 553.8 897 553.5 898 554.5 900 553.6 900 553.8 901 553.7 902 552.9 903 553.3 904 553.5 906 553.6 906 554.4 907 553.2 908 553.7 910 553.4 910 553.3 912 553.0 912 552.5 913 552.9 914 552.7 916 553.2 916 552.9 918 552.7 918 553.5 919 552.2 920 553.1 922 553.3 922 552.2 924 552.0 924 552.9 925 552.9 926 551.5 928 552.5 928 553.2 929 552.7 930 551.7 931 552.1 932 552.0 934 551.8 934 552.0 935 552.3 936 552.7 938 551.9 938 552.4 940 552.0 940 551.3 941 551.7 942 551.8 944 551.7 944 551.5 946 551.3 946 552.1 947 551.5 948 550.9 950 551.2 950 551.7 952 551.6 952 552.1 953 551.6 954 550.7 956 551.2 956 551.5 957 551.3 958 551.1 959 551.1 960 551.1 962 551.2 962 550.6 963 550.3 964 551.0 966 550.9 966 550.3 968 551.2 968 550.8 969 550.7 970 550.5 972 550.6 972 550.7 974 550.3 974 550.8 975 550.9 976 551.0 978 549.9 978 550.8 980 550.0 980 549.8 981 549.7 982 550.0 984 550.1 984 549.9 985 550.1 986 550.3 987 549.3 988 550.1 990 549.0 990 549.5 991 549.8 992 549.4 993 549.1 994 550.0 996 549.8 996 549.8 997 549.3 998 549.2 1000 549.2 1000 549.5 1002 549.4 1002 548.7 1003 548.7 1004 549.0 1006 549.5 1006 548.7 1008 548.8 1008 548.8 1009 548.2 1010 548.5 1012 549.1 1012 549.1 1013 548.2 1014 548.6 1015 548.3 1016 548.6 1018 548.9 1018 548.4 1019 547.8 1020 548.2 1021 548.7 1022 548.4 1024 548.4 1024 548.1 1026 547.8 1026 547.4 1028 548.0 1028 548.2 1030 548.0 1030 547.9 1032 548.1 1032 547.9 1034 547.8 1034 548.2 1036 547.5 1036 547.8 1038 548.0 1038 547.4 1040 547.8 1040 546.9 1042 547.3 1042 547.4 1044 547.7 1044 547.5 1046 547.0 1046 547.6 1048 547.0 1048 548.0 1050 547.1 1050 546.9 1052 547.0 1052 547.1 1054 546.7 1054 547.3 1056 547.3 1056 546.9 1058 546.4 1058 546.7 1060 546.9 1060 546.6 1062 546.6 1062 547.1 1064 547.7 1064 547.0 1066 547.1 1066 546.7 1068 546.9 1068 546.8 1070 546.2 1070 546.3 1072 546.3 1072 545.7 1074 546.4 1074 546.3 1076 545.7 1076 546.5 1078 546.7 1078 545.6 1080 545.9 1080 545.7 1082 545.7 1082 545.5 1084 546.0 1084 545.8 1086 546.1 1086 545.6 1088 545.6 1088 545.8 1090 545.3 1090 544.5 1092 545.9 1092 545.1 1094 545.1 1094 545.0 1096 545.6 1096 544.8 1098 545.0 1098 545.2 1100 545.3 1100 545.0 1102 544.7 1102 544.7 1104 544.2 1104 545.1" fill="none" stroke="#0050d0" stroke-width="1.0" stroke-linejoin="round"/><path d="M288 644.7 288 645.3 290 645.1 290 645.5 292 646.0 292 646.5 294 646.5 294 646.4 296 646.2 296 646.6 298 647.6 298 647.5 300 647.6 300 647.8 302 647.9 302 647.8 304 648.2 304 648.7 306 649.2 306 648.7 308 649.2 308 648.7 310 648.5 310 648.9 312 648.3 312 648.1 314 647.0 314 647.2 316 647.6 316 646.3 318 645.8 318 645.5 320 645.0 320 644.1 322 643.5 322 643.0 324 643.0 324 642.1 326 642.0 326 641.4 328 640.6 328 640.2 330 639.5 330 638.0 332 638.2 332 638.2 334 638.2 334 637.2 336 636.9 336 636.6 338 635.0 338 634.9 340 634.0 340 632.4 342 632.9 342 632.4 344 631.7 344 631.3 346 631.0 346 630.2 348 629.1 348 629.0 350 628.8 350 628.2 352 627.6 352 626.6 354 625.9 354 625.3 356 624.5 356 624.4 358 623.5 358 623.2 360 622.5 360 622.9 362 621.3 362 621.8 364 621.2 364 620.0 366 620.0 366 618.8 368 618.9 368 618.9 370 618.1 370 617.9 372 616.9 372 616.5 374 616.5 374 616.5 376 616.0 376 615.3 378 615.6 378 615.3 380 614.4 380 614.1 382 614.1 382 613.8 384 614.1 384 612.7 386 612.8 386 613.0 388 612.6 388 612.2 390 611.0 390 611.1 392 611.5 392 610.1 394 610.0 394 610.6 396 610.9 396 609.3 398 609.6 398 609.2 400 609.0 400 608.1 402 607.8 402 607.8 404 607.9 404 607.5 406 607.1 406 607.6 408 606.3 408 606.7 410 606.2 410 606.0 412 605.5 412 605.2 414 604.5 414 605.2 416 605.2 416 604.6 418 604.6 418 603.8 420 604.2 420 603.6 422 603.1 422 602.9 424 602.9 424 602.3 426 602.1 426 602.9 428 602.0 428 601.8 430 601.7 430 601.6 432 601.2 432 600.8 434 600.6 434 600.0 436 599.9 436 600.2 438 600.1 438 599.2 440 599.6 440 599.0 442 598.7 442 598.2 444 598.2 444 597.6 446 598.1 446 597.4 448 597.7 448 597.1 450 596.9 450 597.0 452 597.4 452 595.9 454 595.8 454 595.7 456 595.7 456 595.3 458 594.8 458 594.7 460 594.0 460 594.1 462 594.2 462 593.4 464 593.6 464 593.0 466 593.5 466 592.7 468 592.1 468 592.3 470 591.8 470 591.3 472 591.2 472 590.3 474 590.8 474 590.5 476 590.2 476 590.6 478 590.2 478 589.2 480 589.2 480 588.3 482 588.6 482 588.3 484 587.6 484 587.6 486 586.9 486 587.6 488 586.8 488 586.4 490 586.2 490 585.7 492 585.5 492 585.6 494 585.5 494 584.7 496 584.8 496 584.2 498 583.8 498 583.9 500 584.1 500 583.6 502 583.0 502 583.1 504 582.3 504 582.5 506 582.2 506 582.2 508 581.8 508 581.1 510 581.4 510 581.2 512 581.1 512 580.3 514 580.9 514 580.4 516 579.6 516 579.2 518 579.6 518 578.9 520 579.8 520 578.6 522 578.5 522 578.9 524 578.9 524 578.2 526 577.7 526 577.5 528 577.4 528 577.0 530 576.8 530 577.4 532 576.9 532 576.8 534 576.0 534 576.4 536 575.7 536 575.9 538 574.9 538 575.7 540 575.5 540 575.4 542 575.2 542 574.2 544 575.1 544 575.1 546 574.7 546 574.3 548 574.7 548 574.0 550 573.8 550 574.0 552 573.9 552 574.0 554 573.7 554 573.8 556 572.9 556 572.6 558 573.2 558 573.0 560 573.6 560 572.9 562 572.5 562 572.4 564 572.4 564 572.0 566 572.1 566 572.2 568 571.4 568 572.5 570 572.2 570 571.9 572 571.8 572 571.7 574 571.4 574 571.5 576 571.1 576 570.8 578 570.9 578 570.8 580 571.0 580 571.0 582 570.6 582 570.1 584 570.2 584 569.8 586 569.7 586 569.6 588 570.2 588 569.4 590 569.4 590 568.9 592 569.3 592 569.3 594 569.4 594 569.2 596 569.7 596 569.1 598 569.0 598 568.5 600 569.0 600 568.6 602 567.9 602 568.7 604 568.1 604 568.5 606 568.2 606 567.9 608 567.7 608 568.1 610 568.2 610 567.2 612 567.6 612 567.2 614 567.1 614 567.1 616 567.3 616 567.2 618 567.6 618 566.9 620 567.0 620 566.8 622 566.0 622 566.3 624 566.4 624 566.8 626 566.0 626 565.6 628 566.4 628 565.8 630 566.1 630 565.8 632 565.8 632 566.2 634 565.7 634 566.0 636 564.8 636 564.8 638 565.1 638 564.9 640 564.9 640 564.7 642 564.6 642 564.7 644 564.6 644 564.9 646 564.7 646 564.4 648 564.0 648 564.1 650 563.2 650 563.9 652 563.9 652 563.5 654 563.2 654 562.8 656 563.0 656 563.4 658 563.2 658 562.7 660 562.9 660 562.6 662 562.8 662 562.1 664 562.0 664 562.1 666 562.3 666 562.9 668 562.7 668 562.0 670 561.8 670 562.9 672 562.0 672 561.3 674 561.3 674 561.7 676 561.2 676 561.3 678 561.3 678 560.7 680 560.6 680 561.1 682 561.2 682 561.2 684 561.2 684 560.1 686 559.8 686 560.3 688 559.9 688 560.4 690 560.1 690 559.7 692 559.8 692 559.8 694 560.3 694 560.2 696 559.7 696 559.7 698 559.4 698 559.5 700 559.3 700 559.1 702 558.8 702 558.9 704 559.0 704 558.8 706 558.3 706 558.6 708 558.8 708 558.8 710 558.2 710 558.0 712 557.7 712 558.2 714 557.5 714 558.0 716 557.9 716 557.9 718 557.4 718 557.1 720 557.4 720 557.5 722 557.8 722 557.1 724 557.2 724 557.1 726 557.1 726 557.1 728 556.9 728 556.5 730 556.2 730 556.5 732 556.3 732 556.4 734 556.3 734 556.6 736 555.8 736 555.8 738 555.4 738 556.0 740 555.7 740 556.0 742 555.5 742 555.5 744 555.2 744 555.4 746 555.0 746 555.4 748 554.9 748 555.1 750 555.1 750 554.8 752 554.7 752 555.2 754 555.2 754 554.5 756 554.5 756 555.1 758 554.9 758 554.5 760 554.1 760 554.0 762 553.7 762 553.5 764 553.0 764 554.3 766 553.7 766 553.3 768 554.0 768 554.0 770 553.4 770 553.0 772 552.8 772 553.8 774 553.6 774 553.1 776 553.2 776 552.8 778 552.8 778 552.2 780 552.7 780 552.6 782 552.5 782 552.1 784 552.8 784 552.2 786 552.6 786 552.7 788 551.7 788 551.9 790 551.5 790 551.9 792 551.7 792 551.8 794 551.6 794 551.8 796 551.0 796 551.9 798 550.9 798 551.5 800 551.0 800 551.2 801 551.1 802 550.6 804 551.0 804 551.4 806 550.9 806 550.7 807 551.7 808 550.4 810 550.3 810 551.3 812 550.6 812 550.2 813 550.9 814 550.5 816 550.4 816 550.1 817 549.8 818 550.1 820 550.0 820 549.7 822 549.7 822 549.9 823 549.3 824 550.3 826 549.6 826 549.8 828 549.7 828 549.4 829 549.4 830 548.5 832 549.1 832 549.1 834 548.6 834 548.8 835 549.7 836 549.0 838 548.7 838 549.1 840 548.7 840 548.9 841 548.6 842 549.2 844 549.3 844 548.7 845 548.4 846 547.9 848 548.4 848 548.6 850 547.9 850 548.2 851 547.5 852 548.1 854 548.7 854 548.2 856 548.2 856 548.3 857 548.0 858 548.0 860 547.8 860 547.8 862 547.4 862 547.3 863 547.4 864 547.3 866 548.0 866 547.9 868 547.5 868 547.1 869 547.6 870 547.2 872 546.9 872 546.2 873 546.8 874 547.0 876 546.4 876 546.6 878 546.8 878 546.2 879 546.9 880 546.4 882 546.4 882 546.1 884 546.7 884 546.8 885 546.4 886 546.3 888 546.1 888 546.2 890 545.9 890 545.7 891 545.8 892 546.3 894 545.4 894 546.3 896 545.8 896 545.3 897 545.8 898 545.1 900 544.8 900 544.9 901 545.3 902 545.0 903 545.5 904 545.1 906 545.1 906 545.1 907 545.1 908 545.2 910 545.7 910 544.8 912 544.8 912 544.1 913 544.6 914 544.8 916 544.4 916 544.5 918 544.7 918 544.7 919 545.1 920 544.5 922 543.9 922 545.1 924 544.7 924 544.1 925 544.2 926 544.1 928 544.9 928 544.4 929 543.9 930 543.9 931 543.9 932 544.3 934 543.7 934 544.3 935 544.2 936 544.2 938 543.2 938 543.9 940 543.7 940 544.4 941 543.2 942 543.4 944 544.1 944 544.1 946 542.8 946 543.7 947 542.7 948 543.5 950 544.2 950 542.8 952 543.0 952 542.9 953 543.3 954 543.2 956 542.7 956 543.3 957 543.7 958 542.6 959 543.1 960 542.4 962 543.0 962 542.9 963 542.8 964 543.6 966 542.3 966 542.9 968 542.7 968 542.0 969 542.5 970 542.2 972 542.3 972 542.2 974 542.3 974 541.9 975 542.4 976 542.1 978 542.5 978 541.8 980 543.0 980 542.1 981 542.0 982 542.0 984 542.1 984 541.5 985 541.2 986 542.2 987 542.6 988 542.3 990 542.2 990 541.9 991 541.8 992 541.4 993 541.9 994 541.7 996 541.6 996 542.0 997 541.7 998 540.6 1000 541.6 1000 541.9 1002 542.3 1002 541.1 1003 541.6 1004 541.6 1006 540.5 1006 540.8 1008 542.0 1008 541.4 1009 540.9 1010 540.9 1012 541.6 1012 540.5 1013 540.5 1014 541.5 1015 541.7 1016 541.6 1018 540.8 1018 540.6 1019 540.9 1020 541.2 1021 541.0 1022 540.7 1024 541.3 1024 541.5 1026 540.8 1026 540.3 1028 540.7 1028 540.7 1030 541.0 1030 540.3 1032 541.3 1032 540.6 1034 540.8 1034 540.6 1036 540.9 1036 540.2 1038 540.5 1038 540.7 1040 540.2 1040 540.4 1042 540.6 1042 540.6 1044 540.0 1044 540.6 1046 540.4 1046 540.3 1048 540.1 1048 540.3 1050 539.4 1050 540.8 1052 539.9 1052 540.1 1054 539.7 1054 540.6 1056 539.6 1056 540.5 1058 539.7 1058 539.7 1060 539.9 1060 540.1 1062 540.1 1062 539.8 1064 540.1 1064 540.5 1066 540.4 1066 539.4 1068 539.4 1068 539.5 1070 539.6 1070 539.5 1072 539.4 1072 539.4 1074 539.8 1074 539.8 1076 539.9 1076 539.4 1078 539.8 1078 539.4 1080 538.9 1080 539.5 1082 538.9 1082 538.7 1084 539.9 1084 539.7 1086 539.0 1086 539.4 1088 538.9 1088 538.8 1090 539.3 1090 538.7 1092 538.4 1092 538.6 1094 539.3 1094 539.0 1096 539.1 1096 538.3 1098 538.9 1098 539.1 1100 538.8 1100 538.6 1102 538.8 1102 538.6 1104 538.7 1104 538.4" fill="none" stroke="#6000b0" stroke-width="1.0" stroke-linejoin="round"/><path d="M288 659.2 288 659.6 290 660.1 290 660.0 292 660.7 292 660.2 294 660.7 294 661.0 296 662.2 296 660.7 298 661.2 298 661.5 300 662.1 300 662.1 302 661.5 302 663.0 304 662.6 304 662.8 306 663.0 306 663.0 308 663.5 308 663.0 310 663.6 310 662.3 312 662.3 312 662.6 314 662.6 314 661.2 316 660.5 316 660.4 318 658.7 318 658.5 320 658.0 320 657.5 322 656.3 322 655.5 324 654.3 324 653.4 326 653.0 326 652.1 328 651.0 328 650.6 330 650.3 330 649.3 332 649.1 332 648.0 334 647.5 334 647.2 336 645.9 336 645.4 338 644.4 338 644.4 340 642.8 340 642.1 342 641.9 342 641.1 344 640.3 344 639.5 346 638.5 346 638.3 348 637.7 348 636.7 350 635.1 350 635.3 352 634.8 352 634.0 354 632.9 354 631.8 356 631.9 356 630.9 358 630.2 358 629.4 360 628.9 360 628.0 362 627.5 362 627.4 364 625.7 364 626.6 366 626.0 366 624.6 368 624.5 368 624.2 370 623.6 370 623.0 372 623.0 372 622.7 374 622.5 374 622.0 376 621.6 376 620.6 378 620.5 378 620.1 380 620.1 380 619.2 382 619.8 382 618.8 384 618.4 384 618.5 386 618.4 386 617.5 388 617.6 388 617.4 390 616.8 390 616.9 392 616.3 392 615.2 394 615.8 394 615.0 396 615.5 396 614.8 398 614.7 398 614.4 400 613.8 400 613.0 402 613.6 402 612.8 404 612.9 404 612.5 406 612.7 406 612.6 408 612.2 408 612.1 410 611.6 410 611.8 412 611.2 412 610.9 414 610.1 414 609.9 416 610.1 416 610.2 418 609.6 418 609.3 420 609.5 420 609.5 422 609.6 422 608.7 424 607.8 424 608.4 426 607.9 426 607.7 428 607.5 428 607.1 430 607.9 430 607.0 432 606.6 432 606.6 434 605.9 434 606.2 436 605.5 436 605.0 438 605.5 438 605.2 440 605.0 440 604.4 442 605.2 442 604.8 444 604.1 444 603.4 446 603.3 446 603.5 448 602.4 448 602.7 450 602.7 450 602.0 452 601.5 452 601.7 454 602.0 454 601.4 456 600.8 456 600.3 458 600.7 458 599.9 460 600.2 460 599.4 462 599.6 462 599.0 464 599.1 464 598.6 466 598.5 466 598.4 468 596.9 468 596.6 470 596.5 470 596.5 472 595.6 472 595.9 474 595.3 474 594.7 476 594.7 476 594.0 478 594.2 478 593.9 480 593.5 480 593.6 482 593.3 482 592.3 484 592.9 484 591.5 486 591.5 486 590.8 488 590.7 488 590.4 490 589.7 490 590.0 492 589.7 492 588.9 494 589.3 494 588.3 496 588.1 496 588.3 498 588.2 498 588.2 500 586.5 500 587.4 502 587.0 502 585.9 504 585.7 504 585.5 506 585.3 506 585.2 508 585.1 508 584.7 510 583.9 510 583.5 512 583.1 512 583.3 514 583.8 514 582.6 516 582.5 516 583.2 518 581.4 518 581.6 520 581.5 520 581.1 522 580.9 522 580.6 524 580.4 524 580.2 526 579.8 526 579.6 528 578.7 528 579.3 530 579.3 530 579.1 532 578.6 532 578.4 534 578.2 534 578.2 536 578.0 536 577.5 538 577.1 538 577.3 540 577.3 540 577.5 542 577.4 542 576.8 544 576.7 544 576.5 546 576.7 546 576.2 548 576.7 548 576.3 550 576.0 550 575.3 552 575.6 552 575.6 554 575.0 554 575.0 556 574.5 556 574.6 558 574.5 558 574.5 560 574.1 560 574.4 562 574.6 562 573.6 564 574.0 564 573.6 566 573.3 566 573.0 568 574.3 568 573.6 570 572.6 570 573.5 572 572.6 572 572.8 574 572.9 574 572.5 576 573.0 576 572.1 578 571.7 578 572.5 580 572.1 580 571.3 582 571.5 582 571.7 584 570.9 584 571.9 586 571.3 586 571.1 588 571.1 588 570.6 590 571.4 590 570.7 592 570.9 592 570.0 594 570.0 594 570.5 596 570.6 596 570.1 598 570.3 598 570.1 600 569.6 600 569.8 602 568.9 602 569.4 604 569.5 604 569.7 606 569.3 606 568.7 608 568.8 608 568.3 610 568.3 610 568.5 612 568.8 612 568.5 614 568.3 614 568.9 616 568.0 616 568.4 618 568.0 618 568.1 620 567.6 620 566.7 622 568.0 622 567.5 624 566.6 624 567.6 626 567.3 626 567.1 628 566.9 628 567.5 630 566.7 630 566.5 632 565.7 632 566.5 634 566.6 634 566.2 636 567.2 636 566.0 638 565.4 638 565.9 640 565.8 640 565.8 642 565.6 642 566.0 644 564.9 644 565.5 646 565.4 646 564.5 648 565.0 648 565.1 650 564.3 650 564.7 652 564.3 652 564.8 654 565.1 654 564.3 656 563.8 656 564.4 658 564.0 658 563.8 660 563.8 660 563.8 662 563.5 662 563.6 664 563.8 664 563.1 666 563.1 666 563.2 668 563.0 668 564.1 670 562.9 670 562.9 672 563.6 672 562.0 674 562.6 674 562.8 676 562.7 676 562.3 678 562.3 678 562.8 680 562.3 680 561.9 682 561.8 682 561.6 684 562.2 684 562.0 686 561.5 686 561.8 688 561.4 688 561.7 690 561.1 690 561.2 692 560.9 692 561.0 694 561.3 694 561.3 696 560.8 696 560.9 698 561.2 698 560.7 700 560.2 700 559.9 702 560.0 702 559.7 704 560.3 704 560.1 706 560.3 706 560.2 708 559.2 708 559.6 710 559.4 710 558.6 712 558.8 712 559.7 714 559.0 714 559.5 716 558.8 716 559.8 718 559.3 718 559.3 720 558.1 720 559.4 722 558.3 722 558.2 724 558.5 724 558.1 726 557.4 726 558.2 728 558.3 728 557.6 730 557.8 730 558.4 732 557.8 732 557.7 734 558.2 734 558.0 736 557.9 736 558.0 738 557.3 738 557.3 740 558.1 740 557.4 742 557.1 742 557.6 744 557.1 744 556.8 746 557.5 746 556.9 748 557.6 748 556.4 750 556.9 750 557.1 752 557.1 752 557.0 754 555.8 754 556.5 756 556.4 756 556.2 758 556.6 758 555.7 760 556.8 760 555.5 762 556.0 762 555.7 764 555.5 764 555.2 766 555.9 766 555.2 768 555.4 768 555.3 770 555.3 770 554.7 772 554.9 772 554.5 774 554.6 774 555.6 776 554.8 776 554.4 778 555.0 778 555.2 780 555.4 780 553.7 782 554.7 782 554.3 784 554.7 784 554.0 786 553.5 786 554.6 788 554.0 788 554.2 790 554.6 790 554.1 792 553.7 792 553.2 794 553.1 794 553.5 796 554.1 796 553.2 798 553.3 798 553.3 800 553.6 800 553.2 801 552.4 802 552.5 804 552.5 804 552.6 806 553.0 806 552.8 807 552.7 808 552.5 810 552.7 810 552.8 812 552.0 812 552.5 813 552.0 814 552.3 816 552.0 816 552.0 817 551.8 818 551.8 820 552.3 820 552.4 822 551.9 822 551.2 823 552.0 824 552.0 826 550.7 826 552.1 828 551.7 828 551.6 829 551.6 830 551.5 832 550.8 832 551.1 834 551.0 834 551.7 835 550.7 836 550.9 838 550.8 838 550.5 840 550.6 840 550.7 841 550.5 842 550.8 844 550.9 844 551.0 845 550.0 846 550.6 848 550.2 848 549.8 850 549.5 850 550.3 851 550.0 852 550.0 854 550.4 854 550.1 856 548.8 856 549.8 857 549.1 858 549.4 860 549.0 860 549.1 862 549.4 862 549.9 863 548.9 864 549.1 866 549.1 866 548.9 868 549.5 868 549.1 869 549.1 870 549.5 872 549.4 872 548.9 873 549.7 874 548.5 876 548.4 876 548.7 878 548.5 878 549.2 879 548.4 880 548.2 882 548.2 882 548.0 884 548.3 884 547.5 885 548.0 886 547.8 888 547.7 888 548.3 890 548.4 890 547.6 891 548.3 892 548.1 894 547.4 894 548.1 896 548.0 896 548.1 897 548.0 898 546.8 900 547.3 900 547.1 901 548.1 902 548.2 903 547.7 904 546.8 906 546.7 906 547.9 907 547.7 908 546.8 910 546.9 910 546.8 912 546.6 912 547.2 913 546.7 914 546.8 916 546.2 916 546.7 918 547.3 918 546.1 919 545.8 920 546.1 922 546.5 922 546.7 924 545.9 924 546.4 925 546.0 926 545.9 928 546.2 928 546.8 929 545.8 930 546.3 931 546.5 932 545.9 934 545.8 934 545.8 935 545.5 936 546.4 938 545.4 938 545.0 940 545.6 940 545.7 941 545.5 942 545.0 944 545.5 944 545.6 946 545.9 946 544.7 947 544.7 948 545.2 950 544.4 950 545.2 952 544.8 952 545.5 953 545.3 954 544.9 956 544.7 956 544.6 957 545.1 958 544.9 959 544.7 960 544.8 962 544.7 962 544.3 963 544.1 964 545.2 966 544.0 966 544.3 968 544.2 968 544.2 969 543.9 970 544.0 972 544.8 972 543.8 974 544.5 974 543.9 975 544.0 976 544.6 978 544.0 978 544.0 980 544.1 980 543.1 981 543.7 982 543.9 984 543.1 984 543.7 985 543.7 986 544.4 987 543.4 988 543.2 990 542.8 990 543.8 991 543.0 992 542.9 993 543.1 994 543.3 996 543.9 996 543.2 997 543.4 998 543.8 1000 542.9 1000 543.1 1002 543.1 1002 542.3 1003 543.2 1004 543.7 1006 543.7 1006 542.7 1008 542.9 1008 543.1 1009 543.6 1010 543.0 1012 543.1 1012 542.7 1013 543.0 1014 542.9 1015 542.6 1016 542.8 1018 542.4 1018 543.7 1019 542.9 1020 542.0 1021 542.3 1022 542.7 1024 542.4 1024 542.5 1026 542.4 1026 541.7 1028 542.3 1028 542.1 1030 542.4 1030 542.3 1032 542.6 1032 542.2 1034 542.1 1034 542.0 1036 541.9 1036 541.8 1038 541.6 1038 541.9 1040 541.3 1040 541.5 1042 541.2 1042 541.7 1044 541.2 1044 541.6 1046 542.2 1046 541.5 1048 541.6 1048 542.0 1050 541.8 1050 541.6 1052 540.5 1052 541.2 1054 540.6 1054 540.9 1056 540.8 1056 540.9 1058 541.7 1058 540.7 1060 541.5 1060 540.9 1062 541.1 1062 540.4 1064 540.5 1064 540.2 1066 540.7 1066 540.8 1068 540.5 1068 539.9 1070 540.6 1070 540.7 1072 541.1 1072 540.9 1074 540.6 1074 540.3 1076 540.3 1076 540.5 1078 540.4 1078 539.9 1080 539.7 1080 539.9 1082 539.8 1082 539.8 1084 539.6 1084 540.7 1086 540.4 1086 540.1 1088 540.0 1088 539.6 1090 540.7 1090 540.0 1092 539.9 1092 540.2 1094 540.0 1094 539.5 1096 539.7 1096 539.9 1098 539.7 1098 539.8 1100 539.4 1100 539.7 1102 539.3 1102 539.8 1104 539.6 1104 539.9" fill="none" stroke="#00d0b0" stroke-width="1.0" stroke-linejoin="round"/><path d="M288 661.5 288 661.3 290 662.1 290 662.1 292 662.2 292 662.5 294 662.3 294 663.3 296 662.8 296 662.9 298 663.0 298 663.8 300 664.3 300 664.8 302 664.1 302 664.2 304 664.6 304 664.7 306 664.6 306 665.1 308 665.5 308 665.5 310 665.2 310 665.1 312 665.1 312 664.3 314 664.0 314 662.9 316 662.6 316 661.6 318 661.7 318 660.9 320 660.3 320 658.8 322 657.0 322 657.2 324 656.6 324 655.6 326 654.9 326 653.7 328 653.4 328 653.0 330 652.7 330 651.2 332 650.3 332 649.9 334 649.6 334 648.7 336 647.9 336 646.8 338 646.3 338 645.1 340 644.8 340 644.2 342 642.5 342 642.7 344 641.9 344 640.0 346 639.9 346 638.5 348 639.3 348 637.1 350 636.8 350 636.0 352 635.1 352 635.5 354 634.0 354 632.8 356 631.0 356 631.8 358 629.9 358 629.8 360 629.0 360 629.1 362 627.8 362 627.8 364 627.3 364 625.8 366 625.9 366 625.3 368 624.4 368 624.4 370 624.1 370 623.2 372 622.7 372 621.9 374 622.4 374 621.4 376 621.0 376 621.0 378 620.6 378 620.1 380 620.2 380 619.9 382 618.8 382 619.1 384 618.7 384 617.8 386 617.9 386 617.6 388 617.6 388 617.2 390 617.0 390 616.7 392 615.4 392 615.9 394 616.1 394 615.4 396 614.5 396 614.9 398 614.2 398 614.2 400 614.3 400 613.6 402 613.5 402 612.8 404 612.3 404 612.3 406 611.1 406 612.2 408 611.1 408 611.2 410 610.6 410 610.7 412 611.4 412 610.5 414 609.8 414 609.9 416 610.2 416 609.6 418 609.1 418 608.5 420 609.0 420 608.5 422 608.6 422 608.5 424 608.0 424 607.1 426 607.1 426 607.3 428 606.9 428 606.5 430 606.5 430 606.4 432 606.1 432 605.6 434 605.7 434 605.0 436 605.8 436 605.2 438 604.8 438 604.2 440 604.5 440 604.1 442 603.6 442 603.5 444 603.4 444 603.1 446 603.0 446 602.1 448 602.0 448 601.6 450 600.8 450 600.9 452 600.9 452 600.9 454 599.7 454 600.2 456 600.1 456 599.2 458 599.2 458 599.2 460 598.7 460 597.8 462 598.2 462 597.8 464 597.9 464 597.5 466 596.7 466 596.7 468 596.3 468 595.6 470 595.9 470 594.9 472 595.3 472 595.1 474 594.8 474 594.7 476 593.6 476 593.5 478 592.7 478 593.1 480 592.3 480 591.7 482 592.0 482 591.6 484 592.2 484 590.2 486 590.7 486 590.0 488 590.2 488 589.5 490 589.8 490 588.7 492 588.7 492 588.5 494 587.9 494 588.4 496 587.4 496 587.3 498 586.3 498 586.2 500 586.3 500 586.0 502 584.5 502 585.6 504 584.3 504 584.3 506 584.1 506 584.8 508 583.5 508 583.7 510 583.5 510 582.7 512 582.9 512 582.2 514 582.4 514 581.6 516 581.4 516 581.6 518 581.4 518 581.0 520 580.7 520 580.5 522 579.4 522 579.6 524 579.7 524 579.4 526 579.4 526 578.8 528 578.7 528 578.7 530 578.5 530 578.2 532 578.2 532 577.6 534 577.8 534 577.0 536 577.2 536 576.7 538 576.9 538 577.2 540 576.9 540 576.3 542 575.9 542 575.7 544 575.5 544 575.3 546 575.3 546 575.1 548 575.2 548 574.8 550 574.9 550 574.7 552 574.5 552 573.5 554 574.8 554 574.3 556 574.0 556 573.7 558 573.7 558 572.9 560 574.0 560 572.6 562 573.6 562 573.3 564 572.7 564 572.7 566 572.6 566 572.5 568 572.2 568 571.9 570 572.0 570 572.5 572 572.2 572 571.3 574 570.9 574 571.2 576 571.0 576 571.2 578 570.4 578 571.3 580 571.1 580 571.1 582 570.2 582 570.8 584 570.3 584 570.9 586 570.8 586 569.8 588 569.8 588 569.7 590 569.8 590 569.9 592 569.8 592 570.0 594 569.6 594 568.9 596 569.3 596 569.6 598 569.1 598 569.3 600 569.3 600 568.8 602 568.9 602 569.0 604 567.9 604 567.7 606 568.2 606 567.6 608 568.2 608 568.0 610 567.4 610 567.6 612 567.3 612 568.5 614 567.3 614 567.5 616 567.3 616 567.7 618 567.3 618 566.7 620 566.6 620 566.5 622 566.3 622 566.2 624 566.3 624 566.4 626 566.5 626 566.3 628 566.4 628 566.3 630 565.9 630 566.6 632 566.1 632 565.9 634 565.3 634 565.0 636 565.2 636 565.2 638 565.3 638 564.6 640 564.6 640 565.0 642 564.7 642 564.5 644 564.2 644 564.5 646 563.8 646 563.8 648 564.3 648 564.1 650 564.3 650 564.2 652 563.7 652 563.2 654 563.1 654 563.4 656 563.5 656 563.5 658 563.1 658 563.3 660 562.8 660 563.0 662 562.7 662 562.9 664 561.9 664 562.2 666 562.4 666 562.7 668 562.1 668 561.9 670 562.5 670 562.0 672 561.2 672 561.8 674 561.9 674 561.5 676 560.9 676 561.7 678 561.6 678 561.4 680 561.2 680 560.7 682 560.9 682 561.8 684 560.7 684 560.7 686 560.5 686 560.5 688 560.6 688 560.3 690 560.6 690 560.9 692 560.3 692 560.5 694 559.4 694 560.0 696 559.3 696 560.3 698 560.2 698 559.5 700 560.2 700 559.7 702 560.1 702 559.2 704 559.9 704 559.2 706 559.7 706 558.8 708 558.5 708 558.8 710 559.1 710 558.5 712 558.2 712 558.2 714 558.0 714 557.7 716 558.2 716 558.3 718 558.3 718 558.0 720 558.0 720 558.1 722 557.7 722 557.0 724 557.9 724 557.7 726 557.6 726 557.8 728 557.0 728 557.3 730 557.0 730 557.7 732 556.8 732 557.0 734 557.4 734 556.5 736 556.4 736 556.6 738 556.4 738 556.9 740 556.1 740 556.4 742 556.1 742 556.0 744 556.0 744 556.3 746 555.9 746 555.9 748 555.4 748 556.0 750 555.4 750 555.5 752 555.5 752 554.8 754 555.1 754 555.5 756 555.2 756 555.5 758 555.5 758 555.2 760 555.2 760 554.3 762 554.6 762 555.7 764 554.8 764 554.9 766 554.6 766 554.4 768 554.4 768 554.2 770 554.6 770 553.7 772 554.2 772 553.6 774 554.1 774 553.8 776 554.2 776 553.4 778 553.6 778 553.8 780 553.5 780 553.4 782 554.0 782 553.7 784 553.7 784 553.0 786 553.1 786 553.4 788 553.3 788 553.0 790 553.8 790 552.9 792 552.3 792 553.3 794 553.1 794 553.0 796 552.4 796 552.8 798 551.8 798 552.4 800 552.5 800 552.6 801 551.9 802 551.7 804 552.0 804 551.5 806 551.5 806 551.7 807 551.8 808 551.9 810 551.6 810 551.7 812 551.0 812 551.2 813 551.5 814 551.5 816 551.1 816 550.8 817 551.1 818 550.7 820 551.2 820 550.9 822 550.7 822 550.8 823 550.7 824 550.4 826 550.7 826 550.2 828 550.7 828 550.3 829 550.6 830 550.5 832 550.1 832 549.8 834 550.2 834 550.1 835 549.6 836 550.3 838 549.6 838 550.3 840 550.5 840 549.6 841 549.8 842 549.8 844 550.5 844 549.4 845 549.6 846 549.8 848 549.4 848 549.7 850 549.5 850 549.5 851 548.8 852 549.1 854 548.5 854 549.3 856 549.3 856 548.2 857 549.3 858 548.3 860 549.1 860 548.4 862 548.8 862 548.0 863 547.7 864 548.0 866 548.2 866 548.4 868 547.9 868 547.4 869 548.3 870 548.5 872 547.4 872 548.0 873 547.6 874 547.8 876 547.7 876 547.8 878 547.7 878 548.2 879 547.8 880 547.8 882 547.0 882 547.5 884 547.3 884 547.9 885 547.2 886 546.6 888 547.1 888 546.8 890 547.2 890 547.2 891 546.6 892 547.1 894 547.2 894 546.8 896 546.9 896 546.3 897 546.4 898 547.1 900 546.3 900 547.0 901 546.4 902 546.2 903 546.5 904 546.5 906 545.9 906 546.3 907 546.5 908 545.5 910 545.7 910 545.8 912 545.8 912 545.5 913 545.8 914 545.5 916 545.6 916 545.9 918 545.2 918 545.5 919 545.8 920 545.6 922 546.3 922 546.0 924 545.9 924 545.0 925 545.0 926 544.8 928 545.0 928 544.5 929 545.2 930 545.3 931 545.3 932 544.9 934 545.1 934 545.2 935 545.0 936 544.7 938 545.2 938 544.7 940 544.6 940 544.0 941 544.5 942 545.0 944 544.4 944 544.3 946 544.8 946 545.4 947 544.0 948 544.3 950 544.5 950 544.2 952 543.6 952 543.4 953 544.2 954 543.4 956 544.0 956 543.9 957 543.9 958 543.8 959 543.8 960 544.0 962 543.7 962 544.0 963 543.4 964 543.8 966 543.3 966 543.5 968 544.1 968 543.0 969 543.3 970 543.3 972 543.4 972 542.6 974 543.3 974 542.8 975 543.0 976 543.6 978 542.8 978 543.6 980 542.8 980 542.8 981 542.8 982 543.1 984 542.3 984 542.1 985 543.1 986 542.8 987 542.1 988 542.8 990 542.2 990 542.9 991 542.7 992 542.4 993 542.3 994 542.9 996 542.7 996 542.1 997 541.8 998 542.1 1000 542.1 1000 542.0 1002 542.6 1002 542.0 1003 541.7 1004 541.8 1006 542.4 1006 542.3 1008 541.5 1008 542.4 1009 542.3 1010 541.3 1012 542.1 1012 542.0 1013 541.5 1014 541.4 1015 541.7 1016 542.1 1018 541.8 1018 541.5 1019 541.8 1020 541.8 1021 541.0 1022 541.2 1024 541.1 1024 541.0 1026 541.7 1026 541.1 1028 540.8 1028 541.0 1030 541.6 1030 541.7 1032 541.4 1032 540.9 1034 541.1 1034 540.9 1036 541.4 1036 540.6 1038 541.2 1038 540.5 1040 540.8 1040 541.9 1042 540.8 1042 541.1 1044 541.0 1044 540.7 1046 540.2 1046 540.3 1048 540.1 1048 540.5 1050 541.2 1050 540.7 1052 540.8 1052 540.7 1054 539.4 1054 540.0 1056 540.7 1056 539.8 1058 540.3 1058 540.7 1060 539.7 1060 540.3 1062 540.1 1062 539.2 1064 540.4 1064 539.6 1066 540.1 1066 540.3 1068 540.0 1068 539.8 1070 539.8 1070 540.4 1072 539.5 1072 540.0 1074 539.6 1074 539.6 1076 539.8 1076 539.4 1078 539.8 1078 539.9 1080 540.0 1080 540.1 1082 539.7 1082 540.2 1084 539.5 1084 539.5 1086 538.7 1086 539.7 1088 538.8 1088 539.1 1090 539.0 1090 539.4 1092 539.4 1092 539.2 1094 539.0 1094 538.8 1096 539.1 1096 538.3 1098 538.3 1098 539.7 1100 538.8 1100 538.8 1102 539.1 1102 539.7 1104 539.3 1104 538.7" fill="none" stroke="#00e050" stroke-width="1.0" stroke-linejoin="round"/><path d="M288 653.9 288 654.1 290 654.3 290 654.8 292 654.6 292 655.0 294 655.0 294 655.7 296 656.1 296 656.6 298 655.7 298 656.7 300 657.1 300 657.7 302 656.9 302 657.8 304 657.4 304 657.4 306 657.1 306 658.0 308 658.4 308 657.4 310 657.6 310 657.8 312 657.3 312 656.3 314 656.6 314 656.4 316 655.7 316 654.9 318 654.4 318 653.7 320 653.1 320 653.0 322 651.6 322 650.8 324 650.2 324 649.8 326 649.1 326 648.3 328 647.7 328 647.8 330 646.6 330 645.6 332 645.5 332 645.0 334 644.0 334 643.5 336 643.2 336 642.2 338 641.0 338 640.3 340 640.2 340 639.7 342 638.5 342 638.1 344 637.4 344 636.9 346 636.7 346 636.0 348 634.8 348 634.5 350 633.1 350 632.4 352 631.5 352 631.4 354 630.0 354 629.6 356 629.3 356 628.5 358 628.4 358 628.7 360 626.6 360 626.2 362 625.2 362 625.0 364 624.7 364 624.3 366 623.9 366 623.1 368 623.3 368 622.6 370 621.5 370 622.2 372 621.6 372 620.9 374 620.4 374 619.9 376 619.3 376 619.1 378 618.6 378 618.7 380 618.2 380 618.1 382 617.6 382 617.0 384 616.7 384 617.3 386 616.7 386 615.2 388 616.4 388 615.3 390 615.5 390 614.9 392 614.7 392 614.2 394 614.3 394 613.3 396 612.6 396 614.0 398 613.2 398 613.2 400 612.3 400 611.6 402 611.3 402 611.1 404 611.3 404 611.3 406 610.5 406 610.8 408 610.7 408 610.1 410 610.4 410 609.8 412 609.8 412 609.2 414 608.6 414 609.0 416 608.4 416 608.0 418 608.4 418 607.9 420 607.8 420 606.8 422 607.4 422 606.9 424 607.3 424 606.9 426 606.1 426 606.2 428 605.6 428 605.6 430 604.5 430 605.3 432 604.6 432 605.0 434 604.7 434 604.9 436 603.1 436 604.6 438 603.6 438 603.5 440 602.8 440 603.1 442 602.0 442 602.0 444 602.0 444 601.7 446 601.3 446 601.3 448 600.6 448 600.6 450 600.7 450 600.2 452 600.1 452 599.4 454 599.7 454 599.3 456 599.5 456 598.5 458 598.4 458 598.4 460 597.3 460 597.6 462 597.7 462 596.6 464 596.8 464 597.5 466 596.0 466 595.8 468 595.4 468 595.2 470 595.1 470 594.5 472 594.8 472 594.0 474 593.3 474 592.9 476 593.1 476 591.9 478 592.2 478 592.1 480 591.6 480 591.6 482 590.7 482 591.0 484 590.6 484 590.4 486 590.0 486 589.5 488 588.4 488 588.6 490 587.9 490 588.0 492 587.4 492 587.8 494 587.5 494 586.1 496 586.3 496 586.7 498 585.6 498 585.6 500 585.3 500 584.6 502 585.0 502 583.8 504 583.9 504 583.8 506 583.8 506 582.4 508 582.9 508 583.0 510 582.2 510 581.7 512 581.4 512 580.8 514 580.9 514 580.8 516 579.7 516 579.5 518 580.4 518 579.4 520 579.7 520 578.7 522 579.3 522 578.6 524 577.9 524 578.2 526 577.7 526 578.1 528 578.1 528 577.8 530 577.0 530 577.2 532 576.3 532 576.8 534 576.0 534 576.1 536 576.5 536 575.9 538 575.6 538 575.4 540 575.5 540 574.9 542 574.8 542 574.7 544 575.2 544 575.5 546 574.4 546 574.7 548 574.5 548 574.3 550 573.9 550 574.5 552 573.8 552 573.1 554 574.0 554 573.5 556 572.7 556 572.8 558 572.8 558 572.8 560 573.3 560 572.6 562 572.9 562 572.4 564 572.6 564 572.6 566 572.1 566 571.6 568 572.0 568 571.7 570 571.4 570 571.3 572 571.9 572 571.5 574 571.1 574 571.1 576 570.4 576 570.7 578 571.1 578 570.4 580 570.2 580 570.3 582 570.2 582 570.8 584 570.2 584 569.9 586 570.2 586 570.0 588 569.7 588 570.0 590 570.0 590 569.6 592 569.5 592 569.0 594 569.3 594 569.6 596 568.9 596 569.3 598 568.6 598 569.0 600 568.5 600 568.5 602 568.6 602 568.9 604 568.5 604 567.7 606 568.1 606 567.6 608 567.9 608 567.9 610 568.1 610 567.6 612 567.9 612 567.8 614 567.0 614 567.7 616 566.4 616 567.1 618 567.2 618 566.4 620 567.2 620 566.7 622 566.6 622 566.2 624 565.8 624 566.2 626 566.7 626 566.6 628 566.2 628 565.7 630 565.8 630 565.7 632 565.8 632 565.1 634 565.9 634 564.7 636 564.8 636 564.9 638 565.1 638 565.1 640 564.9 640 565.0 642 564.8 642 564.9 644 564.2 644 564.3 646 564.1 646 564.5 648 564.5 648 564.3 650 563.8 650 564.2 652 563.5 652 564.0 654 563.7 654 563.3 656 563.8 656 564.0 658 562.7 658 563.1 660 563.2 660 562.3 662 562.0 662 562.6 664 562.4 664 561.5 666 562.6 666 561.8 668 561.8 668 562.3 670 562.3 670 562.2 672 561.7 672 561.6 674 560.7 674 561.9 676 561.3 676 561.6 678 560.9 678 561.0 680 561.5 680 561.1 682 560.8 682 560.5 684 560.5 684 560.3 686 560.5 686 560.2 688 560.3 688 559.8 690 559.9 690 560.3 692 559.9 692 560.1 694 559.8 694 559.4 696 559.5 696 559.5 698 559.6 698 558.7 700 559.2 700 559.4 702 559.2 702 558.6 704 558.1 704 558.3 706 558.8 706 558.2 708 559.1 708 558.1 710 558.4 710 558.1 712 558.6 712 557.9 714 558.4 714 558.4 716 557.2 716 558.1 718 557.3 718 557.7 720 557.5 720 557.3 722 556.8 722 557.0 724 557.4 724 557.2 726 556.4 726 556.3 728 556.9 728 556.3 730 556.6 730 556.1 732 556.8 732 556.0 734 556.4 734 556.6 736 555.8 736 555.8 738 556.4 738 556.7 740 555.8 740 555.5 742 555.8 742 555.5 744 555.6 744 555.5 746 555.1 746 554.7 748 554.9 748 555.1 750 555.2 750 554.8 752 555.6 752 554.7 754 554.7 754 554.6 756 554.6 756 554.5 758 554.9 758 554.0 760 554.3 760 554.1 762 554.2 762 554.5 764 553.6 764 553.9 766 553.8 766 553.5 768 553.0 768 553.5 770 553.2 770 552.7 772 553.4 772 552.8 774 553.1 774 552.7 776 552.9 776 552.6 778 553.1 778 552.9 780 552.9 780 552.7 782 552.2 782 552.3 784 552.2 784 552.4 786 552.3 786 552.1 788 552.0 788 552.3 790 552.2 790 552.3 792 551.6 792 551.4 794 551.1 794 552.8 796 551.3 796 551.3 798 550.5 798 551.6 800 551.6 800 551.2 801 551.8 802 551.7 804 550.9 804 551.6 806 551.4 806 550.5 807 550.6 808 551.3 810 550.2 810 550.6 812 550.7 812 550.5 813 550.5 814 550.0 816 550.1 816 550.6 817 550.4 818 549.9 820 550.3 820 550.4 822 550.8 822 549.6 823 549.9 824 549.9 826 550.1 826 549.9 828 549.6 828 550.0 829 549.5 830 548.8 832 549.6 832 549.3 834 548.7 834 549.2 835 548.6 836 548.7 838 548.7 838 549.0 840 549.1 840 548.4 841 548.7 842 548.8 844 549.5 844 548.7 845 547.6 846 548.2 848 547.8 848 548.3 850 548.8 850 548.2 851 547.5 852 548.1 854 548.2 854 548.1 856 548.4 856 548.0 857 547.8 858 547.4 860 547.5 860 548.1 862 548.3 862 547.7 863 547.8 864 547.2 866 547.8 866 547.1 868 547.5 868 546.8 869 547.2 870 547.8 872 547.9 872 546.9 873 547.3 874 546.6 876 546.9 876 546.2 878 546.8 878 547.0 879 547.4 880 546.4 882 546.6 882 546.6 884 545.5 884 546.1 885 546.7 886 546.1 888 546.8 888 546.4 890 545.8 890 546.6 891 546.0 892 546.0 894 545.9 894 546.2 896 546.3 896 545.8 897 545.5 898 546.0 900 545.3 900 545.2 901 545.4 902 545.1 903 545.1 904 544.9 906 545.2 906 545.2 907 545.1 908 544.7 910 545.3 910 544.5 912 545.4 912 544.3 913 544.7 914 543.9 916 544.7 916 544.5 918 545.3 918 544.8 919 544.6 920 544.4 922 544.3 922 544.4 924 544.5 924 544.1 925 544.9 926 544.5 928 544.0 928 544.2 929 543.7 930 544.4 931 544.2 932 543.8 934 543.3 934 544.4 935 544.5 936 544.3 938 544.3 938 543.7 940 543.4 940 543.7 941 543.5 942 543.4 944 543.4 944 543.4 946 543.4 946 543.0 947 543.8 948 543.5 950 543.2 950 542.2 952 543.5 952 542.9 953 543.4 954 543.1 956 543.3 956 542.3 957 542.8 958 543.1 959 542.5 960 543.1 962 542.7 962 543.2 963 542.8 964 542.5 966 542.5 966 542.9 968 542.8 968 543.1 969 543.2 970 542.5 972 541.9 972 542.1 974 542.1 974 542.2 975 542.2 976 542.2 978 541.5 978 542.2 980 541.6 980 542.5 981 542.4 982 542.0 984 542.4 984 541.3 985 541.7 986 541.6 987 541.9 988 541.5 990 541.9 990 541.1 991 541.1 992 541.8 993 541.8 994 542.0 996 542.0 996 540.9 997 541.1 998 540.7 1000 541.1 1000 540.9 1002 540.9 1002 541.3 1003 541.0 1004 540.7 1006 541.0 1006 541.4 1008 541.3 1008 539.9 1009 541.2 1010 541.1 1012 540.8 1012 540.8 1013 540.4 1014 540.9 1015 540.4 1016 540.6 1018 540.6 1018 540.6 1019 540.9 1020 540.7 1021 540.9 1022 540.6 1024 540.4 1024 540.3 1026 540.8 1026 540.6 1028 540.4 1028 539.8 1030 540.1 1030 540.0 1032 539.7 1032 539.9 1034 540.3 1034 539.4 1036 540.1 1036 539.5 1038 539.8 1038 539.7 1040 539.4 1040 540.0 1042 540.3 1042 539.7 1044 539.8 1044 539.8 1046 539.7 1046 540.2 1048 539.6 1048 539.7 1050 539.4 1050 539.6 1052 539.6 1052 539.2 1054 539.0 1054 539.4 1056 539.7 1056 539.6 1058 538.9 1058 539.9 1060 539.2 1060 539.1 1062 539.0 1062 539.9 1064 539.0 1064 539.9 1066 539.3 1066 539.4 1068 539.7 1068 538.4 1070 539.1 1070 539.5 1072 539.3 1072 538.9 1074 538.6 1074 538.8 1076 539.2 1076 538.2 1078 538.6 1078 538.1 1080 538.1 1080 538.5 1082 538.1 1082 538.5 1084 538.1 1084 539.0 1086 539.1 1086 538.8 1088 538.1 1088 538.2 1090 538.5 1090 538.4 1092 538.4 1092 538.1 1094 537.7 1094 537.7 1096 538.1 1096 538.0 1098 537.8 1098 538.3 1100 537.9 1100 537.7 1102 537.7 1102 538.0 1104 538.1 1104 538.1" fill="none" stroke="#2040e0" stroke-width="1.0" stroke-linejoin="round"/><path d="M288 657.2 288 658.0 290 658.7 290 659.2 292 658.8 292 658.5 294 659.4 294 659.9 296 659.6 296 660.3 298 660.5 298 660.7 300 661.1 300 661.0 302 661.2 302 661.7 304 662.1 304 661.9 306 663.1 306 662.4 308 662.5 308 662.0 310 662.6 310 661.6 312 661.8 312 661.2 314 660.5 314 660.4 316 660.0 316 659.1 318 658.4 318 657.1 320 657.0 320 655.9 322 654.9 322 654.2 324 653.8 324 653.4 326 651.8 326 650.8 328 650.4 328 649.5 330 649.2 330 648.3 332 647.4 332 647.2 334 646.1 334 645.8 336 645.4 336 644.1 338 643.6 338 642.6 340 641.8 340 641.3 342 640.3 342 639.8 344 638.5 344 638.3 346 637.7 346 636.1 348 636.3 348 634.9 350 634.1 350 633.0 352 632.6 352 631.8 354 631.6 354 629.9 356 629.9 356 628.8 358 628.3 358 626.9 360 627.0 360 626.5 362 624.9 362 625.0 364 624.0 364 623.4 366 623.5 366 622.1 368 622.3 368 621.4 370 620.8 370 620.6 372 620.4 372 619.4 374 619.6 374 619.4 376 618.1 376 617.7 378 618.5 378 617.5 380 617.1 380 617.7 382 616.6 382 615.6 384 616.0 384 614.9 386 614.3 386 614.7 388 614.6 388 614.0 390 614.3 390 613.0 392 612.9 392 613.3 394 612.8 394 612.4 396 611.6 396 611.4 398 611.6 398 611.1 400 611.0 400 610.4 402 610.4 402 609.3 404 609.6 404 609.6 406 609.7 406 609.5 408 608.5 408 608.2 410 607.7 410 608.4 412 607.5 412 608.0 414 607.1 414 606.9 416 606.8 416 606.7 418 606.6 418 606.3 420 606.6 420 605.5 422 605.9 422 605.2 424 605.0 424 604.5 426 604.5 426 604.3 428 604.0 428 603.5 430 603.8 430 603.8 432 603.2 432 603.0 434 602.5 434 602.4 436 602.2 436 601.6 438 601.7 438 601.3 440 601.5 440 600.5 442 600.6 442 600.9 444 600.7 444 599.5 446 599.8 446 599.0 448 598.5 448 599.0 450 598.7 450 598.3 452 598.6 452 598.7 454 597.1 454 597.8 456 597.3 456 596.4 458 596.6 458 596.0 460 596.0 460 596.3 462 595.8 462 595.2 464 595.3 464 594.3 466 594.2 466 594.6 468 593.5 468 593.6 470 593.2 470 592.5 472 593.2 472 592.5 474 591.8 474 592.1 476 590.8 476 592.2 478 590.3 478 590.1 480 590.3 480 589.7 482 589.7 482 588.4 484 588.8 484 588.3 486 588.1 486 588.4 488 588.3 488 587.2 490 586.4 490 586.4 492 586.4 492 585.8 494 585.8 494 584.9 496 584.9 496 584.7 498 583.7 498 584.4 500 584.2 500 583.7 502 583.5 502 583.2 504 582.5 504 582.2 506 582.8 506 582.1 508 581.8 508 582.0 510 580.8 510 580.7 512 580.3 512 580.5 514 580.2 514 579.6 516 579.4 516 579.4 518 578.8 518 579.0 520 578.1 520 578.1 522 578.2 522 578.3 524 577.5 524 576.9 526 577.1 526 576.4 528 576.4 528 576.0 530 576.8 530 576.3 532 575.9 532 575.7 534 575.6 534 575.5 536 576.0 536 574.6 538 574.6 538 574.9 540 574.6 540 574.7 542 573.9 542 574.2 544 573.6 544 574.0 546 574.1 546 574.2 548 573.3 548 573.5 550 573.0 550 572.6 552 572.8 552 572.2 554 572.8 554 572.8 556 572.3 556 572.3 558 571.6 558 572.7 560 572.3 560 571.3 562 572.0 562 571.6 564 571.6 564 571.3 566 570.5 566 570.7 568 571.0 568 570.2 570 571.1 570 570.6 572 569.9 572 570.9 574 570.7 574 570.6 576 570.3 576 569.8 578 569.4 578 569.4 580 569.3 580 569.5 582 569.7 582 569.8 584 569.3 584 569.6 586 569.6 586 568.9 588 569.3 588 569.0 590 568.0 590 568.5 592 568.4 592 568.6 594 568.7 594 568.1 596 568.4 596 568.2 598 568.3 598 567.8 600 567.8 600 568.5 602 568.0 602 567.6 604 566.8 604 567.7 606 567.2 606 566.8 608 566.7 608 567.2 610 566.6 610 566.7 612 566.7 612 566.8 614 567.2 614 566.6 616 566.9 616 565.9 618 566.0 618 565.4 620 566.5 620 566.4 622 565.8 622 565.6 624 565.3 624 565.9 626 566.0 626 565.7 628 564.0 628 565.5 630 565.2 630 564.6 632 564.6 632 564.9 634 565.7 634 564.3 636 564.6 636 563.8 638 564.2 638 563.9 640 564.7 640 563.9 642 563.8 642 563.9 644 563.5 644 563.3 646 563.6 646 563.1 648 562.7 648 562.9 650 563.1 650 562.8 652 562.9 652 562.6 654 562.3 654 562.7 656 562.2 656 561.7 658 562.3 658 562.4 660 562.2 660 561.7 662 561.7 662 562.0 664 562.6 664 561.4 666 561.3 666 561.2 668 561.5 668 562.0 670 561.2 670 561.3 672 560.7 672 560.2 674 560.4 674 560.7 676 560.2 676 560.6 678 560.1 678 560.2 680 560.3 680 559.9 682 559.9 682 559.3 684 559.8 684 559.7 686 559.1 686 559.3 688 559.3 688 558.5 690 560.1 690 559.6 692 559.2 692 558.4 694 558.2 694 558.6 696 558.8 696 559.0 698 558.2 698 558.2 700 558.4 700 557.7 702 557.4 702 558.3 704 557.7 704 558.2 706 557.6 706 558.0 708 557.5 708 556.7 710 557.5 710 556.7 712 556.6 712 556.6 714 557.1 714 557.4 716 556.8 716 556.5 718 556.8 718 556.9 720 556.9 720 555.3 722 557.0 722 555.9 724 556.3 724 555.6 726 555.5 726 556.2 728 555.8 728 555.8 730 555.4 730 555.6 732 555.2 732 555.2 734 555.5 734 554.8 736 554.9 736 554.8 738 555.1 738 554.6 740 554.9 740 554.2 742 554.5 742 555.4 744 554.2 744 554.2 746 554.3 746 553.9 748 554.7 748 553.9 750 554.3 750 553.8 752 554.1 752 554.2 754 553.8 754 554.2 756 553.5 756 553.2 758 552.9 758 553.1 760 553.4 760 553.2 762 553.1 762 552.5 764 553.3 764 553.0 766 553.5 766 552.2 768 553.1 768 553.0 770 553.2 770 552.3 772 552.4 772 552.4 774 552.7 774 552.3 776 551.6 776 552.5 778 551.9 778 551.4 780 552.2 780 551.5 782 551.4 782 551.9 784 551.5 784 551.2 786 551.1 786 551.5 788 551.8 788 551.1 790 551.0 790 550.8 792 550.5 792 550.5 794 550.5 794 550.9 796 550.2 796 550.2 798 550.7 798 550.7 800 550.9 800 550.5 801 550.3 802 550.3 804 550.0 804 550.1 806 550.4 806 549.5 807 550.5 808 549.5 810 549.8 810 549.6 812 549.9 812 549.6 813 548.9 814 549.7 816 549.3 816 549.3 817 550.4 818 549.4 820 549.0 820 549.3 822 549.1 822 549.4 823 548.3 824 548.7 826 548.9 826 549.0 828 548.3 828 548.6 829 548.3 830 548.3 832 548.9 832 548.2 834 549.2 834 549.2 835 548.3 836 547.5 838 547.9 838 547.8 840 548.3 840 548.0 841 547.7 842 548.6 844 548.0 844 547.9 845 547.3 846 547.1 848 547.7 848 546.9 850 547.3 850 547.4 851 546.8 852 547.5 854 547.4 854 547.6 856 547.3 856 547.8 857 546.0 858 546.6 860 546.1 860 547.3 862 547.4 862 546.1 863 546.7 864 546.7 866 546.7 866 546.9 868 546.7 868 545.6 869 546.7 870 545.7 872 546.0 872 545.8 873 545.6 874 546.4 876 545.6 876 545.7 878 544.9 878 545.6 879 545.4 880 545.6 882 545.5 882 545.5 884 545.5 884 545.1 885 545.3 886 545.2 888 545.0 888 545.5 890 545.3 890 545.0 891 544.9 892 544.4 894 545.8 894 545.2 896 545.3 896 544.8 897 544.9 898 545.4 900 545.1 900 545.0 901 545.3 902 545.0 903 544.8 904 544.1 906 544.4 906 544.6 907 544.6 908 544.4 910 543.8 910 543.7 912 544.4 912 544.2 913 544.0 914 543.9 916 544.3 916 543.7 918 543.5 918 543.5 919 543.1 920 543.3 922 543.7 922 544.1 924 543.6 924 543.7 925 543.1 926 543.4 928 543.8 928 543.5 929 542.7 930 543.5 931 543.1 932 542.8 934 543.0 934 543.5 935 543.5 936 543.3 938 542.7 938 542.8 940 543.1 940 542.8 941 542.6 942 543.3 944 543.1 944 542.6 946 542.2 946 542.6 947 542.4 948 541.9 950 542.7 950 542.3 952 542.4 952 541.6 953 542.4 954 542.5 956 541.8 956 541.0 957 541.7 958 541.5 959 541.5 960 541.7 962 541.9 962 541.2 963 541.6 964 542.1 966 541.9 966 541.6 968 541.9 968 541.6 969 541.7 970 541.6 972 542.0 972 540.9 974 541.8 974 541.8 975 541.1 976 541.3 978 541.3 978 540.5 980 541.4 980 541.6 981 541.4 982 541.3 984 540.9 984 540.8 985 540.5 986 541.0 987 540.7 988 541.1 990 540.9 990 540.7 991 541.1 992 540.0 993 540.8 994 540.9 996 540.9 996 540.4 997 539.8 998 540.9 1000 540.3 1000 540.7 1002 540.0 1002 540.5 1003 541.1 1004 540.6 1006 540.3 1006 540.3 1008 539.6 1008 539.9 1009 540.4 1010 539.7 1012 540.0 1012 539.2 1013 540.0 1014 540.1 1015 539.7 1016 539.1 1018 539.9 1018 539.2 1019 539.7 1020 539.6 1021 539.1 1022 539.2 1024 539.3 1024 538.8 1026 539.7 1026 540.3 1028 539.2 1028 539.3 1030 539.4 1030 538.9 1032 540.1 1032 539.4 1034 538.7 1034 539.1 1036 538.7 1036 539.0 1038 539.5 1038 539.5 1040 539.0 1040 539.5 1042 538.4 1042 539.2 1044 539.5 1044 539.0 1046 538.6 1046 538.8 1048 538.8 1048 538.9 1050 539.3 1050 538.6 1052 538.3 1052 539.0 1054 538.4 1054 539.2 1056 538.4 1056 538.8 1058 538.1 1058 538.9 1060 538.8 1060 538.5 1062 538.3 1062 538.4 1064 538.0 1064 538.2 1066 538.3 1066 537.5 1068 537.7 1068 538.0 1070 537.9 1070 538.7 1072 538.4 1072 537.1 1074 538.4 1074 537.5 1076 537.7 1076 537.9 1078 536.8 1078 537.8 1080 537.1 1080 537.9 1082 537.5 1082 537.5 1084 537.5 1084 537.1 1086 537.4 1086 537.9 1088 537.3 1088 538.0 1090 536.8 1090 536.9 1092 536.9 1092 537.3 1094 537.0 1094 538.0 1096 537.4 1096 537.0 1098 537.9 1098 537.0 1100 537.1 1100 536.9 1102 537.1 1102 536.4 1104 536.9 1104 536.4" fill="none" stroke="#ffc000" stroke-width="1.0" stroke-linejoin="round"/><path d="M288 655.6 288 656.7 290 657.3 290 657.0 292 657.0 292 657.4 294 658.0 294 657.4 296 658.6 296 658.3 298 659.8 298 659.4 300 659.9 300 659.8 302 659.5 302 660.9 304 661.1 304 661.1 306 661.3 306 661.3 308 661.4 308 661.6 310 661.3 310 661.2 312 660.4 312 660.7 314 659.7 314 659.3 316 658.9 316 657.9 318 658.3 318 656.7 320 656.3 320 656.1 322 654.6 322 653.5 324 653.6 324 651.9 326 651.6 326 650.8 328 649.2 328 648.6 330 648.1 330 647.6 332 647.4 332 645.7 334 645.2 334 644.6 336 643.6 336 643.3 338 642.6 338 641.6 340 640.8 340 639.7 342 639.7 342 638.1 344 637.9 344 636.7 346 636.2 346 636.2 348 634.8 348 634.0 350 633.3 350 631.4 352 631.7 352 630.6 354 629.8 354 629.5 356 629.1 356 628.2 358 626.6 358 626.7 360 625.6 360 625.0 362 624.8 362 623.5 364 623.0 364 623.1 366 622.4 366 621.7 368 620.6 368 620.8 370 620.8 370 619.0 372 619.6 372 619.0 374 618.6 374 618.8 376 617.1 376 616.9 378 616.5 378 616.4 380 614.9 380 616.3 382 615.4 382 615.2 384 615.6 384 614.7 386 614.2 386 613.8 388 613.6 388 613.2 390 612.8 390 612.6 392 611.7 392 611.9 394 611.1 394 610.8 396 611.0 396 611.1 398 610.3 398 609.7 400 610.8 400 609.8 402 608.5 402 609.2 404 609.2 404 608.9 406 608.6 406 608.3 408 608.4 408 607.6 410 607.4 410 607.7 412 606.4 412 606.3 414 606.6 414 606.3 416 605.8 416 605.7 418 605.3 418 604.8 420 604.4 420 604.4 422 604.6 422 604.5 424 604.7 424 603.8 426 603.0 426 603.2 428 603.4 428 602.8 430 602.9 430 602.5 432 602.5 432 601.4 434 602.6 434 602.0 436 601.1 436 602.0 438 601.1 438 601.2 440 600.3 440 600.2 442 600.0 442 599.7 444 599.6 444 598.5 446 599.1 446 599.1 448 598.5 448 598.8 450 598.4 450 597.3 452 597.4 452 597.2 454 596.5 454 597.0 456 597.0 456 595.7 458 595.9 458 594.6 460 595.8 460 594.9 462 594.8 462 594.2 464 594.1 464 593.9 466 592.9 466 592.7 468 592.7 468 592.3 470 592.1 470 592.6 472 591.9 472 591.2 474 590.9 474 590.0 476 590.7 476 590.1 478 589.7 478 589.4 480 588.7 480 589.1 482 588.1 482 588.0 484 588.4 484 588.1 486 587.3 486 586.3 488 586.5 488 586.1 490 585.9 490 586.2 492 585.6 492 585.7 494 584.5 494 584.6 496 583.7 496 583.9 498 584.1 498 583.4 500 582.6 500 582.8 502 582.4 502 582.7 504 582.0 504 581.2 506 581.3 506 580.9 508 580.6 508 580.7 510 580.1 510 579.9 512 579.9 512 578.7 514 578.5 514 578.3 516 578.6 516 578.9 518 577.8 518 578.1 520 577.3 520 577.5 522 577.4 522 577.6 524 576.5 524 576.2 526 576.0 526 575.6 528 576.4 528 575.5 530 575.0 530 574.8 532 575.6 532 574.7 534 574.2 534 574.2 536 574.6 536 573.8 538 573.9 538 573.3 540 573.9 540 573.5 542 573.4 542 573.0 544 573.6 544 573.0 546 573.3 546 572.7 548 572.7 548 572.4 550 572.0 550 572.0 552 571.8 552 571.7 554 571.8 554 571.8 556 571.4 556 572.0 558 571.1 558 571.3 560 571.3 560 570.8 562 570.7 562 571.0 564 570.5 564 570.2 566 570.6 566 569.9 568 570.6 568 570.3 570 569.6 570 569.9 572 569.9 572 569.4 574 569.2 574 569.4 576 569.1 576 569.1 578 569.2 578 568.8 580 568.9 580 569.5 582 568.8 582 568.3 584 568.4 584 568.4 586 568.5 586 568.7 588 568.4 588 568.5 590 568.4 590 567.6 592 567.9 592 568.0 594 567.3 594 567.1 596 567.9 596 567.0 598 567.6 598 566.1 600 566.8 600 567.6 602 566.3 602 567.0 604 566.4 604 565.8 606 566.0 606 566.9 608 566.1 608 566.3 610 565.9 610 566.0 612 565.9 612 565.1 614 565.9 614 565.1 616 565.8 616 565.4 618 565.8 618 564.7 620 565.0 620 565.4 622 564.8 622 564.9 624 564.8 624 564.8 626 564.2 626 564.6 628 563.9 628 563.9 630 563.7 630 563.6 632 563.7 632 564.0 634 563.3 634 564.1 636 563.7 636 563.0 638 563.9 638 563.5 640 563.6 640 562.8 642 563.3 642 562.7 644 562.7 644 561.9 646 561.7 646 562.7 648 562.5 648 562.2 650 562.2 650 562.1 652 562.0 652 561.5 654 561.2 654 562.1 656 561.3 656 561.4 658 561.7 658 561.3 660 561.3 660 561.0 662 560.9 662 561.5 664 560.9 664 560.6 666 560.8 666 561.6 668 559.9 668 560.3 670 560.0 670 560.3 672 560.3 672 559.5 674 559.8 674 559.9 676 559.5 676 559.6 678 559.3 678 559.0 680 559.2 680 559.3 682 558.8 682 558.5 684 558.8 684 558.8 686 558.7 686 558.8 688 558.2 688 558.5 690 558.4 690 558.1 692 557.6 692 557.6 694 558.3 694 557.3 696 557.5 696 557.6 698 557.2 698 557.4 700 556.7 700 557.6 702 556.7 702 557.3 704 557.1 704 556.6 706 557.6 706 556.4 708 556.2 708 557.2 710 556.7 710 556.0 712 556.7 712 556.7 714 555.5 714 556.2 716 555.4 716 555.5 718 555.7 718 556.0 720 555.2 720 555.3 722 555.7 722 555.6 724 555.4 724 555.6 726 555.3 726 554.8 728 555.3 728 555.0 730 554.9 730 554.7 732 554.8 732 554.4 734 554.0 734 554.8 736 554.5 736 554.2 738 553.7 738 554.1 740 554.1 740 553.5 742 553.8 742 554.1 744 553.5 744 553.5 746 553.7 746 554.0 748 553.5 748 553.1 750 553.0 750 553.6 752 553.4 752 552.6 754 553.5 754 552.4 756 552.4 756 551.9 758 553.1 758 552.1 760 552.6 760 552.3 762 552.6 762 551.8 764 551.9 764 552.4 766 552.4 766 551.7 768 551.9 768 551.6 770 551.5 770 551.4 772 551.4 772 551.6 774 551.0 774 551.0 776 551.2 776 551.0 778 551.0 778 551.0 780 551.1 780 550.3 782 551.0 782 550.2 784 550.4 784 550.3 786 550.2 786 550.3 788 550.8 788 550.8 790 550.5 790 550.4 792 550.1 792 550.1 794 549.8 794 550.5 796 549.8 796 550.0 798 550.0 798 549.9 800 549.6 800 549.9 801 549.2 802 549.1 804 549.6 804 549.5 806 549.2 806 548.7 807 548.9 808 549.3 810 549.0 810 549.3 812 549.0 812 549.2 813 548.5 814 548.7 816 548.6 816 549.1 817 548.6 818 548.5 820 547.9 820 548.9 822 548.6 822 548.5 823 547.9 824 548.2 826 547.5 826 547.3 828 548.5 828 547.3 829 547.5 830 547.4 832 547.4 832 547.6 834 547.6 834 547.6 835 547.7 836 547.2 838 547.2 838 547.1 840 547.0 840 547.6 841 547.0 842 547.2 844 547.2 844 546.8 845 546.4 846 546.8 848 546.5 848 546.0 850 546.3 850 546.2 851 546.6 852 546.0 854 546.4 854 545.7 856 545.4 856 546.3 857 545.9 858 545.9 860 545.4 860 546.3 862 545.4 862 545.3 863 545.6 864 545.4 866 545.6 866 545.4 868 545.5 868 545.9 869 545.6 870 545.5 872 545.0 872 545.3 873 545.0 874 544.7 876 545.2 876 544.8 878 545.4 878 544.8 879 544.5 880 544.4 882 543.4 882 544.8 884 544.6 884 544.5 885 544.7 886 544.5 888 544.9 888 544.5 890 543.2 890 544.5 891 543.9 892 543.7 894 543.6 894 543.8 896 543.9 896 543.6 897 543.5 898 544.4 900 543.3 900 543.7 901 543.3 902 543.3 903 543.5 904 544.0 906 544.1 906 543.1 907 543.6 908 543.9 910 543.5 910 543.3 912 542.7 912 543.6 913 543.0 914 543.0 916 543.2 916 543.3 918 542.4 918 543.0 919 542.7 920 542.9 922 542.1 922 542.6 924 542.8 924 542.3 925 542.5 926 542.9 928 543.0 928 542.6 929 542.6 930 542.9 931 543.0 932 542.2 934 542.2 934 541.9 935 542.6 936 542.1 938 542.0 938 542.1 940 542.3 940 541.9 941 542.0 942 542.0 944 541.9 944 542.1 946 542.0 946 541.7 947 541.6 948 541.3 950 541.6 950 541.8 952 541.8 952 541.1 953 541.5 954 541.7 956 540.7 956 540.8 957 541.4 958 541.2 959 541.4 960 541.1 962 540.5 962 541.0 963 540.5 964 540.4 966 541.5 966 541.0 968 540.3 968 540.9 969 540.9 970 540.9 972 540.3 972 540.6 974 539.6 974 540.3 975 541.2 976 540.8 978 540.3 978 539.6 980 539.9 980 540.5 981 540.4 982 540.7 984 539.7 984 540.7 985 539.7 986 539.7 987 539.8 988 539.5 990 539.1 990 540.1 991 539.2 992 540.5 993 539.9 994 539.8 996 539.7 996 539.2 997 539.6 998 539.9 1000 539.9 1000 539.6 1002 539.2 1002 539.8 1003 539.6 1004 539.6 1006 539.1 1006 539.1 1008 539.6 1008 539.6 1009 539.4 1010 539.0 1012 538.6 1012 539.0 1013 539.3 1014 538.2 1015 538.6 1016 539.8 1018 538.6 1018 538.4 1019 538.4 1020 539.0 1021 539.3 1022 538.7 1024 538.4 1024 538.4 1026 538.5 1026 538.8 1028 538.5 1028 538.5 1030 538.6 1030 537.8 1032 538.5 1032 538.5 1034 537.6 1034 538.4 1036 538.4 1036 538.3 1038 538.7 1038 537.9 1040 538.3 1040 538.0 1042 537.7 1042 538.3 1044 538.2 1044 538.6 1046 537.7 1046 538.1 1048 537.6 1048 537.9 1050 538.0 1050 538.1 1052 537.3 1052 537.5 1054 537.3 1054 537.7 1056 538.1 1056 537.6 1058 537.3 1058 537.2 1060 537.1 1060 537.0 1062 537.0 1062 536.7 1064 538.0 1064 537.0 1066 537.0 1066 536.9 1068 537.1 1068 537.4 1070 537.0 1070 536.8 1072 537.0 1072 536.6 1074 536.6 1074 537.7 1076 536.0 1076 537.3 1078 535.9 1078 536.5 1080 537.0 1080 536.6 1082 536.7 1082 536.4 1084 537.1 1084 536.7 1086 537.4 1086 536.5 1088 536.7 1088 536.9 1090 536.8 1090 536.5 1092 536.6 1092 536.4 1094 536.5 1094 536.5 1096 536.5 1096 535.8 1098 536.3 1098 536.1 1100 535.8 1100 535.6 1102 536.5 1102 536.1 1104 536.3 1104 535.8" fill="none" stroke="#ffa000" stroke-width="1.0" stroke-linejoin="round"/><path d="M288 648.6 288 649.4 290 649.4 290 649.5 292 649.1 292 650.5 294 649.7 294 650.1 296 650.6 296 650.6 298 651.1 298 650.4 300 651.2 300 651.6 302 651.2 302 651.8 304 652.3 304 652.2 306 652.0 306 652.2 308 652.2 308 652.2 310 652.0 310 652.1 312 651.2 312 651.4 314 650.9 314 651.0 316 650.8 316 650.1 318 649.6 318 649.3 320 649.7 320 648.2 322 647.1 322 646.3 324 645.8 324 645.8 326 645.3 326 643.9 328 643.8 328 643.9 330 643.4 330 642.8 332 642.1 332 642.2 334 641.1 334 640.4 336 639.3 336 639.0 338 638.9 338 637.5 340 636.6 340 635.7 342 635.3 342 634.6 344 633.6 344 634.0 346 632.2 346 631.4 348 631.7 348 630.3 350 630.5 350 628.2 352 628.3 352 627.9 354 627.5 354 626.5 356 625.6 356 625.2 358 624.1 358 623.8 360 623.5 360 622.3 362 621.0 362 622.3 364 621.0 364 620.1 366 620.2 366 619.8 368 619.3 368 618.5 370 618.5 370 618.4 372 617.9 372 617.0 374 616.8 374 616.0 376 616.0 376 616.1 378 615.6 378 615.4 380 614.5 380 614.5 382 614.2 382 613.7 384 613.3 384 613.5 386 613.5 386 612.7 388 612.6 388 612.0 390 612.4 390 611.1 392 611.4 392 610.6 394 610.6 394 610.6 396 610.7 396 610.2 398 610.2 398 609.0 400 609.7 400 609.1 402 609.2 402 608.9 404 608.4 404 607.5 406 608.5 406 607.8 408 607.2 408 607.4 410 607.4 410 605.9 412 606.6 412 606.8 414 607.0 414 606.5 416 606.2 416 605.4 418 605.5 418 605.6 420 604.5 420 604.5 422 604.9 422 604.2 424 604.3 424 604.3 426 604.3 426 603.8 428 603.5 428 603.2 430 603.1 430 602.6 432 602.2 432 602.5 434 602.1 434 601.7 436 602.0 436 602.0 438 602.3 438 601.4 440 601.9 440 601.2 442 600.5 442 600.1 444 600.7 444 600.7 446 600.2 446 599.4 448 598.5 448 599.1 450 599.5 450 599.0 452 597.9 452 597.9 454 597.6 454 597.6 456 597.3 456 597.8 458 596.4 458 595.9 460 596.4 460 596.2 462 595.7 462 595.5 464 595.5 464 595.2 466 594.4 466 593.8 468 594.1 468 594.2 470 593.2 470 592.6 472 593.0 472 592.8 474 592.3 474 591.9 476 590.9 476 591.6 478 590.8 478 590.4 480 590.4 480 589.3 482 589.4 482 589.5 484 589.1 484 588.7 486 587.8 486 588.2 488 587.5 488 587.3 490 587.5 490 586.7 492 586.9 492 586.4 494 585.9 494 585.4 496 585.3 496 585.1 498 584.9 498 584.5 500 584.0 500 584.2 502 583.7 502 583.2 504 583.8 504 582.3 506 582.0 506 582.2 508 581.7 508 581.4 510 581.3 510 580.8 512 581.0 512 580.0 514 580.3 514 579.4 516 578.5 516 579.1 518 578.8 518 578.6 520 578.5 520 578.0 522 577.6 522 577.9 524 577.0 524 577.4 526 576.5 526 576.9 528 577.4 528 576.5 530 576.5 530 576.1 532 575.5 532 575.8 534 575.7 534 575.2 536 575.6 536 575.0 538 574.2 538 574.0 540 574.6 540 574.4 542 573.8 542 573.5 544 573.9 544 573.9 546 573.7 546 572.9 548 573.0 548 573.3 550 572.3 550 572.8 552 572.9 552 572.0 554 571.9 554 572.4 556 572.2 556 571.6 558 571.9 558 571.2 560 571.2 560 571.5 562 572.2 562 571.1 564 571.0 564 570.0 566 571.1 566 570.6 568 569.9 568 570.4 570 569.9 570 570.0 572 570.0 572 569.6 574 569.9 574 570.0 576 569.3 576 569.5 578 569.1 578 568.7 580 568.8 580 569.4 582 569.2 582 569.2 584 568.8 584 568.8 586 568.3 586 567.9 588 568.1 588 568.9 590 568.1 590 567.9 592 567.3 592 567.5 594 567.3 594 567.4 596 567.9 596 567.1 598 566.8 598 567.5 600 566.4 600 566.1 602 567.1 602 566.9 604 567.0 604 566.4 606 566.7 606 565.7 608 566.4 608 566.1 610 565.7 610 566.1 612 565.2 612 565.7 614 565.5 614 565.2 616 565.9 616 565.3 618 565.4 618 565.0 620 565.4 620 564.4 622 564.6 622 564.9 624 564.7 624 565.1 626 564.3 626 564.8 628 563.9 628 564.4 630 563.4 630 564.1 632 564.1 632 563.4 634 563.7 634 562.8 636 562.7 636 563.6 638 562.8 638 563.0 640 563.0 640 563.7 642 562.9 642 563.0 644 562.3 644 562.2 646 562.9 646 562.9 648 562.3 648 562.4 650 561.8 650 562.3 652 561.5 652 561.2 654 562.2 654 562.0 656 561.6 656 561.6 658 560.7 658 561.4 660 561.3 660 561.7 662 560.9 662 561.3 664 561.1 664 561.5 666 560.8 666 560.6 668 560.5 668 561.0 670 560.3 670 560.1 672 559.9 672 560.6 674 559.9 674 559.8 676 559.8 676 559.6 678 560.0 678 559.9 680 558.6 680 559.0 682 559.0 682 559.1 684 559.2 684 559.3 686 559.4 686 558.9 688 559.4 688 558.7 690 558.9 690 558.7 692 558.6 692 557.7 694 557.6 694 558.6 696 557.3 696 557.7 698 557.7 698 557.4 700 558.7 700 557.6 702 556.9 702 557.7 704 557.0 704 557.6 706 557.6 706 557.0 708 557.2 708 557.3 710 557.0 710 556.8 712 556.5 712 556.7 714 556.6 714 556.6 716 556.7 716 556.7 718 556.4 718 556.5 720 556.3 720 555.8 722 556.0 722 555.9 724 556.2 724 555.9 726 555.8 726 555.9 728 555.3 728 554.8 730 555.0 730 555.6 732 555.4 732 554.9 734 555.2 734 555.0 736 555.4 736 555.3 738 554.6 738 555.0 740 554.4 740 554.2 742 554.7 742 554.7 744 553.7 744 554.3 746 554.0 746 554.0 748 554.1 748 553.9 750 553.6 750 553.9 752 554.4 752 553.8 754 553.8 754 553.7 756 553.1 756 554.0 758 553.1 758 553.7 760 553.4 760 552.9 762 553.3 762 552.5 764 552.5 764 552.9 766 552.9 766 552.8 768 553.6 768 552.8 770 552.7 770 552.4 772 552.1 772 553.5 774 552.5 774 551.9 776 551.8 776 551.5 778 552.1 778 552.3 780 551.8 780 551.5 782 552.0 782 551.9 784 552.0 784 551.3 786 551.8 786 551.3 788 551.3 788 551.3 790 551.0 790 551.1 792 551.5 792 551.3 794 550.8 794 550.2 796 550.5 796 550.7 798 550.5 798 550.9 800 550.0 800 550.0 801 551.2 802 550.0 804 550.9 804 550.2 806 549.6 806 550.3 807 549.9 808 550.0 810 551.0 810 549.0 812 549.5 812 550.6 813 549.0 814 549.8 816 549.7 816 549.6 817 549.0 818 549.1 820 549.6 820 549.2 822 549.5 822 548.6 823 548.9 824 548.6 826 549.3 826 548.8 828 548.0 828 548.9 829 548.6 830 548.7 832 548.7 832 548.4 834 548.4 834 548.6 835 548.5 836 548.0 838 547.6 838 547.9 840 547.8 840 548.2 841 548.0 842 548.1 844 547.7 844 547.7 845 547.2 846 547.1 848 547.7 848 547.2 850 547.4 850 547.7 851 547.5 852 547.1 854 547.0 854 546.8 856 547.3 856 547.1 857 547.6 858 546.5 860 545.5 860 546.6 862 547.5 862 546.6 863 546.6 864 546.2 866 546.2 866 545.8 868 545.9 868 546.1 869 546.5 870 546.4 872 546.0 872 546.2 873 545.6 874 545.7 876 545.6 876 546.7 878 546.1 878 545.3 879 545.6 880 545.6 882 545.3 882 545.7 884 545.7 884 545.5 885 545.8 886 545.4 888 546.0 888 544.6 890 544.5 890 544.8 891 545.0 892 545.7 894 544.2 894 544.6 896 545.1 896 545.1 897 544.6 898 545.0 900 544.5 900 544.2 901 545.0 902 545.0 903 544.7 904 544.0 906 544.2 906 544.2 907 544.3 908 543.7 910 544.5 910 543.6 912 544.3 912 544.1 913 543.8 914 543.4 916 543.8 916 544.3 918 543.7 918 544.3 919 543.3 920 543.6 922 543.6 922 543.3 924 543.9 924 544.1 925 543.5 926 543.5 928 544.0 928 543.2 929 542.8 930 542.6 931 542.9 932 543.1 934 544.0 934 543.9 935 542.6 936 542.4 938 543.1 938 542.8 940 542.6 940 542.6 941 542.4 942 542.9 944 543.2 944 542.6 946 542.5 946 543.5 947 542.5 948 541.4 950 542.0 950 542.4 952 542.0 952 542.0 953 542.2 954 542.3 956 542.6 956 542.5 957 541.8 958 542.3 959 542.1 960 541.7 962 541.7 962 542.1 963 542.4 964 542.0 966 542.1 966 541.5 968 542.3 968 541.6 969 541.5 970 542.3 972 541.4 972 541.4 974 540.9 974 541.3 975 541.1 976 541.3 978 540.8 978 541.5 980 540.6 980 540.8 981 541.8 982 541.4 984 540.6 984 540.7 985 541.2 986 541.2 987 540.7 988 541.6 990 541.0 990 540.4 991 541.4 992 540.2 993 540.2 994 541.0 996 541.2 996 540.8 997 540.5 998 540.4 1000 540.8 1000 541.0 1002 540.1 1002 540.8 1003 540.9 1004 540.8 1006 540.2 1006 540.6 1008 540.6 1008 540.0 1009 540.7 1010 541.3 1012 540.2 1012 540.1 1013 540.1 1014 540.4 1015 540.7 1016 540.3 1018 540.5 1018 539.7 1019 540.0 1020 539.3 1021 539.7 1022 540.1 1024 539.4 1024 540.2 1026 539.5 1026 539.5 1028 539.9 1028 540.1 1030 539.8 1030 539.9 1032 539.7 1032 539.5 1034 539.6 1034 539.6 1036 539.3 1036 539.5 1038 538.9 1038 540.1 1040 539.4 1040 539.7 1042 539.0 1042 539.4 1044 538.9 1044 538.8 1046 539.4 1046 538.9 1048 538.9 1048 539.5 1050 539.4 1050 538.9 1052 539.9 1052 539.3 1054 539.3 1054 539.2 1056 539.1 1056 538.3 1058 539.2 1058 539.5 1060 539.0 1060 539.3 1062 538.6 1062 538.6 1064 539.4 1064 539.3 1066 538.7 1066 539.0 1068 538.8 1068 538.2 1070 538.7 1070 538.5 1072 539.1 1072 539.1 1074 539.0 1074 538.8 1076 538.3 1076 538.2 1078 537.9 1078 538.8 1080 538.1 1080 538.7 1082 539.0 1082 537.8 1084 538.1 1084 538.6 1086 538.3 1086 537.9 1088 537.5 1088 537.8 1090 537.8 1090 538.4 1092 538.7 1092 538.1 1094 538.5 1094 538.2 1096 537.5 1096 537.8 1098 538.3 1098 538.5 1100 538.3 1100 537.6 1102 538.7 1102 538.2 1104 537.5 1104 537.9" fill="none" stroke="#7000d0" stroke-width="1.0" stroke-linejoin="round"/><path d="M288 650.5 288 651.1 290 650.5 290 650.2 292 651.1 292 650.9 294 651.9 294 651.8 296 652.2 296 653.1 298 652.7 298 652.9 300 653.3 300 653.4 302 654.1 302 653.4 304 654.1 304 653.8 306 654.2 306 653.7 308 654.1 308 653.9 310 654.5 310 653.6 312 653.4 312 653.2 314 652.9 314 652.0 316 651.4 316 650.9 318 650.2 318 649.6 320 648.9 320 648.4 322 646.7 322 646.1 324 645.4 324 644.8 326 644.0 326 643.4 328 642.1 328 641.6 330 641.1 330 640.6 332 640.2 332 638.7 334 638.7 334 637.6 336 637.6 336 636.6 338 635.6 338 635.9 340 635.0 340 634.4 342 633.3 342 633.4 344 632.3 344 632.0 346 631.4 346 629.3 348 629.6 348 628.4 350 627.7 350 627.0 352 626.9 352 626.7 354 624.8 354 625.6 356 625.0 356 623.5 358 622.8 358 622.2 360 622.0 360 621.8 362 620.7 362 619.8 364 619.6 364 618.5 366 618.6 366 617.7 368 617.7 368 616.8 370 615.9 370 615.5 372 615.2 372 615.1 374 614.8 374 614.1 376 613.2 376 612.9 378 613.1 378 611.8 380 611.2 380 611.6 382 610.7 382 610.8 384 610.0 384 609.6 386 609.0 386 608.8 388 608.5 388 607.7 390 608.4 390 607.4 392 606.6 392 606.2 394 605.6 394 605.7 396 605.5 396 604.6 398 604.4 398 604.5 400 603.0 400 602.8 402 602.6 402 601.3 404 602.2 404 601.4 406 600.8 406 600.7 408 600.5 408 599.9 410 599.4 410 598.9 412 599.0 412 598.6 414 598.4 414 597.9 416 597.6 416 597.2 418 596.0 418 596.5 420 596.1 420 594.8 422 594.9 422 595.9 424 594.6 424 594.3 426 594.4 426 594.0 428 592.9 428 592.7 430 592.5 430 592.5 432 591.4 432 591.5 434 591.2 434 590.9 436 591.2 436 590.1 438 589.4 438 589.5 440 589.5 440 588.6 442 589.2 442 588.6 444 588.0 444 587.6 446 587.3 446 587.8 448 586.7 448 586.4 450 586.5 450 585.4 452 585.8 452 585.4 454 584.9 454 584.7 456 584.4 456 584.4 458 583.8 458 583.6 460 583.8 460 583.6 462 581.9 462 582.9 464 582.5 464 581.7 466 581.5 466 582.0 468 580.8 468 580.5 470 580.5 470 580.4 472 580.0 472 580.0 474 579.9 474 579.0 476 578.2 476 578.2 478 578.2 478 577.8 480 577.6 480 577.2 482 576.9 482 577.4 484 577.0 484 575.9 486 576.5 486 576.6 488 575.2 488 575.4 490 575.0 490 574.5 492 575.0 492 574.3 494 574.1 494 574.0 496 573.7 496 573.5 498 573.0 498 573.2 500 572.8 500 572.9 502 572.2 502 571.7 504 572.0 504 571.6 506 571.7 506 570.4 508 570.9 508 570.5 510 569.6 510 570.3 512 570.0 512 570.0 514 570.0 514 568.7 516 569.0 516 568.9 518 568.5 518 568.7 520 568.2 520 567.9 522 567.5 522 567.7 524 567.6 524 567.2 526 566.8 526 566.5 528 566.8 528 566.7 530 566.8 530 566.3 532 565.9 532 565.6 534 566.0 534 566.0 536 565.6 536 564.5 538 564.7 538 564.8 540 563.8 540 564.3 542 564.3 542 564.0 544 563.9 544 563.8 546 563.2 546 563.4 548 563.2 548 562.9 550 562.5 550 563.3 552 562.9 552 562.6 554 562.5 554 562.2 556 562.3 556 562.2 558 562.1 558 561.5 560 560.9 560 561.6 562 560.6 562 560.5 564 561.5 564 560.6 566 560.4 566 561.1 568 560.1 568 560.2 570 559.9 570 559.3 572 559.6 572 559.4 574 559.8 574 559.0 576 558.8 576 558.7 578 557.7 578 558.7 580 558.3 580 558.5 582 558.1 582 557.3 584 558.2 584 558.3 586 557.4 586 557.9 588 557.6 588 557.3 590 557.4 590 557.1 592 556.8 592 556.5 594 557.2 594 555.9 596 556.5 596 556.7 598 556.7 598 556.0 600 555.5 600 556.2 602 556.3 602 555.3 604 556.1 604 555.4 606 555.2 606 555.4 608 555.8 608 554.9 610 554.9 610 555.0 612 554.5 612 554.9 614 555.2 614 555.4 616 554.4 616 554.6 618 554.1 618 554.1 620 554.1 620 554.3 622 553.9 622 553.5 624 554.1 624 553.2 626 553.6 626 553.2 628 553.7 628 553.0 630 553.3 630 553.1 632 552.9 632 552.3 634 552.6 634 552.7 636 553.1 636 552.6 638 553.0 638 552.3 640 552.5 640 552.3 642 552.5 642 552.1 644 552.0 644 551.4 646 551.7 646 551.6 648 552.1 648 551.3 650 551.8 650 551.9 652 551.6 652 551.3 654 551.4 654 551.4 656 550.9 656 551.4 658 551.1 658 551.1 660 550.8 660 550.7 662 551.0 662 550.2 664 551.5 664 550.3 666 549.9 666 549.7 668 550.0 668 549.9 670 550.2 670 550.1 672 550.3 672 550.1 674 550.4 674 550.5 676 549.3 676 549.5 678 549.1 678 549.5 680 549.9 680 549.2 682 548.8 682 549.9 684 549.2 684 549.0 686 548.2 686 548.8 688 549.3 688 549.2 690 549.1 690 549.0 692 548.3 692 548.6 694 548.4 694 548.9 696 547.5 696 548.5 698 548.7 698 548.3 700 547.8 700 548.2 702 548.0 702 547.1 704 548.2 704 547.5 706 548.6 706 547.6 708 547.8 708 547.2 710 547.4 710 547.7 712 547.3 712 547.3 714 547.3 714 547.5 716 547.5 716 547.3 718 547.1 718 547.3 720 546.6 720 547.3 722 547.5 722 547.2 724 547.0 724 546.7 726 546.3 726 546.5 728 546.1 728 546.3 730 546.2 730 545.8 732 546.1 732 545.9 734 546.2 734 546.4 736 546.1 736 545.3 738 545.7 738 546.6 740 546.2 740 545.5 742 545.8 742 545.3 744 545.4 744 545.6 746 544.7 746 545.4 748 544.5 748 545.0 750 544.9 750 545.0 752 545.4 752 545.1 754 544.8 754 545.2 756 544.4 756 544.7 758 544.6 758 544.7 760 545.5 760 544.4 762 544.2 762 543.7 764 544.1 764 544.3 766 544.2 766 544.4 768 544.2 768 544.7 770 544.0 770 543.5 772 543.8 772 544.3 774 544.0 774 543.4 776 543.3 776 544.2 778 544.0 778 543.6 780 543.3 780 543.4 782 543.3 782 543.0 784 543.1 784 543.7 786 543.0 786 543.3 788 543.2 788 543.0 790 543.0 790 543.0 792 542.6 792 542.1 794 542.9 794 542.6 796 543.0 796 543.1 798 543.1 798 543.1 800 542.5 800 542.5 801 541.9 802 542.2 804 542.1 804 542.4 806 542.4 806 541.8 807 542.0 808 541.8 810 541.7 810 542.3 812 542.0 812 541.2 813 541.5 814 541.0 816 541.7 816 541.4 817 541.0 818 540.4 820 541.2 820 541.7 822 541.4 822 541.6 823 541.5 824 541.2 826 541.4 826 541.0 828 541.7 828 541.0 829 541.3 830 541.1 832 540.4 832 541.1 834 540.8 834 540.6 835 540.4 836 540.3 838 540.8 838 540.9 840 540.2 840 540.0 841 540.9 842 540.1 844 540.4 844 540.1 845 540.6 846 539.9 848 539.8 848 540.9 850 539.6 850 540.0 851 540.4 852 539.6 854 540.3 854 539.6 856 539.3 856 540.0 857 540.0 858 540.3 860 539.9 860 539.0 862 540.0 862 539.0 863 539.2 864 539.6 866 539.2 866 539.3 868 539.2 868 539.0 869 539.0 870 539.4 872 539.1 872 539.0 873 539.1 874 539.3 876 539.0 876 539.0 878 538.9 878 539.3 879 539.5 880 538.5 882 538.7 882 539.0 884 538.4 884 538.7 885 538.9 886 538.1 888 538.1 888 538.6 890 538.0 890 538.1 891 538.8 892 538.9 894 538.2 894 538.4 896 538.5 896 538.2 897 538.0 898 537.8 900 538.1 900 538.3 901 537.6 902 538.3 903 538.3 904 538.0 906 538.0 906 537.6 907 537.9 908 537.3 910 537.9 910 537.8 912 536.9 912 537.6 913 537.6 914 537.3 916 536.9 916 536.8 918 537.6 918 537.9 919 537.6 920 537.3 922 536.7 922 536.6 924 537.3 924 537.4 925 536.6 926 537.0 928 536.9 928 536.3 929 536.5 930 537.2 931 536.6 932 536.7 934 536.3 934 537.1 935 536.6 936 536.8 938 536.5 938 536.8 940 536.1 940 536.7 941 535.9 942 535.9 944 536.3 944 535.7 946 535.7 946 536.2 947 536.4 948 536.3 950 536.2 950 535.6 952 535.6 952 535.8 953 535.6 954 535.5 956 536.1 956 535.9 957 536.2 958 535.4 959 535.4 960 535.3 962 535.4 962 535.4 963 535.7 964 535.7 966 534.9 966 536.1 968 534.8 968 535.7 969 535.5 970 534.8 972 535.4 972 535.8 974 534.8 974 534.7 975 534.8 976 535.5 978 534.8 978 534.9 980 535.0 980 534.7 981 535.2 982 534.3 984 534.9 984 534.6 985 534.5 986 534.6 987 534.3 988 534.5 990 534.3 990 534.9 991 534.2 992 534.4 993 534.8 994 534.3 996 534.5 996 534.4 997 534.7 998 534.5 1000 534.4 1000 534.1 1002 534.0 1002 534.1 1003 534.3 1004 533.9 1006 533.5 1006 533.6 1008 533.7 1008 533.7 1009 533.8 1010 533.7 1012 533.6 1012 533.5 1013 533.4 1014 533.2 1015 533.1 1016 533.3 1018 533.6 1018 533.8 1019 534.0 1020 533.0 1021 533.1 1022 533.3 1024 533.6 1024 533.1 1026 532.7 1026 532.6 1028 532.3 1028 532.7 1030 532.7 1030 532.6 1032 533.6 1032 532.6 1034 533.2 1034 532.7 1036 533.4 1036 533.2 1038 533.1 1038 532.9 1040 532.4 1040 533.1 1042 532.4 1042 532.2 1044 533.0 1044 532.2 1046 531.9 1046 532.7 1048 532.2 1048 531.9 1050 532.6 1050 532.6 1052 532.3 1052 532.3 1054 532.6 1054 532.3 1056 532.5 1056 531.9 1058 531.2 1058 531.7 1060 532.5 1060 531.5 1062 532.3 1062 531.7 1064 532.0 1064 531.3 1066 531.8 1066 531.7 1068 531.7 1068 531.7 1070 531.5 1070 531.0 1072 531.0 1072 531.3 1074 531.5 1074 531.5 1076 530.9 1076 531.7 1078 531.7 1078 531.6 1080 531.2 1080 531.2 1082 531.1 1082 531.3 1084 531.4 1084 531.9 1086 531.0 1086 531.3 1088 530.7 1088 531.4 1090 530.9 1090 530.7 1092 530.8 1092 530.6 1094 530.5 1094 530.7 1096 530.4 1096 530.7 1098 530.7 1098 529.7 1100 530.6 1100 530.7 1102 531.2 1102 530.9 1104 530.5 1104 530.7" fill="none" stroke="#d00000" stroke-width="1.0" stroke-linejoin="round"/><path d="M288 661.4 288 662.0 290 661.3 290 661.9 292 662.4 292 662.6 294 662.7 294 662.6 296 663.4 296 663.2 298 663.7 298 664.3 300 664.2 300 664.2 302 664.2 302 664.0 304 665.1 304 665.0 306 664.7 306 665.0 308 665.6 308 664.7 310 665.3 310 665.2 312 664.6 312 664.4 314 663.3 314 662.1 316 661.0 316 660.6 318 659.8 318 658.4 320 657.5 320 655.2 322 654.4 322 653.6 324 652.8 324 651.3 326 650.1 326 649.4 328 648.0 328 646.3 330 647.2 330 645.5 332 644.3 332 644.0 334 643.2 334 641.7 336 641.0 336 640.1 338 639.5 338 637.5 340 637.2 340 635.8 342 635.1 342 634.6 344 633.2 344 632.9 346 631.1 346 630.3 348 629.9 348 628.2 350 626.9 350 626.7 352 626.2 352 625.2 354 623.9 354 622.2 356 622.3 356 620.2 358 620.5 358 619.2 360 619.0 360 617.3 362 616.9 362 615.5 364 615.2 364 614.3 366 613.5 366 612.9 368 612.2 368 611.8 370 611.2 370 610.8 372 609.5 372 609.6 374 609.6 374 608.2 376 607.4 376 607.5 378 606.7 378 606.3 380 605.4 380 604.6 382 604.6 382 604.2 384 603.2 384 602.9 386 602.8 386 602.2 388 601.1 388 601.1 390 600.6 390 600.6 392 599.3 392 599.6 394 598.9 394 598.4 396 598.4 396 598.0 398 596.7 398 596.7 400 596.0 400 595.0 402 595.8 402 595.1 404 594.6 404 594.9 406 594.2 406 592.8 408 593.1 408 592.3 410 591.6 410 592.1 412 591.0 412 590.8 414 590.9 414 590.2 416 589.7 416 589.8 418 589.0 418 588.7 420 589.6 420 588.2 422 588.2 422 587.3 424 587.3 424 586.6 426 586.7 426 586.7 428 585.3 428 585.7 430 584.9 430 585.0 432 585.0 432 584.7 434 583.4 434 583.5 436 583.2 436 583.6 438 582.6 438 582.5 440 581.9 440 581.8 442 581.5 442 581.1 444 581.0 444 580.1 446 580.4 446 580.1 448 579.1 448 579.0 450 578.9 450 578.6 452 578.1 452 578.1 454 578.3 454 577.1 456 577.3 456 577.6 458 577.0 458 576.6 460 576.1 460 575.2 462 575.5 462 575.2 464 575.3 464 574.2 466 574.3 466 574.4 468 573.4 468 572.8 470 573.3 470 572.9 472 572.2 472 571.5 474 572.5 474 571.2 476 571.7 476 572.0 478 570.6 478 571.3 480 570.7 480 569.3 482 570.1 482 569.1 484 569.7 484 569.2 486 568.6 486 569.3 488 568.5 488 567.3 490 568.0 490 567.6 492 567.2 492 567.2 494 566.0 494 567.1 496 565.7 496 565.7 498 565.7 498 565.0 500 565.8 500 565.0 502 564.4 502 564.4 504 564.6 504 564.0 506 563.6 506 564.1 508 563.4 508 563.6 510 563.3 510 563.2 512 562.4 512 562.5 514 562.5 514 561.7 516 562.0 516 561.6 518 561.7 518 561.4 520 560.3 520 560.7 522 560.9 522 560.0 524 560.2 524 559.9 526 559.6 526 559.0 528 558.9 528 559.7 530 558.6 530 558.2 532 559.0 532 558.6 534 558.2 534 557.7 536 558.4 536 557.2 538 557.2 538 557.3 540 556.6 540 557.5 542 556.3 542 556.8 544 556.2 544 557.0 546 555.9 546 556.1 548 556.6 548 556.0 550 555.0 550 555.9 552 555.5 552 555.0 554 554.7 554 555.1 556 554.8 556 554.7 558 554.4 558 555.1 560 554.7 560 554.6 562 553.6 562 554.5 564 554.2 564 553.4 566 554.3 566 553.9 568 553.6 568 552.7 570 552.6 570 552.1 572 553.9 572 553.2 574 552.4 574 553.2 576 552.1 576 552.8 578 551.8 578 552.2 580 552.4 580 551.9 582 550.9 582 551.3 584 550.7 584 551.7 586 551.2 586 550.8 588 550.6 588 550.9 590 550.7 590 550.8 592 550.6 592 550.7 594 550.0 594 550.1 596 550.2 596 549.9 598 549.7 598 550.0 600 549.9 600 549.6 602 550.2 602 549.7 604 549.6 604 549.0 606 549.6 606 549.1 608 548.9 608 549.3 610 548.1 610 549.5 612 549.0 612 547.7 614 547.4 614 548.3 616 547.9 616 548.4 618 548.1 618 548.1 620 547.6 620 547.6 622 548.0 622 547.4 624 548.2 624 546.8 626 547.9 626 547.7 628 547.0 628 547.1 630 546.8 630 547.1 632 546.2 632 547.7 634 546.4 634 545.7 636 546.2 636 546.4 638 546.2 638 546.4 640 546.0 640 546.3 642 546.0 642 546.1 644 546.0 644 546.2 646 546.0 646 546.4 648 545.9 648 545.7 650 545.4 650 545.5 652 545.6 652 545.4 654 545.5 654 545.2 656 544.8 656 545.2 658 544.9 658 545.0 660 544.9 660 544.3 662 545.4 662 544.7 664 545.0 664 544.9 666 544.7 666 544.4 668 544.1 668 544.6 670 544.6 670 544.0 672 543.5 672 543.6 674 543.5 674 543.9 676 543.5 676 543.4 678 544.3 678 543.4 680 543.9 680 542.8 682 543.4 682 543.5 684 543.0 684 543.1 686 542.8 686 542.8 688 543.4 688 543.2 690 542.9 690 542.6 692 542.2 692 542.8 694 542.5 694 542.2 696 542.2 696 542.7 698 542.4 698 542.0 700 542.3 700 542.2 702 542.3 702 542.5 704 542.2 704 542.3 706 542.0 706 541.9 708 541.2 708 541.4 710 541.7 710 541.4 712 542.4 712 541.4 714 540.9 714 542.0 716 541.7 716 541.5 718 541.4 718 541.0 720 540.8 720 541.4 722 541.4 722 540.7 724 540.5 724 540.4 726 540.6 726 540.9 728 540.7 728 541.0 730 541.0 730 540.9 732 540.4 732 540.3 734 540.5 734 540.2 736 540.1 736 540.1 738 540.3 738 540.1 740 539.9 740 539.8 742 539.5 742 538.7 744 539.5 744 540.0 746 539.4 746 539.7 748 539.9 748 540.0 750 539.6 750 539.7 752 538.7 752 539.4 754 538.6 754 539.5 756 539.2 756 539.3 758 539.3 758 538.9 760 538.7 760 539.0 762 538.9 762 538.8 764 538.7 764 538.9 766 539.0 766 538.4 768 539.0 768 538.2 770 538.6 770 538.4 772 538.5 772 537.9 774 538.2 774 537.6 776 538.4 776 538.3 778 537.7 778 537.3 780 538.4 780 538.3 782 537.6 782 537.9 784 537.5 784 537.4 786 537.8 786 537.8 788 537.5 788 537.2 790 537.3 790 537.8 792 537.4 792 537.1 794 537.0 794 537.3 796 537.3 796 537.8 798 537.4 798 536.5 800 537.1 800 537.1 801 536.9 802 537.1 804 537.8 804 537.6 806 536.9 806 536.6 807 536.8 808 536.4 810 536.9 810 536.2 812 536.3 812 536.9 813 536.5 814 536.2 816 535.7 816 536.8 817 536.5 818 536.2 820 537.3 820 536.3 822 536.2 822 536.1 823 535.5 824 535.5 826 535.8 826 535.5 828 536.0 828 535.7 829 535.6 830 536.2 832 535.3 832 535.7 834 536.3 834 535.2 835 535.8 836 536.0 838 535.4 838 535.4 840 534.9 840 535.7 841 534.8 842 534.9 844 535.1 844 535.0 845 534.8 846 535.4 848 534.8 848 534.8 850 535.6 850 535.5 851 534.9 852 534.8 854 535.2 854 534.3 856 534.7 856 534.4 857 534.7 858 534.7 860 534.3 860 534.5 862 534.0 862 534.4 863 534.3 864 534.6 866 534.0 866 533.7 868 534.4 868 533.0 869 534.2 870 534.2 872 533.9 872 534.2 873 533.9 874 533.7 876 533.8 876 533.9 878 534.2 878 533.7 879 533.9 880 534.1 882 533.3 882 533.1 884 533.6 884 533.3 885 533.1 886 533.3 888 533.4 888 533.5 890 533.0 890 533.8 891 533.7 892 533.2 894 533.6 894 533.8 896 533.2 896 533.3 897 533.5 898 532.9 900 533.2 900 533.3 901 533.2 902 533.5 903 533.0 904 533.0 906 532.7 906 533.0 907 532.4 908 532.7 910 532.6 910 532.9 912 532.6 912 533.0 913 532.8 914 532.3 916 532.3 916 532.7 918 531.8 918 532.1 919 532.2 920 532.1 922 531.9 922 532.4 924 532.1 924 532.0 925 532.6 926 532.7 928 532.1 928 532.4 929 532.0 930 532.5 931 531.8 932 531.4 934 531.9 934 531.4 935 531.9 936 532.0 938 532.0 938 532.6 940 531.8 940 531.7 941 531.6 942 531.7 944 531.7 944 531.7 946 532.2 946 531.8 947 531.4 948 531.9 950 531.1 950 530.7 952 530.7 952 531.4 953 531.5 954 530.8 956 531.5 956 531.4 957 530.7 958 531.6 959 531.4 960 530.8 962 531.1 962 531.1 963 530.7 964 530.6 966 531.0 966 530.8 968 530.5 968 530.1 969 530.7 970 531.0 972 530.7 972 530.5 974 530.5 974 531.2 975 530.7 976 530.9 978 530.1 978 530.4 980 530.6 980 529.7 981 530.9 982 530.5 984 530.1 984 530.1 985 530.5 986 530.1 987 529.9 988 529.8 990 530.5 990 530.5 991 530.3 992 530.2 993 529.9 994 530.6 996 529.0 996 529.4 997 529.7 998 529.9 1000 529.3 1000 529.8 1002 529.6 1002 530.2 1003 529.7 1004 530.2 1006 529.8 1006 529.4 1008 530.0 1008 529.7 1009 530.1 1010 529.8 1012 529.7 1012 529.3 1013 529.0 1014 529.0 1015 529.5 1016 529.7 1018 529.5 1018 529.5 1019 529.4 1020 529.7 1021 529.3 1022 529.1 1024 529.1 1024 529.3 1026 529.2 1026 528.9 1028 528.9 1028 528.9 1030 528.9 1030 529.0 1032 528.6 1032 529.2 1034 528.1 1034 529.1 1036 528.7 1036 528.2 1038 528.4 1038 528.5 1040 528.8 1040 528.2 1042 528.7 1042 528.5 1044 528.7 1044 528.6 1046 528.8 1046 529.0 1048 528.0 1048 528.8 1050 528.4 1050 528.5 1052 528.5 1052 528.5 1054 528.2 1054 528.2 1056 529.1 1056 528.6 1058 528.3 1058 527.9 1060 528.2 1060 527.7 1062 528.1 1062 528.0 1064 528.1 1064 527.9 1066 528.9 1066 527.9 1068 527.8 1068 528.0 1070 528.1 1070 527.5 1072 528.2 1072 527.6 1074 527.5 1074 528.3 1076 528.3 1076 527.8 1078 527.3 1078 527.7 1080 527.8 1080 527.4 1082 527.4 1082 527.7 1084 527.4 1084 527.0 1086 527.5 1086 526.8 1088 527.1 1088 526.7 1090 527.0 1090 527.0 1092 527.4 1092 526.3 1094 527.7 1094 526.8 1096 527.0 1096 527.5 1098 527.3 1098 527.2 1100 526.7 1100 527.0 1102 527.0 1102 528.0 1104 527.3 1104 527.1" fill="none" stroke="#90f030" stroke-width="1.0" stroke-linejoin="round"/><path d="M288 647.0 288 647.6 290 646.5 290 647.5 292 647.3 292 648.5 294 648.4 294 648.1 296 648.7 296 649.0 298 648.5 298 649.2 300 649.7 300 650.0 302 649.7 302 649.8 304 649.6 304 650.2 306 650.3 306 650.2 308 649.6 308 650.4 310 649.9 310 650.3 312 650.1 312 649.7 314 648.8 314 648.4 316 647.2 316 646.5 318 645.9 318 645.2 320 644.7 320 643.3 322 642.2 322 640.8 324 640.3 324 640.0 326 638.1 326 637.6 328 637.1 328 636.8 330 635.5 330 635.3 332 634.2 332 634.1 334 633.1 334 632.1 336 631.3 336 630.5 338 629.7 338 629.5 340 628.6 340 627.6 342 627.6 342 626.6 344 625.9 344 625.3 346 623.8 346 624.3 348 623.1 348 622.6 350 622.0 350 621.0 352 621.0 352 620.1 354 619.1 354 618.2 356 617.8 356 617.3 358 617.4 358 616.3 360 615.6 360 615.3 362 613.7 362 613.6 364 612.8 364 612.4 366 611.5 366 610.2 368 610.9 368 609.8 370 609.1 370 609.1 372 608.7 372 607.3 374 606.6 374 606.0 376 606.6 376 604.5 378 605.1 378 604.4 380 602.9 380 603.5 382 601.8 382 602.1 384 602.2 384 600.3 386 600.7 386 600.4 388 599.4 388 598.4 390 598.2 390 597.6 392 597.8 392 597.0 394 596.4 394 595.2 396 595.2 396 594.8 398 594.8 398 594.2 400 593.2 400 592.3 402 591.9 402 591.5 404 591.5 404 590.4 406 589.7 406 590.3 408 588.4 408 588.6 410 588.5 410 587.1 412 587.9 412 587.8 414 586.6 414 585.7 416 585.4 416 584.7 418 584.7 418 583.6 420 583.1 420 582.9 422 582.7 422 582.2 424 582.1 424 580.4 426 580.9 426 580.1 428 580.5 428 579.7 430 579.2 430 578.8 432 578.3 432 578.1 434 577.5 434 577.1 436 577.0 436 575.8 438 575.7 438 575.8 440 575.0 440 574.6 442 574.6 442 574.4 444 574.1 444 572.7 446 573.5 446 572.9 448 572.4 448 572.3 450 571.7 450 571.4 452 571.0 452 571.0 454 570.2 454 570.1 456 569.3 456 569.2 458 569.3 458 569.5 460 568.8 460 568.9 462 567.6 462 568.0 464 567.8 464 567.8 466 567.4 466 566.4 468 566.7 468 565.8 470 566.0 470 565.8 472 566.2 472 565.2 474 565.4 474 564.4 476 564.4 476 564.6 478 563.5 478 564.0 480 563.3 480 563.3 482 563.0 482 563.1 484 562.0 484 562.0 486 562.5 486 562.1 488 561.3 488 561.4 490 561.0 490 560.7 492 560.6 492 560.7 494 559.5 494 559.5 496 559.5 496 559.7 498 559.2 498 559.7 500 558.7 500 559.0 502 558.1 502 558.6 504 558.5 504 558.2 506 557.7 506 558.3 508 556.8 508 557.0 510 556.0 510 556.8 512 557.0 512 555.9 514 556.3 514 555.9 516 555.7 516 555.4 518 555.4 518 555.0 520 555.3 520 554.8 522 554.9 522 554.3 524 554.2 524 553.7 526 554.5 526 553.7 528 553.8 528 553.4 530 553.7 530 552.9 532 553.0 532 552.9 534 552.1 534 552.3 536 552.5 536 552.0 538 552.3 538 551.9 540 551.7 540 551.0 542 550.9 542 551.3 544 551.1 544 551.8 546 551.2 546 551.4 548 550.2 548 550.7 550 550.9 550 550.3 552 549.8 552 550.1 554 550.2 554 549.5 556 549.7 556 549.8 558 550.1 558 549.5 560 549.4 560 548.9 562 549.2 562 549.1 564 548.7 564 548.5 566 547.9 566 549.0 568 548.7 568 547.7 570 548.3 570 548.4 572 547.9 572 547.3 574 547.7 574 547.6 576 547.5 576 547.6 578 547.8 578 546.5 580 547.4 580 547.1 582 546.5 582 547.3 584 547.1 584 546.3 586 546.6 586 546.4 588 546.3 588 545.5 590 546.5 590 546.4 592 545.7 592 545.5 594 545.9 594 545.9 596 546.4 596 545.9 598 545.5 598 545.4 600 545.3 600 545.1 602 545.0 602 544.4 604 545.1 604 544.5 606 545.2 606 544.7 608 544.8 608 544.7 610 544.5 610 544.0 612 544.4 612 544.8 614 543.7 614 543.3 616 543.7 616 543.8 618 543.8 618 543.5 620 542.8 620 543.2 622 543.6 622 543.0 624 543.6 624 542.7 626 543.1 626 542.7 628 543.0 628 543.6 630 542.6 630 542.9 632 542.5 632 542.0 634 542.9 634 542.6 636 542.7 636 542.2 638 542.0 638 542.0 640 541.8 640 541.5 642 541.3 642 542.5 644 542.1 644 541.5 646 541.8 646 541.1 648 540.8 648 541.5 650 541.1 650 541.1 652 540.6 652 541.1 654 540.9 654 540.5 656 540.7 656 540.8 658 539.9 658 540.8 660 540.6 660 539.5 662 540.2 662 539.8 664 540.4 664 540.8 666 539.6 666 539.9 668 540.2 668 539.6 670 539.7 670 539.5 672 539.1 672 539.7 674 539.0 674 539.4 676 538.9 676 538.7 678 538.4 678 538.5 680 539.3 680 539.3 682 538.3 682 538.9 684 538.8 684 538.7 686 537.5 686 539.0 688 538.3 688 538.2 690 538.0 690 538.2 692 538.1 692 537.9 694 537.8 694 537.9 696 537.7 696 537.5 698 538.0 698 537.9 700 536.9 700 537.3 702 536.9 702 537.6 704 536.9 704 537.5 706 536.8 706 536.9 708 536.5 708 537.2 710 536.5 710 537.0 712 537.0 712 536.4 714 537.0 714 536.3 716 536.5 716 536.2 718 536.2 718 536.2 720 536.3 720 536.3 722 536.4 722 535.7 724 536.0 724 535.2 726 535.4 726 535.9 728 535.5 728 535.1 730 535.8 730 536.1 732 535.0 732 535.6 734 535.9 734 535.1 736 535.3 736 534.8 738 534.5 738 534.3 740 534.7 740 534.6 742 535.2 742 534.2 744 534.4 744 534.9 746 534.7 746 534.9 748 534.5 748 534.5 750 534.3 750 534.9 752 533.8 752 534.1 754 534.3 754 534.1 756 534.3 756 533.7 758 533.9 758 534.1 760 533.7 760 533.9 762 533.6 762 533.8 764 533.0 764 533.2 766 533.3 766 533.1 768 533.0 768 532.6 770 533.1 770 532.9 772 532.8 772 532.7 774 532.7 774 533.1 776 532.7 776 533.0 778 532.9 778 532.8 780 532.9 780 532.1 782 532.7 782 532.1 784 532.2 784 532.5 786 531.9 786 533.3 788 532.5 788 531.5 790 532.0 790 532.2 792 531.7 792 532.4 794 532.5 794 532.1 796 532.3 796 531.9 798 531.8 798 531.7 800 531.7 800 532.1 801 531.5 802 532.1 804 531.6 804 530.7 806 531.1 806 531.6 807 531.1 808 531.1 810 531.2 810 531.5 812 530.9 812 530.8 813 530.6 814 530.6 816 530.0 816 530.7 817 531.9 818 531.0 820 530.5 820 530.9 822 530.0 822 531.0 823 530.6 824 530.5 826 530.5 826 529.7 828 530.4 828 529.9 829 530.3 830 529.5 832 529.6 832 529.2 834 530.2 834 529.9 835 529.6 836 529.8 838 530.0 838 530.3 840 529.5 840 529.5 841 529.5 842 529.5 844 529.6 844 529.5 845 530.3 846 529.1 848 529.2 848 529.1 850 529.5 850 529.4 851 529.3 852 529.0 854 529.2 854 528.7 856 528.8 856 528.7 857 528.6 858 528.7 860 529.0 860 528.9 862 529.2 862 529.3 863 528.8 864 528.1 866 528.6 866 528.5 868 528.3 868 528.4 869 528.8 870 528.6 872 527.6 872 528.2 873 527.7 874 527.7 876 528.2 876 527.4 878 527.7 878 528.6 879 528.1 880 527.6 882 528.4 882 527.7 884 527.3 884 527.7 885 527.5 886 527.6 888 527.3 888 527.3 890 527.5 890 528.2 891 527.6 892 527.5 894 526.8 894 527.2 896 527.9 896 527.0 897 527.4 898 527.2 900 526.8 900 526.7 901 525.9 902 526.4 903 526.8 904 526.5 906 526.6 906 527.1 907 526.8 908 526.2 910 526.3 910 526.4 912 526.0 912 526.3 913 526.0 914 526.6 916 526.7 916 526.2 918 525.9 918 526.0 919 526.0 920 525.6 922 526.1 922 525.8 924 526.1 924 526.0 925 525.7 926 525.2 928 526.0 928 526.2 929 525.4 930 525.2 931 525.6 932 525.8 934 525.6 934 525.7 935 526.1 936 525.5 938 525.1 938 525.7 940 524.9 940 526.1 941 525.0 942 525.9 944 525.5 944 525.6 946 525.6 946 524.4 947 525.1 948 524.5 950 524.3 950 524.8 952 525.1 952 525.1 953 525.3 954 524.8 956 524.4 956 525.1 957 525.1 958 524.8 959 524.1 960 524.8 962 524.0 962 525.1 963 524.4 964 524.0 966 524.8 966 524.7 968 524.1 968 524.5 969 524.2 970 524.1 972 523.9 972 523.6 974 524.6 974 524.2 975 523.7 976 523.8 978 523.8 978 524.3 980 523.8 980 524.3 981 523.4 982 524.0 984 524.9 984 524.9 985 523.6 986 523.1 987 523.6 988 523.5 990 523.6 990 523.7 991 523.8 992 524.2 993 523.6 994 523.3 996 523.7 996 523.4 997 523.2 998 524.0 1000 523.3 1000 523.5 1002 522.9 1002 523.1 1003 523.1 1004 523.9 1006 522.9 1006 523.5 1008 523.4 1008 523.2 1009 522.9 1010 523.2 1012 522.3 1012 522.3 1013 523.2 1014 522.9 1015 523.2 1016 523.4 1018 523.2 1018 522.5 1019 522.8 1020 523.0 1021 522.9 1022 523.1 1024 522.7 1024 522.5 1026 522.0 1026 522.4 1028 522.7 1028 522.8 1030 521.5 1030 522.6 1032 522.4 1032 523.0 1034 522.5 1034 522.5 1036 522.2 1036 521.8 1038 522.0 1038 522.5 1040 522.8 1040 522.2 1042 521.9 1042 522.4 1044 522.2 1044 521.9 1046 522.4 1046 521.7 1048 522.2 1048 521.2 1050 521.9 1050 522.1 1052 521.9 1052 522.2 1054 521.7 1054 522.2 1056 521.4 1056 521.7 1058 522.2 1058 521.4 1060 521.5 1060 522.0 1062 521.4 1062 521.6 1064 521.4 1064 522.0 1066 521.0 1066 521.6 1068 521.2 1068 520.8 1070 521.3 1070 521.0 1072 520.8 1072 521.6 1074 521.4 1074 521.1 1076 520.8 1076 521.3 1078 520.5 1078 520.7 1080 521.0 1080 521.2 1082 520.3 1082 521.2 1084 520.6 1084 521.7 1086 520.8 1086 520.7 1088 520.8 1088 520.4 1090 520.5 1090 521.1 1092 520.2 1092 520.6 1094 520.0 1094 520.7 1096 520.6 1096 520.3 1098 520.8 1098 520.3 1100 520.5 1100 520.7 1102 520.0 1102 520.1 1104 520.7 1104 519.9" fill="none" stroke="#c01010" stroke-width="1.0" stroke-linejoin="round"/><path d="M288 637.3 288 637.7 290 638.4 290 638.4 292 638.7 292 638.5 294 639.6 294 639.1 296 639.3 296 640.4 298 639.5 298 640.0 300 641.0 300 640.7 302 640.4 302 641.2 304 641.7 304 641.5 306 641.5 306 641.2 308 641.1 308 641.7 310 642.1 310 641.4 312 641.2 312 640.6 314 639.8 314 640.2 316 638.7 316 638.6 318 637.7 318 638.3 320 636.9 320 635.9 322 635.7 322 634.8 324 634.2 324 633.5 326 632.9 326 631.7 328 631.6 328 631.0 330 629.8 330 629.7 332 629.2 332 627.6 334 628.8 334 627.1 336 626.7 336 625.2 338 625.3 338 625.1 340 624.3 340 624.0 342 622.3 342 622.3 344 621.6 344 621.1 346 620.2 346 620.1 348 619.1 348 618.6 350 617.7 350 617.2 352 616.4 352 615.4 354 615.2 354 614.4 356 614.1 356 613.6 358 612.8 358 612.2 360 611.4 360 611.0 362 610.4 362 610.0 364 608.8 364 608.7 366 608.0 366 606.9 368 606.0 368 605.6 370 605.2 370 604.5 372 604.8 372 603.5 374 603.2 374 602.9 376 602.3 376 601.7 378 601.8 378 600.5 380 600.1 380 599.7 382 599.7 382 598.5 384 598.4 384 597.1 386 597.2 386 596.5 388 596.9 388 595.3 390 595.1 390 594.1 392 593.5 392 593.8 394 593.4 394 592.7 396 591.6 396 591.4 398 590.7 398 590.6 400 590.1 400 589.7 402 588.4 402 588.0 404 587.6 404 586.6 406 586.3 406 586.7 408 585.5 408 585.2 410 584.6 410 584.8 412 583.7 412 583.5 414 582.5 414 582.4 416 581.9 416 581.2 418 581.3 418 580.2 420 579.5 420 579.6 422 579.4 422 578.9 424 578.5 424 577.8 426 577.7 426 576.4 428 576.5 428 576.0 430 575.8 430 575.2 432 574.8 432 574.6 434 574.3 434 574.3 436 573.7 436 572.9 438 571.9 438 572.1 440 572.0 440 571.2 442 570.8 442 570.6 444 570.2 444 570.6 446 569.0 446 569.7 448 569.3 448 568.9 450 568.6 450 568.1 452 567.7 452 566.8 454 567.3 454 566.6 456 566.3 456 566.0 458 565.6 458 564.6 460 565.1 460 564.6 462 564.3 462 563.6 464 563.3 464 563.4 466 563.0 466 562.7 468 562.7 468 562.3 470 561.6 470 562.4 472 561.6 472 560.7 474 560.8 474 560.5 476 560.2 476 559.5 478 559.4 478 559.7 480 558.7 480 559.0 482 558.8 482 558.4 484 558.5 484 557.7 486 557.6 486 557.8 488 556.8 488 556.2 490 556.9 490 556.6 492 556.7 492 555.2 494 555.5 494 555.5 496 554.6 496 554.6 498 553.5 498 554.3 500 553.7 500 553.8 502 553.1 502 553.6 504 552.6 504 552.9 506 552.5 506 552.3 508 552.1 508 552.1 510 551.9 510 551.6 512 551.1 512 551.1 514 550.6 514 550.7 516 550.1 516 550.4 518 549.7 518 550.7 520 550.2 520 549.5 522 549.0 522 548.6 524 549.0 524 548.3 526 548.6 526 548.8 528 547.8 528 547.9 530 548.0 530 547.6 532 547.5 532 547.5 534 547.3 534 547.4 536 546.8 536 547.2 538 547.0 538 546.0 540 546.5 540 545.9 542 546.6 542 546.7 544 545.7 544 545.8 546 545.7 546 545.9 548 545.2 548 545.9 550 545.1 550 544.5 552 545.0 552 544.5 554 545.4 554 544.9 556 544.5 556 544.1 558 544.4 558 544.0 560 543.9 560 544.1 562 543.6 562 544.1 564 543.3 564 542.9 566 543.5 566 543.5 568 543.2 568 543.0 570 542.8 570 542.8 572 543.0 572 542.5 574 542.1 574 542.5 576 541.7 576 541.8 578 541.7 578 541.8 580 542.0 580 541.4 582 541.8 582 541.8 584 541.1 584 541.2 586 542.0 586 540.9 588 541.1 588 541.2 590 541.0 590 540.9 592 541.2 592 540.4 594 540.0 594 540.1 596 540.3 596 540.8 598 540.5 598 540.8 600 540.2 600 540.0 602 539.9 602 540.4 604 539.9 604 540.3 606 540.1 606 539.6 608 539.7 608 538.9 610 538.8 610 539.0 612 538.7 612 539.0 614 539.8 614 539.2 616 538.8 616 538.0 618 538.9 618 539.0 620 539.4 620 538.5 622 538.4 622 538.4 624 538.1 624 537.6 626 538.2 626 538.4 628 537.4 628 538.1 630 537.6 630 536.9 632 537.5 632 536.9 634 537.4 634 537.0 636 536.9 636 536.7 638 537.3 638 536.6 640 537.1 640 536.9 642 536.9 642 537.0 644 536.9 644 536.5 646 535.7 646 536.6 648 535.6 648 536.4 650 535.6 650 536.6 652 535.6 652 535.7 654 535.2 654 536.4 656 535.6 656 536.1 658 535.1 658 536.0 660 535.7 660 535.0 662 534.9 662 534.9 664 534.7 664 535.0 666 534.2 666 534.6 668 535.2 668 534.7 670 534.6 670 533.9 672 533.9 672 534.0 674 534.6 674 533.8 676 534.2 676 534.0 678 533.7 678 534.3 680 533.5 680 533.7 682 534.0 682 533.0 684 533.2 684 533.1 686 533.7 686 532.8 688 533.1 688 533.5 690 532.7 690 532.7 692 532.6 692 532.4 694 532.9 694 532.5 696 532.3 696 532.1 698 532.8 698 532.7 700 531.7 700 532.2 702 532.7 702 531.7 704 532.2 704 531.9 706 531.7 706 532.0 708 532.3 708 531.8 710 531.5 710 531.9 712 531.8 712 530.7 714 531.1 714 531.2 716 531.3 716 530.8 718 530.8 718 531.4 720 531.1 720 530.7 722 530.4 722 530.2 724 530.1 724 530.5 726 530.5 726 530.1 728 530.8 728 530.5 730 529.7 730 530.6 732 529.8 732 529.8 734 530.4 734 529.7 736 529.5 736 529.1 738 529.0 738 529.5 740 529.5 740 529.4 742 529.6 742 529.6 744 529.5 744 528.4 746 529.1 746 529.0 748 528.3 748 529.2 750 528.6 750 528.4 752 528.6 752 528.6 754 528.2 754 527.9 756 528.6 756 527.3 758 527.7 758 528.9 760 528.2 760 528.4 762 527.6 762 527.2 764 527.7 764 528.0 766 528.1 766 527.4 768 528.1 768 526.9 770 527.2 770 526.9 772 527.5 772 526.8 774 527.5 774 527.2 776 527.1 776 527.4 778 527.3 778 526.5 780 527.5 780 526.3 782 527.2 782 527.2 784 527.5 784 527.4 786 527.2 786 526.8 788 526.6 788 526.5 790 526.6 790 526.6 792 526.0 792 526.4 794 526.4 794 526.4 796 526.6 796 526.4 798 526.4 798 526.2 800 524.9 800 525.6 801 526.4 802 526.5 804 526.1 804 525.9 806 525.7 806 525.8 807 526.4 808 526.4 810 525.9 810 525.9 812 526.4 812 526.1 813 525.5 814 525.9 816 525.6 816 525.2 817 524.9 818 525.6 820 525.2 820 525.2 822 525.4 822 525.4 823 524.6 824 525.3 826 525.0 826 524.9 828 524.3 828 524.8 829 524.2 830 524.4 832 524.9 832 524.4 834 525.0 834 524.6 835 524.7 836 524.0 838 524.8 838 524.1 840 524.3 840 524.0 841 525.2 842 524.3 844 524.3 844 523.3 845 523.4 846 524.1 848 524.0 848 524.7 850 523.9 850 524.3 851 523.5 852 524.3 854 523.8 854 523.8 856 523.9 856 523.9 857 523.8 858 524.2 860 523.4 860 523.1 862 523.9 862 523.8 863 523.9 864 523.3 866 523.3 866 523.8 868 523.9 868 523.3 869 522.8 870 522.7 872 523.3 872 523.2 873 522.4 874 522.5 876 523.3 876 523.3 878 523.5 878 522.7 879 523.0 880 523.1 882 522.9 882 523.2 884 522.3 884 522.7 885 522.4 886 523.2 888 522.9 888 522.3 890 522.3 890 522.5 891 522.8 892 522.7 894 522.1 894 522.3 896 522.4 896 522.0 897 522.8 898 522.5 900 522.1 900 521.6 901 522.3 902 521.6 903 522.2 904 521.7 906 521.7 906 521.4 907 521.6 908 521.6 910 521.9 910 521.3 912 521.3 912 521.8 913 522.3 914 521.2 916 521.5 916 521.8 918 521.8 918 521.4 919 521.7 920 521.2 922 521.5 922 521.2 924 522.4 924 521.6 925 521.9 926 521.6 928 521.1 928 521.2 929 521.0 930 521.3 931 521.6 932 520.9 934 521.3 934 520.8 935 520.7 936 520.7 938 521.6 938 520.7 940 521.2 940 520.5 941 520.9 942 520.6 944 520.4 944 520.7 946 520.1 946 521.1 947 520.9 948 519.7 950 520.2 950 519.9 952 520.3 952 520.6 953 519.8 954 519.9 956 520.2 956 520.5 957 520.0 958 519.7 959 520.6 960 520.3 962 520.3 962 519.9 963 519.5 964 520.3 966 519.8 966 519.3 968 520.2 968 519.5 969 520.2 970 520.3 972 519.9 972 519.4 974 519.8 974 520.1 975 520.3 976 519.5 978 519.0 978 519.0 980 519.6 980 519.9 981 519.4 982 519.9 984 519.8 984 519.8 985 519.3 986 518.7 987 519.7 988 519.7 990 518.9 990 519.6 991 518.8 992 519.5 993 519.6 994 519.2 996 519.5 996 519.7 997 519.6 998 519.3 1000 518.8 1000 518.5 1002 519.3 1002 519.0 1003 518.8 1004 518.4 1006 518.9 1006 519.3 1008 518.5 1008 519.2 1009 518.7 1010 518.6 1012 518.3 1012 518.9 1013 519.0 1014 518.9 1015 519.0 1016 517.8 1018 518.6 1018 518.5 1019 518.9 1020 518.4 1021 518.3 1022 518.4 1024 517.9 1024 518.5 1026 517.9 1026 518.5 1028 518.7 1028 518.2 1030 519.0 1030 518.8 1032 518.3 1032 518.5 1034 518.3 1034 517.9 1036 517.8 1036 517.8 1038 517.9 1038 518.4 1040 518.2 1040 518.4 1042 518.4 1042 518.4 1044 517.3 1044 518.2 1046 517.8 1046 517.6 1048 517.7 1048 518.1 1050 517.7 1050 518.3 1052 518.2 1052 517.8 1054 517.4 1054 517.3 1056 517.4 1056 517.5 1058 517.4 1058 517.1 1060 517.9 1060 517.7 1062 517.9 1062 517.8 1064 517.7 1064 517.3 1066 517.7 1066 517.2 1068 517.6 1068 516.9 1070 516.9 1070 517.5 1072 517.5 1072 517.3 1074 517.0 1074 517.3 1076 516.9 1076 517.6 1078 517.5 1078 516.8 1080 516.8 1080 517.0 1082 517.3 1082 517.2 1084 517.0 1084 517.3 1086 517.0 1086 516.9 1088 516.1 1088 517.0 1090 517.1 1090 517.0 1092 516.3 1092 517.3 1094 516.5 1094 516.5 1096 516.5 1096 516.2 1098 516.9 1098 516.3 1100 516.9 1100 516.2 1102 516.5 1102 516.0 1104 516.6 1104 516.9" fill="none" stroke="#b00000" stroke-width="1.0" stroke-linejoin="round"/><path d="M288 655.9 288 656.4 290 656.9 290 657.0 292 657.6 292 658.4 294 658.6 294 659.1 296 659.3 296 660.1 298 661.0 298 661.9 300 661.4 300 662.7 302 663.0 302 663.1 304 663.5 304 664.2 306 664.7 306 663.8 308 664.1 308 664.0 310 663.0 310 663.7 312 663.0 312 662.2 314 661.3 314 660.8 316 660.4 316 658.7 318 657.6 318 656.3 320 655.8 320 653.2 322 652.6 322 651.2 324 649.0 324 647.7 326 647.3 326 645.8 328 645.4 328 643.8 330 642.9 330 642.5 332 640.3 332 640.5 334 637.8 334 638.3 336 637.7 336 635.7 338 634.3 338 634.4 340 632.6 340 631.6 342 630.9 342 629.5 344 628.6 344 627.6 346 626.6 346 625.7 348 624.3 348 623.2 350 622.8 350 621.9 352 619.7 352 619.6 354 618.8 354 618.1 356 616.2 356 615.5 358 615.0 358 613.2 360 612.5 360 612.6 362 611.4 362 610.2 364 609.3 364 608.3 366 608.7 366 607.5 368 606.2 368 605.4 370 604.6 370 604.4 372 603.1 372 602.9 374 602.0 374 601.2 376 600.9 376 600.0 378 600.2 378 598.7 380 598.4 380 597.7 382 597.3 382 597.6 384 595.6 384 595.0 386 594.0 386 594.7 388 594.1 388 592.8 390 592.5 390 591.8 392 590.6 392 590.2 394 589.7 394 588.9 396 589.3 396 588.4 398 587.5 398 587.4 400 586.2 400 586.3 402 585.0 402 585.7 404 584.2 404 584.0 406 583.6 406 582.5 408 582.0 408 582.1 410 581.8 410 580.5 412 580.2 412 579.1 414 579.2 414 578.7 416 578.4 416 578.3 418 577.6 418 576.4 420 576.5 420 576.5 422 575.7 422 575.0 424 574.9 424 574.6 426 574.2 426 573.3 428 572.9 428 572.1 430 571.8 430 571.4 432 572.0 432 570.9 434 570.4 434 570.0 436 569.5 436 569.5 438 569.0 438 568.4 440 567.7 440 567.4 442 567.1 442 567.2 444 566.0 444 565.9 446 565.8 446 565.3 448 565.4 448 565.3 450 565.4 450 563.9 452 563.7 452 563.7 454 563.1 454 563.4 456 562.1 456 561.7 458 562.2 458 561.9 460 561.8 460 561.0 462 561.4 462 560.7 464 560.3 464 559.5 466 559.6 466 558.6 468 558.4 468 558.4 470 558.4 470 557.7 472 557.4 472 556.7 474 557.5 474 556.6 476 556.6 476 556.0 478 556.1 478 555.9 480 554.8 480 555.6 482 554.7 482 554.9 484 553.9 484 554.2 486 553.8 486 553.9 488 553.6 488 553.8 490 552.3 490 552.3 492 552.8 492 551.9 494 552.1 494 551.6 496 550.9 496 550.6 498 550.3 498 550.3 500 550.6 500 550.5 502 549.6 502 549.7 504 549.5 504 550.0 506 549.8 506 549.0 508 547.9 508 548.9 510 547.9 510 547.2 512 547.9 512 547.8 514 547.4 514 546.6 516 547.0 516 546.9 518 546.7 518 546.2 520 545.3 520 546.1 522 546.0 522 545.0 524 545.6 524 545.4 526 545.0 526 544.9 528 545.0 528 544.7 530 544.6 530 543.6 532 544.2 532 543.6 534 544.0 534 543.8 536 543.6 536 543.0 538 543.1 538 542.5 540 542.0 540 542.2 542 542.6 542 542.3 544 542.3 544 542.6 546 541.8 546 542.6 548 541.3 548 541.3 550 541.4 550 541.0 552 541.5 552 541.2 554 540.8 554 540.8 556 541.2 556 540.1 558 540.5 558 540.4 560 540.3 560 540.0 562 540.3 562 539.5 564 539.3 564 539.3 566 539.3 566 539.1 568 538.9 568 538.8 570 538.5 570 538.4 572 538.0 572 538.4 574 539.2 574 538.9 576 538.0 576 538.4 578 537.7 578 537.6 580 537.5 580 538.2 582 537.7 582 537.2 584 537.5 584 537.2 586 537.4 586 536.9 588 536.6 588 537.1 590 536.0 590 536.7 592 536.5 592 536.5 594 535.9 594 536.1 596 536.3 596 536.6 598 536.0 598 536.6 600 535.7 600 536.5 602 535.3 602 535.5 604 535.6 604 534.6 606 534.9 606 535.5 608 535.2 608 534.6 610 534.8 610 534.9 612 535.4 612 534.4 614 534.0 614 535.1 616 534.3 616 534.2 618 533.3 618 534.2 620 533.6 620 533.5 622 533.7 622 534.1 624 533.5 624 533.3 626 533.2 626 533.9 628 533.9 628 532.8 630 533.2 630 533.7 632 533.3 632 533.2 634 533.2 634 533.5 636 533.1 636 532.8 638 532.6 638 532.2 640 533.2 640 532.6 642 532.9 642 532.0 644 532.2 644 532.3 646 532.2 646 531.7 648 531.8 648 532.1 650 531.7 650 531.0 652 532.1 652 531.6 654 531.8 654 531.6 656 531.6 656 531.0 658 531.3 658 530.4 660 531.2 660 531.5 662 531.0 662 530.5 664 531.1 664 530.4 666 531.1 666 530.7 668 530.2 668 530.7 670 530.3 670 530.1 672 530.1 672 529.5 674 530.4 674 529.7 676 530.1 676 529.8 678 529.8 678 529.8 680 529.4 680 529.8 682 529.9 682 528.8 684 529.4 684 529.2 686 529.9 686 529.2 688 529.0 688 529.3 690 529.2 690 529.3 692 529.3 692 528.5 694 529.2 694 528.4 696 529.1 696 528.1 698 529.1 698 528.9 700 528.7 700 528.4 702 528.3 702 528.2 704 529.3 704 528.1 706 527.3 706 528.7 708 528.0 708 528.3 710 528.3 710 527.8 712 527.6 712 528.4 714 528.1 714 527.8 716 528.3 716 527.6 718 526.9 718 527.6 720 527.3 720 527.5 722 527.4 722 527.2 724 526.2 724 527.4 726 527.7 726 526.9 728 526.7 728 527.3 730 527.5 730 527.2 732 527.0 732 527.1 734 526.3 734 527.3 736 526.7 736 526.7 738 526.6 738 526.7 740 527.1 740 526.3 742 526.4 742 526.1 744 526.4 744 525.8 746 526.4 746 525.1 748 526.4 748 526.5 750 525.5 750 525.6 752 525.8 752 525.6 754 525.9 754 525.0 756 525.5 756 525.6 758 525.1 758 525.4 760 525.1 760 525.4 762 525.0 762 525.0 764 525.0 764 525.4 766 525.1 766 525.1 768 525.0 768 524.3 770 525.1 770 524.6 772 524.7 772 524.3 774 524.6 774 524.3 776 524.8 776 524.0 778 524.1 778 524.6 780 524.6 780 525.1 782 524.4 782 524.1 784 524.3 784 525.0 786 523.3 786 523.9 788 523.5 788 523.7 790 523.8 790 523.9 792 524.1 792 523.8 794 523.8 794 523.8 796 523.3 796 523.5 798 523.2 798 523.9 800 523.7 800 523.8 801 523.8 802 523.0 804 523.3 804 523.6 806 523.1 806 522.7 807 523.4 808 523.6 810 523.1 810 523.0 812 523.5 812 523.0 813 522.5 814 522.7 816 522.6 816 522.9 817 522.5 818 522.5 820 522.7 820 522.4 822 521.6 822 523.2 823 522.7 824 521.4 826 522.7 826 522.6 828 522.2 828 522.6 829 521.9 830 522.8 832 522.5 832 521.8 834 522.1 834 521.5 835 522.0 836 521.8 838 522.6 838 521.2 840 521.1 840 521.6 841 521.4 842 521.8 844 521.0 844 520.9 845 521.7 846 521.5 848 521.0 848 522.0 850 521.7 850 520.8 851 520.9 852 520.9 854 520.8 854 521.4 856 520.7 856 520.8 857 520.7 858 521.5 860 521.1 860 521.2 862 521.1 862 520.5 863 520.5 864 520.7 866 521.3 866 520.5 868 520.6 868 520.8 869 520.7 870 520.8 872 520.3 872 520.7 873 520.5 874 520.5 876 519.8 876 520.1 878 520.1 878 520.9 879 520.3 880 520.4 882 520.0 882 519.0 884 520.0 884 519.8 885 520.0 886 519.5 888 519.7 888 519.4 890 519.3 890 519.8 891 519.3 892 520.6 894 519.4 894 520.1 896 519.3 896 519.1 897 519.8 898 519.7 900 519.6 900 519.1 901 520.0 902 519.4 903 518.9 904 519.8 906 519.1 906 519.6 907 518.9 908 519.6 910 519.5 910 519.0 912 518.8 912 518.8 913 518.8 914 518.9 916 518.9 916 518.4 918 518.6 918 518.4 919 519.2 920 518.2 922 519.3 922 518.7 924 518.2 924 518.8 925 518.8 926 518.4 928 517.9 928 518.0 929 519.0 930 518.2 931 518.5 932 518.8 934 518.6 934 518.7 935 518.6 936 518.7 938 517.8 938 518.2 940 517.8 940 517.8 941 518.6 942 517.7 944 518.5 944 518.3 946 517.8 946 518.0 947 518.0 948 517.5 950 517.8 950 519.0 952 517.1 952 516.8 953 517.4 954 517.3 956 517.5 956 517.9 957 517.5 958 517.4 959 517.4 960 517.3 962 517.6 962 517.1 963 516.7 964 516.8 966 517.1 966 517.5 968 517.6 968 517.2 969 517.6 970 517.1 972 517.1 972 516.8 974 516.6 974 516.9 975 516.9 976 516.9 978 517.2 978 516.8 980 516.4 980 516.6 981 516.9 982 516.8 984 516.5 984 516.5 985 516.4 986 517.4 987 516.4 988 516.5 990 516.6 990 516.6 991 516.9 992 516.8 993 516.7 994 516.9 996 516.7 996 516.4 997 516.5 998 517.0 1000 515.6 1000 517.4 1002 516.2 1002 516.6 1003 516.2 1004 516.1 1006 516.2 1006 516.2 1008 516.3 1008 515.7 1009 516.6 1010 515.7 1012 516.3 1012 516.0 1013 515.9 1014 516.1 1015 516.4 1016 516.2 1018 516.0 1018 516.4 1019 515.9 1020 516.4 1021 516.2 1022 515.8 1024 516.3 1024 515.5 1026 515.8 1026 516.3 1028 516.1 1028 515.4 1030 515.1 1030 515.3 1032 516.2 1032 515.3 1034 515.0 1034 515.1 1036 515.4 1036 515.2 1038 515.4 1038 515.7 1040 515.7 1040 516.1 1042 515.2 1042 515.9 1044 515.2 1044 514.8 1046 515.3 1046 515.5 1048 515.4 1048 514.9 1050 515.7 1050 514.6 1052 515.5 1052 515.4 1054 514.6 1054 515.8 1056 515.4 1056 514.9 1058 514.9 1058 515.0 1060 515.1 1060 515.4 1062 515.0 1062 515.5 1064 515.0 1064 515.2 1066 515.0 1066 514.7 1068 515.6 1068 514.8 1070 514.9 1070 515.2 1072 514.5 1072 515.0 1074 514.8 1074 515.0 1076 515.7 1076 514.6 1078 514.8 1078 513.9 1080 514.7 1080 515.1 1082 514.1 1082 514.8 1084 514.8 1084 514.7 1086 513.8 1086 513.8 1088 514.6 1088 514.4 1090 513.9 1090 514.5 1092 514.2 1092 514.3 1094 513.6 1094 513.7 1096 514.3 1096 514.5 1098 514.1 1098 514.2 1100 514.7 1100 514.2 1102 513.8 1102 514.2 1104 514.1 1104 514.3" fill="none" stroke="#900000" stroke-width="1.0" stroke-linejoin="round"/><path d="M288 657.7 288 658.1 290 658.5 290 659.7 292 659.8 292 660.6 294 660.7 294 661.6 296 661.3 296 662.4 298 662.7 298 662.3 300 663.8 300 664.0 302 664.3 302 664.7 304 665.2 304 665.2 306 665.8 306 665.6 308 665.8 308 665.5 310 665.4 310 665.4 312 665.0 312 664.6 314 663.4 314 662.7 316 662.4 316 660.2 318 660.0 318 658.7 320 656.9 320 656.3 322 654.3 322 653.0 324 651.8 324 651.0 326 649.1 326 648.7 328 646.1 328 646.0 330 644.8 330 643.0 332 642.2 332 641.7 334 641.0 334 638.9 336 638.4 336 637.5 338 635.6 338 635.2 340 633.5 340 633.6 342 632.0 342 630.1 344 629.2 344 628.5 346 627.5 346 625.8 348 624.6 348 624.4 350 623.6 350 621.9 352 620.7 352 619.8 354 619.3 354 617.9 356 616.5 356 616.1 358 614.3 358 613.7 360 612.6 360 611.8 362 610.8 362 610.7 364 609.3 364 608.2 366 607.3 366 606.5 368 605.3 368 605.3 370 604.7 370 604.2 372 603.1 372 602.2 374 601.3 374 600.7 376 600.3 376 599.1 378 598.8 378 598.0 380 597.7 380 596.5 382 596.2 382 594.9 384 594.7 384 594.1 386 593.6 386 593.0 388 592.5 388 591.2 390 591.2 390 590.9 392 590.1 392 588.9 394 588.6 394 588.0 396 587.9 396 586.7 398 586.4 398 585.9 400 585.1 400 584.8 402 584.4 402 584.3 404 582.5 404 582.2 406 581.2 406 580.5 408 580.7 408 580.5 410 579.9 410 579.7 412 579.0 412 578.3 414 578.0 414 577.3 416 576.9 416 576.3 418 576.5 418 575.1 420 575.1 420 574.5 422 573.5 422 574.0 424 572.8 424 572.4 426 572.1 426 571.8 428 571.3 428 571.0 430 570.1 430 570.1 432 569.7 432 569.3 434 568.1 434 567.6 436 567.6 436 567.3 438 567.4 438 566.5 440 566.2 440 566.5 442 565.5 442 565.4 444 565.2 444 564.5 446 563.5 446 563.4 448 563.7 448 563.4 450 562.6 450 563.2 452 561.8 452 562.5 454 561.4 454 560.8 456 560.9 456 559.6 458 560.0 458 560.0 460 559.9 460 559.6 462 558.9 462 558.0 464 558.7 464 558.3 466 557.5 466 557.6 468 557.5 468 557.3 470 556.9 470 556.4 472 555.7 472 555.3 474 555.6 474 555.7 476 554.9 476 554.4 478 554.5 478 554.4 480 554.4 480 553.4 482 553.3 482 552.8 484 552.5 484 552.0 486 551.6 486 552.1 488 552.1 488 551.3 490 551.2 490 550.8 492 551.1 492 550.6 494 550.4 494 550.2 496 549.7 496 549.7 498 549.8 498 549.8 500 548.8 500 549.6 502 547.4 502 548.1 504 548.3 504 548.1 506 547.2 506 547.8 508 547.4 508 547.5 510 546.6 510 546.3 512 546.3 512 546.3 514 546.2 514 546.3 516 546.0 516 546.2 518 545.7 518 545.2 520 544.5 520 544.1 522 543.8 522 544.4 524 544.4 524 544.2 526 543.3 526 543.0 528 543.6 528 543.4 530 542.9 530 543.4 532 543.7 532 543.2 534 542.6 534 542.7 536 542.6 536 542.1 538 542.4 538 541.3 540 542.0 540 541.6 542 541.9 542 540.9 544 540.5 544 541.2 546 541.0 546 540.3 548 540.1 548 540.1 550 540.7 550 540.5 552 540.4 552 539.7 554 539.8 554 540.1 556 539.1 556 540.3 558 539.1 558 539.6 560 539.2 560 539.2 562 538.2 562 539.3 564 538.9 564 538.0 566 538.5 566 538.0 568 537.7 568 538.1 570 537.8 570 537.4 572 537.7 572 537.5 574 537.7 574 537.1 576 536.8 576 537.1 578 536.7 578 537.3 580 537.1 580 537.1 582 536.3 582 536.0 584 536.2 584 536.2 586 536.3 586 536.1 588 536.3 588 536.0 590 536.0 590 535.9 592 536.0 592 535.3 594 535.1 594 535.3 596 534.3 596 534.8 598 535.4 598 535.5 600 534.9 600 534.6 602 534.5 602 535.4 604 534.3 604 534.3 606 534.3 606 533.9 608 534.0 608 534.5 610 533.9 610 534.5 612 533.7 612 533.8 614 533.6 614 533.4 616 534.1 616 533.2 618 533.5 618 532.9 620 533.6 620 532.7 622 533.3 622 532.7 624 532.9 624 532.9 626 533.2 626 532.9 628 532.9 628 532.8 630 532.7 630 532.1 632 532.6 632 532.3 634 532.8 634 532.3 636 531.8 636 531.8 638 532.4 638 532.0 640 532.3 640 532.0 642 531.4 642 531.0 644 531.8 644 531.0 646 531.5 646 530.7 648 531.5 648 530.5 650 530.8 650 530.8 652 530.7 652 530.7 654 531.1 654 530.2 656 530.7 656 530.6 658 530.5 658 530.7 660 531.1 660 529.8 662 530.0 662 529.9 664 529.6 664 529.6 666 530.0 666 530.1 668 529.9 668 529.0 670 529.1 670 529.5 672 529.4 672 529.2 674 529.2 674 529.3 676 529.2 676 529.6 678 529.0 678 528.9 680 529.2 680 529.3 682 528.9 682 527.8 684 529.0 684 528.7 686 529.2 686 528.4 688 528.3 688 528.5 690 528.3 690 527.0 692 527.8 692 528.6 694 527.9 694 528.2 696 527.5 696 528.1 698 527.9 698 527.4 700 528.1 700 527.7 702 527.6 702 527.1 704 527.5 704 526.7 706 527.7 706 527.2 708 527.6 708 527.1 710 527.6 710 526.7 712 526.8 712 527.5 714 526.5 714 526.3 716 527.0 716 526.6 718 526.7 718 527.0 720 526.4 720 527.0 722 526.8 722 527.0 724 526.0 724 526.2 726 526.8 726 526.9 728 525.9 728 526.5 730 525.8 730 525.9 732 525.6 732 525.9 734 525.4 734 526.6 736 525.7 736 525.8 738 525.6 738 525.2 740 525.1 740 525.1 742 525.1 742 524.8 744 525.2 744 524.8 746 524.9 746 524.9 748 525.3 748 525.0 750 525.2 750 524.3 752 525.4 752 524.7 754 524.9 754 524.6 756 524.8 756 524.9 758 524.6 758 524.5 760 524.6 760 524.8 762 524.9 762 524.6 764 524.4 764 524.1 766 524.4 766 524.4 768 524.7 768 524.2 770 523.3 770 523.5 772 524.4 772 523.9 774 523.7 774 523.2 776 523.6 776 523.5 778 523.7 778 523.1 780 524.0 780 523.6 782 523.2 782 523.7 784 523.5 784 523.8 786 523.0 786 523.1 788 522.8 788 523.2 790 523.5 790 522.6 792 522.6 792 522.8 794 522.3 794 523.4 796 523.2 796 522.6 798 523.3 798 522.7 800 522.0 800 523.1 801 522.2 802 521.7 804 522.4 804 522.7 806 521.7 806 522.4 807 521.4 808 521.8 810 522.8 810 521.8 812 522.6 812 521.6 813 522.1 814 521.8 816 521.9 816 521.6 817 521.8 818 521.1 820 521.7 820 521.6 822 522.1 822 521.4 823 521.9 824 521.4 826 521.5 826 520.9 828 521.4 828 521.6 829 520.9 830 521.8 832 521.2 832 521.1 834 520.6 834 521.7 835 521.1 836 521.0 838 521.3 838 521.0 840 521.6 840 520.9 841 520.3 842 521.1 844 521.3 844 521.6 845 520.9 846 520.7 848 520.5 848 520.8 850 520.4 850 520.6 851 519.9 852 520.2 854 520.3 854 520.1 856 519.8 856 519.7 857 520.2 858 520.2 860 520.2 860 519.6 862 520.0 862 519.6 863 519.7 864 520.8 866 520.0 866 520.4 868 520.2 868 519.2 869 519.5 870 519.5 872 519.6 872 519.4 873 519.4 874 519.8 876 519.8 876 519.4 878 519.4 878 519.4 879 519.0 880 520.0 882 519.1 882 518.7 884 519.6 884 518.5 885 519.0 886 519.0 888 519.2 888 518.4 890 519.0 890 519.1 891 518.6 892 518.4 894 519.2 894 518.6 896 519.1 896 519.1 897 518.5 898 518.4 900 518.8 900 518.1 901 518.6 902 518.5 903 518.7 904 519.1 906 518.0 906 519.2 907 518.6 908 518.5 910 518.5 910 518.0 912 518.3 912 517.7 913 518.2 914 518.4 916 517.5 916 518.1 918 518.6 918 517.9 919 517.5 920 518.3 922 517.9 922 517.3 924 517.6 924 517.2 925 517.4 926 518.1 928 517.5 928 518.5 929 517.8 930 517.5 931 517.0 932 518.0 934 517.5 934 517.4 935 517.8 936 516.5 938 517.5 938 517.6 940 517.4 940 517.0 941 516.8 942 517.4 944 516.5 944 516.5 946 516.6 946 516.8 947 516.9 948 516.7 950 516.6 950 516.8 952 516.5 952 516.6 953 517.0 954 516.7 956 516.1 956 516.6 957 517.0 958 516.2 959 516.6 960 516.9 962 516.6 962 515.9 963 515.6 964 516.4 966 516.3 966 516.8 968 516.0 968 516.3 969 516.0 970 516.3 972 516.1 972 516.1 974 515.4 974 516.7 975 516.5 976 516.3 978 516.0 978 516.1 980 516.1 980 515.6 981 515.9 982 516.0 984 515.4 984 515.0 985 516.3 986 515.5 987 516.7 988 515.2 990 515.0 990 516.1 991 515.6 992 515.3 993 515.5 994 515.4 996 515.2 996 515.7 997 515.1 998 515.1 1000 515.2 1000 515.3 1002 515.5 1002 514.9 1003 514.4 1004 515.1 1006 515.0 1006 514.5 1008 515.2 1008 515.3 1009 514.9 1010 515.2 1012 515.0 1012 514.6 1013 514.9 1014 515.4 1015 514.7 1016 514.5 1018 514.6 1018 515.2 1019 515.0 1020 514.9 1021 515.6 1022 515.2 1024 514.2 1024 514.6 1026 514.0 1026 514.3 1028 514.9 1028 514.2 1030 514.6 1030 514.3 1032 514.3 1032 514.8 1034 514.8 1034 514.8 1036 514.0 1036 514.5 1038 514.3 1038 514.9 1040 514.0 1040 514.6 1042 514.0 1042 514.4 1044 513.9 1044 513.8 1046 514.3 1046 513.8 1048 514.1 1048 514.6 1050 514.5 1050 513.8 1052 514.5 1052 514.2 1054 514.5 1054 513.9 1056 514.5 1056 513.8 1058 513.9 1058 513.7 1060 513.6 1060 514.1 1062 513.5 1062 514.0 1064 513.5 1064 513.8 1066 513.2 1066 513.7 1068 513.8 1068 513.6 1070 513.4 1070 513.4 1072 513.6 1072 513.4 1074 513.9 1074 513.3 1076 513.8 1076 512.7 1078 513.2 1078 513.3 1080 513.5 1080 513.2 1082 512.7 1082 513.1 1084 513.1 1084 513.0 1086 512.9 1086 512.7 1088 513.4 1088 513.4 1090 512.7 1090 512.7 1092 513.1 1092 512.6 1094 511.8 1094 513.4 1096 513.3 1096 513.3 1098 512.3 1098 512.5 1100 512.3 1100 513.1 1102 512.9 1102 512.6 1104 512.1 1104 512.5" fill="none" stroke="#800000" stroke-width="1.0" stroke-linejoin="round"/></g>
<path d="M287.5 677.5V476.5H1104.5V677.5H287.5" fill="none" stroke="#707070" stroke-width="1.3"/>
<line x1="283.5" y1="490.4" x2="287.5" y2="490.4" stroke="#707070"/>
<text x="280.5" y="494.7" font-family="Liberation Sans" font-size="10.5" fill="#8a1c28" stroke="#8a1c28" stroke-width="0.15" text-anchor="end">1,6</text>
<line x1="283.5" y1="508.59" x2="287.5" y2="508.59" stroke="#707070"/>
<text x="280.5" y="512.89" font-family="Liberation Sans" font-size="10.5" fill="#8a1c28" stroke="#8a1c28" stroke-width="0.15" text-anchor="end">1,5</text>
<line x1="283.5" y1="526.78" x2="287.5" y2="526.78" stroke="#707070"/>
<text x="280.5" y="531.0799999999999" font-family="Liberation Sans" font-size="10.5" fill="#8a1c28" stroke="#8a1c28" stroke-width="0.15" text-anchor="end">1,4</text>
<line x1="283.5" y1="544.97" x2="287.5" y2="544.97" stroke="#707070"/>
<text x="280.5" y="549.27" font-family="Liberation Sans" font-size="10.5" fill="#8a1c28" stroke="#8a1c28" stroke-width="0.15" text-anchor="end">1,3</text>
<line x1="283.5" y1="563.16" x2="287.5" y2="563.16" stroke="#707070"/>
<text x="280.5" y="567.4599999999999" font-family="Liberation Sans" font-size="10.5" fill="#8a1c28" stroke="#8a1c28" stroke-width="0.15" text-anchor="end">1,2</text>
<line x1="283.5" y1="581.35" x2="287.5" y2="581.35" stroke="#707070"/>
<text x="280.5" y="585.65" font-family="Liberation Sans" font-size="10.5" fill="#8a1c28" stroke="#8a1c28" stroke-width="0.15" text-anchor="end">1,1</text>
<line x1="283.5" y1="599.54" x2="287.5" y2="599.54" stroke="#707070"/>
<text x="280.5" y="603.8399999999999" font-family="Liberation Sans" font-size="10.5" fill="#8a1c28" stroke="#8a1c28" stroke-width="0.15" text-anchor="end">1,0</text>
<line x1="283.5" y1="617.73" x2="287.5" y2="617.73" stroke="#707070"/>
<text x="280.5" y="622.03" font-family="Liberation Sans" font-size="10.5" fill="#8a1c28" stroke="#8a1c28" stroke-width="0.15" text-anchor="end">0,9</text>
<line x1="283.5" y1="635.92" x2="287.5" y2="635.92" stroke="#707070"/>
<text x="280.5" y="640.2199999999999" font-family="Liberation Sans" font-size="10.5" fill="#8a1c28" stroke="#8a1c28" stroke-width="0.15" text-anchor="end">0,8</text>
<line x1="283.5" y1="654.11" x2="287.5" y2="654.11" stroke="#707070"/>
<text x="280.5" y="658.41" font-family="Liberation Sans" font-size="10.5" fill="#8a1c28" stroke="#8a1c28" stroke-width="0.15" text-anchor="end">0,7</text>
<line x1="283.5" y1="672.3" x2="287.5" y2="672.3" stroke="#707070"/>
<text x="280.5" y="676.5999999999999" font-family="Liberation Sans" font-size="10.5" fill="#8a1c28" stroke="#8a1c28" stroke-width="0.15" text-anchor="end">0,6</text>
<line x1="287.5" y1="677.5" x2="287.5" y2="680.5" stroke="#707070"/>
<text x="287.5" y="691.0" font-family="Liberation Sans" font-size="10.5" fill="#111" stroke="#111" stroke-width="0.05" text-anchor="middle">0:00</text>
<line x1="370.65" y1="677.5" x2="370.65" y2="680.5" stroke="#707070"/>
<text x="370.65" y="691.0" font-family="Liberation Sans" font-size="10.5" fill="#111" stroke="#111" stroke-width="0.05" text-anchor="middle">6:00</text>
<line x1="453.8" y1="677.5" x2="453.8" y2="680.5" stroke="#707070"/>
<text x="453.8" y="691.0" font-family="Liberation Sans" font-size="10.5" fill="#111" stroke="#111" stroke-width="0.05" text-anchor="middle">12:00</text>
<line x1="536.95" y1="677.5" x2="536.95" y2="680.5" stroke="#707070"/>
<text x="536.95" y="691.0" font-family="Liberation Sans" font-size="10.5" fill="#111" stroke="#111" stroke-width="0.05" text-anchor="middle">18:00</text>
<line x1="620.1" y1="677.5" x2="620.1" y2="680.5" stroke="#707070"/>
<text x="620.1" y="691.0" font-family="Liberation Sans" font-size="10.5" fill="#111" stroke="#111" stroke-width="0.05" text-anchor="middle">1d 0:00</text>
<line x1="703.25" y1="677.5" x2="703.25" y2="680.5" stroke="#707070"/>
<text x="703.25" y="691.0" font-family="Liberation Sans" font-size="10.5" fill="#111" stroke="#111" stroke-width="0.05" text-anchor="middle">1d 6:00</text>
<line x1="786.4000000000001" y1="677.5" x2="786.4000000000001" y2="680.5" stroke="#707070"/>
<text x="786.4000000000001" y="691.0" font-family="Liberation Sans" font-size="10.5" fill="#111" stroke="#111" stroke-width="0.05" text-anchor="middle">1d 12:00</text>
<line x1="869.5500000000001" y1="677.5" x2="869.5500000000001" y2="680.5" stroke="#707070"/>
<text x="869.5500000000001" y="691.0" font-family="Liberation Sans" font-size="10.5" fill="#111" stroke="#111" stroke-width="0.05" text-anchor="middle">1d 18:00</text>
<line x1="952.7" y1="677.5" x2="952.7" y2="680.5" stroke="#707070"/>
<text x="952.7" y="691.0" font-family="Liberation Sans" font-size="10.5" fill="#111" stroke="#111" stroke-width="0.05" text-anchor="middle">2d 0:00</text>
<line x1="1035.85" y1="677.5" x2="1035.85" y2="680.5" stroke="#707070"/>
<text x="1035.85" y="691.0" font-family="Liberation Sans" font-size="10.5" fill="#111" stroke="#111" stroke-width="0.05" text-anchor="middle">2d 6:00</text>
</svg>
<div class="a" style="left:253px;top:63px;width:1px;height:641px;background:#6e6e6e"></div>
<div class="a" style="left:889px;top:157px;width:1px;height:200px;background:#d0d0d0"></div>
<div class="a" style="left:952px;top:477px;width:1px;height:200px;background:#d0d0d0"></div>
<div class="a" style="left:901px;top:195px;width:169px;height:428px;background:linear-gradient(90deg,#ffffff,#fffff6);border:1px solid #111"></div>
<div class="t" style="left:905px;top:199px;font-size:11px;letter-spacing:0.12px;color:#111">Duration: 12d 2:18:35 (290,31h)</div>
<div class="t" style="left:905px;top:215px;font-size:11px;letter-spacing:0.12px;color:#111">Time: 8.8.2016 12:28:56</div>
<div class="a" style="left:905px;top:231px;width:161px;height:1px;background:#333"></div>
<div class="a" style="left:907px;top:240px;width:15px;height:17px;background:#ff1010;border:1px solid rgba(0,0,0,0.25)"></div>
<div class="t" style="left:929px;top:244px;font-size:11px;font-weight:normal;color:#111">OD 680 #6</div>
<div class="a" style="left:995px;top:238px;width:33px;height:22px;background:#e8e8e8;border:1px solid #c4c4c4"></div>
<div class="t" style="left:999px;top:244px;font-size:11px;color:#111">1,389</div>
<div class="a" style="left:907px;top:264px;width:15px;height:17px;background:#ffc000;border:1px solid rgba(0,0,0,0.25)"></div>
<div class="t" style="left:929px;top:268px;font-size:11px;font-weight:normal;color:#111">OD 680 #5</div>
<div class="a" style="left:995px;top:262px;width:33px;height:22px;background:#e8e8e8;border:1px solid #c4c4c4"></div>
<div class="t" style="left:999px;top:268px;font-size:11px;color:#111">1,31</div>
<div class="a" style="left:907px;top:288px;width:15px;height:17px;background:#8b0000;border:1px solid rgba(0,0,0,0.25)"></div>
<div class="t" style="left:929px;top:292px;font-size:11px;font-weight:normal;color:#111">OD 720 #8</div>
<div class="a" style="left:995px;top:286px;width:33px;height:22px;background:#e8e8e8;border:1px solid #c4c4c4"></div>
<div class="t" style="left:999px;top:292px;font-size:11px;color:#111">1,475</div>
<div class="a" style="left:907px;top:312px;width:15px;height:17px;background:#80ff00;border:1px solid rgba(0,0,0,0.25)"></div>
<div class="t" style="left:929px;top:316px;font-size:11px;font-weight:normal;color:#111">OD 680 #4</div>
<div class="a" style="left:995px;top:310px;width:33px;height:22px;background:#e8e8e8;border:1px solid #c4c4c4"></div>
<div class="t" style="left:999px;top:316px;font-size:11px;color:#111">1,379</div>
<div class="a" style="left:907px;top:336px;width:15px;height:17px;background:#ff1010;border:1px solid rgba(0,0,0,0.25)"></div>
<div class="t" style="left:929px;top:340px;font-size:11px;font-weight:normal;color:#111">OD 680 #7</div>
<div class="a" style="left:995px;top:334px;width:33px;height:22px;background:#e8e8e8;border:1px solid #c4c4c4"></div>
<div class="t" style="left:999px;top:340px;font-size:11px;color:#111">1,38</div>
<div class="a" style="left:907px;top:360px;width:15px;height:17px;background:#a00000;border:1px solid rgba(0,0,0,0.25)"></div>
<div class="t" style="left:929px;top:364px;font-size:11px;font-weight:normal;color:#111">OD 680 #8</div>
<div class="a" style="left:995px;top:358px;width:33px;height:22px;background:#e8e8e8;border:1px solid #c4c4c4"></div>
<div class="t" style="left:999px;top:364px;font-size:11px;color:#111">1,472</div>
<div class="a" style="left:907px;top:384px;width:15px;height:17px;background:#0030ff;border:1px solid rgba(0,0,0,0.25)"></div>
<div class="t" style="left:929px;top:388px;font-size:11px;font-weight:normal;color:#111">OD 680 #2</div>
<div class="a" style="left:995px;top:382px;width:33px;height:22px;background:#e8e8e8;border:1px solid #c4c4c4"></div>
<div class="t" style="left:999px;top:388px;font-size:11px;color:#111">1,388</div>
<div class="a" style="left:907px;top:408px;width:15px;height:17px;background:#6a00b0;border:1px solid rgba(0,0,0,0.25)"></div>
<div class="t" style="left:929px;top:412px;font-size:11px;font-weight:normal;color:#111">OD 680 #1</div>
<div class="a" style="left:995px;top:406px;width:33px;height:22px;background:#e8e8e8;border:1px solid #c4c4c4"></div>
<div class="t" style="left:999px;top:412px;font-size:11px;color:#111">1,495</div>
<div class="a" style="left:907px;top:432px;width:15px;height:17px;background:#20ffb0;border:1px solid rgba(0,0,0,0.25)"></div>
<div class="t" style="left:929px;top:436px;font-size:11px;font-weight:normal;color:#111">OD 680 #3</div>
<div class="a" style="left:995px;top:430px;width:33px;height:22px;background:#e8e8e8;border:1px solid #c4c4c4"></div>
<div class="t" style="left:999px;top:436px;font-size:11px;color:#111">1,49</div>
<div class="a" style="left:907px;top:456px;width:15px;height:17px;background:#6a00c8;border:1px solid rgba(0,0,0,0.25)"></div>
<div class="t" style="left:929px;top:460px;font-size:11px;font-weight:normal;color:#111">OD 720 #1</div>
<div class="a" style="left:995px;top:454px;width:33px;height:22px;background:#e8e8e8;border:1px solid #c4c4c4"></div>
<div class="t" style="left:999px;top:460px;font-size:11px;color:#111">1,435</div>
<div class="a" style="left:907px;top:480px;width:15px;height:17px;background:#00ff40;border:1px solid rgba(0,0,0,0.25)"></div>
<div class="t" style="left:929px;top:484px;font-size:11px;font-weight:bold;letter-spacing:0.5px;color:#111">OD 720 #3</div>
<div class="a" style="left:995px;top:478px;width:33px;height:22px;background:#e8e8e8;border:1px solid #c4c4c4"></div>
<div class="t" style="left:999px;top:484px;font-size:11px;color:#111">1,441</div>
<div class="a" style="left:907px;top:504px;width:15px;height:17px;background:#ffa000;border:1px solid rgba(0,0,0,0.25)"></div>
<div class="t" style="left:929px;top:508px;font-size:11px;font-weight:normal;color:#111">OD 720 #5</div>
<div class="a" style="left:995px;top:502px;width:33px;height:22px;background:#e8e8e8;border:1px solid #c4c4c4"></div>
<div class="t" style="left:999px;top:508px;font-size:11px;color:#111">1,316</div>
<div class="a" style="left:907px;top:528px;width:15px;height:17px;background:#ff1010;border:1px solid rgba(0,0,0,0.25)"></div>
<div class="t" style="left:929px;top:532px;font-size:11px;font-weight:normal;color:#111">OD 720 #7</div>
<div class="a" style="left:995px;top:526px;width:33px;height:22px;background:#e8e8e8;border:1px solid #c4c4c4"></div>
<div class="t" style="left:999px;top:532px;font-size:11px;color:#111">1,422</div>
<div class="a" style="left:907px;top:552px;width:15px;height:17px;background:#0050ff;border:1px solid rgba(0,0,0,0.25)"></div>
<div class="t" style="left:929px;top:556px;font-size:11px;font-weight:normal;color:#111">OD 720 #2</div>
<div class="a" style="left:995px;top:550px;width:33px;height:22px;background:#e8e8e8;border:1px solid #c4c4c4"></div>
<div class="t" style="left:999px;top:556px;font-size:11px;color:#111">1,461</div>
<div class="a" style="left:907px;top:576px;width:15px;height:17px;background:#ff1010;border:1px solid rgba(0,0,0,0.25)"></div>
<div class="t" style="left:929px;top:580px;font-size:11px;font-weight:normal;color:#111">OD 720 #6</div>
<div class="a" style="left:995px;top:574px;width:33px;height:22px;background:#e8e8e8;border:1px solid #c4c4c4"></div>
<div class="t" style="left:999px;top:580px;font-size:11px;color:#111">1,407</div>
<div class="a" style="left:907px;top:600px;width:15px;height:17px;background:#90ff10;border:1px solid rgba(0,0,0,0.25)"></div>
<div class="t" style="left:929px;top:604px;font-size:11px;font-weight:normal;color:#111">OD 720 #4</div>
<div class="a" style="left:995px;top:598px;width:33px;height:22px;background:#e8e8e8;border:1px solid #c4c4c4"></div>
<div class="t" style="left:999px;top:604px;font-size:11px;color:#111">1,433</div>
</body></html>
